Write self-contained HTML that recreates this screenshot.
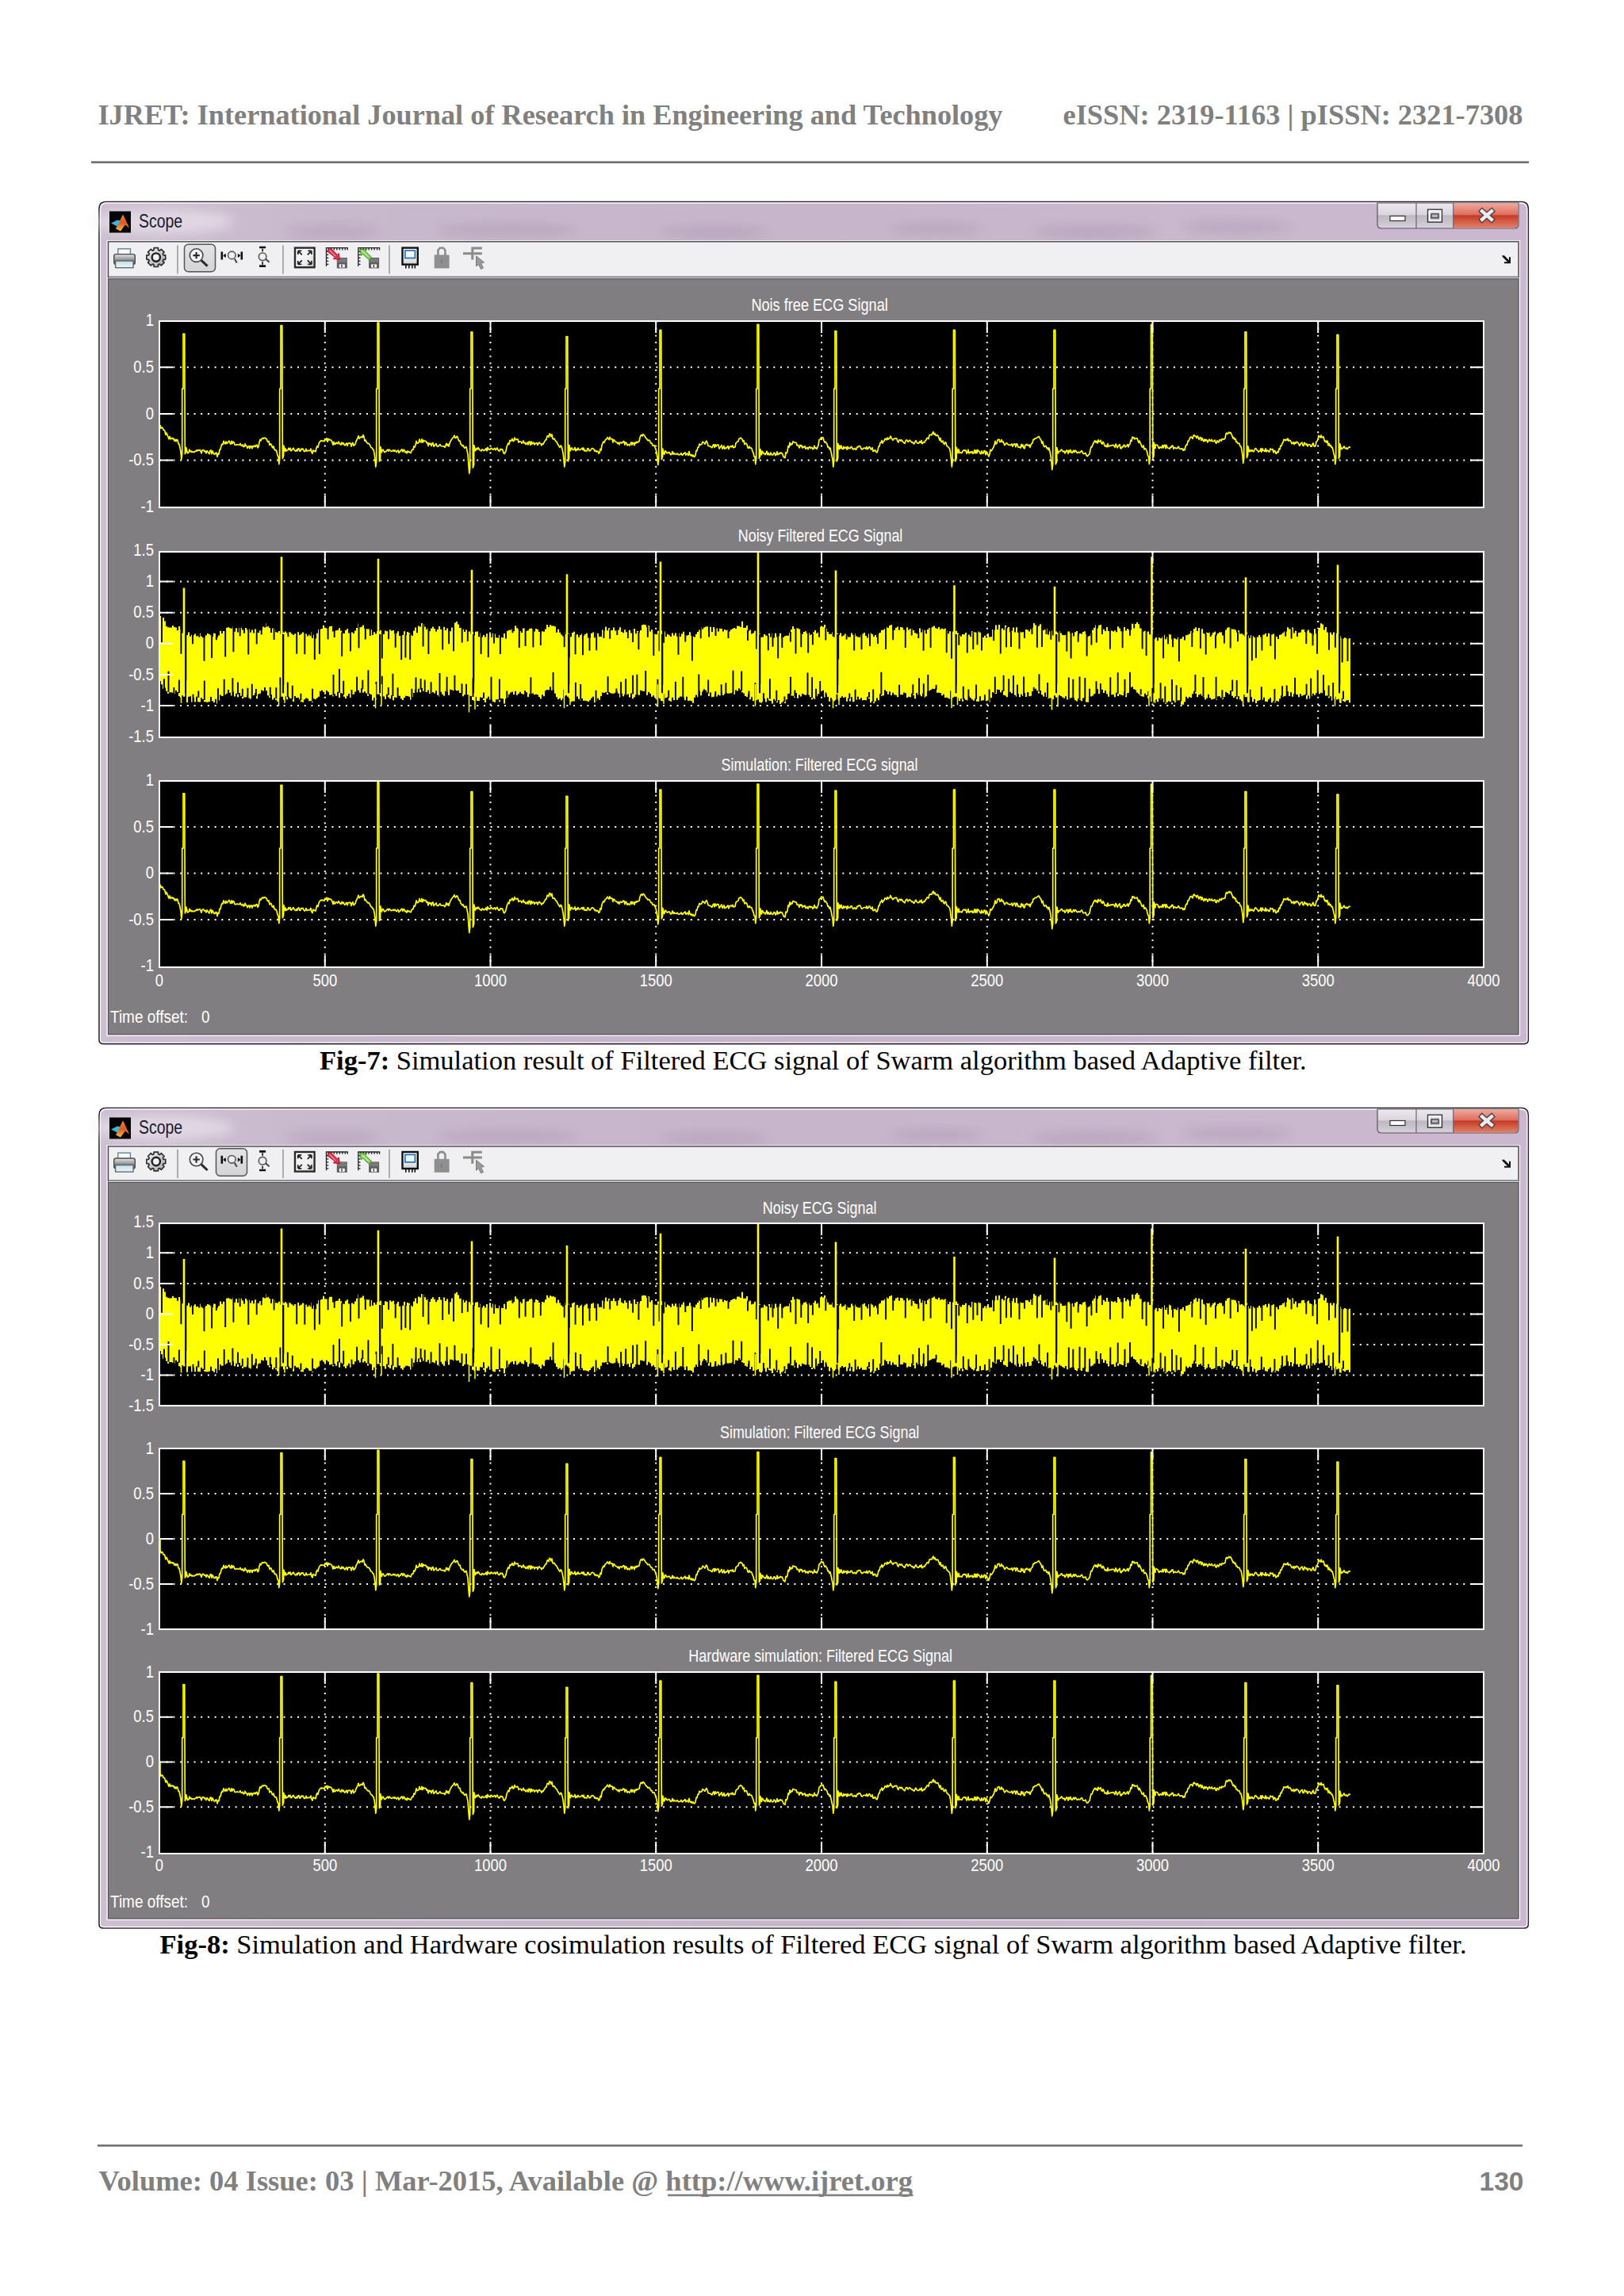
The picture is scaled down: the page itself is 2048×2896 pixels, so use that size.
<!DOCTYPE html>
<html><head><meta charset="utf-8"><title>IJRET page 130</title>
<style>
html,body{margin:0;padding:0;background:#fff}
body{width:2048px;height:2896px;position:relative;overflow:hidden}
svg{position:absolute;left:0;top:0}
.hd{font-family:"Liberation Serif",serif;font-weight:bold;fill:#808080}
.cap{font-family:"Liberation Serif",serif;fill:#000}
.ax{font-family:"Liberation Sans",sans-serif;font-size:21.5px;fill:#fff}
.ttl{font-family:"Liberation Sans",sans-serif;font-size:23px;fill:#1a1a2a}
</style></head><body>
<svg width="2048" height="2896" viewBox="0 0 2048 2896">
<defs>
<linearGradient id="frame" x1="0" y1="0" x2="1" y2="0">
<stop offset="0" stop-color="#cdbfd1"/><stop offset="0.15" stop-color="#c9b9cd"/><stop offset="0.5" stop-color="#c6b5cb"/><stop offset="0.8" stop-color="#c9b8ce"/><stop offset="1" stop-color="#cbb8d0"/>
</linearGradient>
<linearGradient id="btn" x1="0" y1="0" x2="0" y2="1">
<stop offset="0" stop-color="#ece8ee"/><stop offset="0.45" stop-color="#dcd7df"/><stop offset="0.5" stop-color="#bdb7c2"/><stop offset="1" stop-color="#d6d1da"/>
</linearGradient>
<linearGradient id="close" x1="0" y1="0" x2="0" y2="1">
<stop offset="0" stop-color="#f1a79a"/><stop offset="0.45" stop-color="#dc7060"/><stop offset="0.5" stop-color="#c73a25"/><stop offset="1" stop-color="#e0826a"/>
</linearGradient>
<filter id="blur" x="-50%" y="-50%" width="200%" height="200%"><feGaussianBlur stdDeviation="7"/></filter>
<linearGradient id="mlogo" x1="0" y1="0" x2="0" y2="1"><stop offset="0" stop-color="#f08a2a"/><stop offset="0.5" stop-color="#e0561e"/><stop offset="1" stop-color="#f6c040"/></linearGradient>
<linearGradient id="pressed" x1="0" y1="0" x2="0" y2="1"><stop offset="0" stop-color="#e4e3e6"/><stop offset="1" stop-color="#d4d3d6"/></linearGradient>
<linearGradient id="prbody" x1="0" y1="0" x2="0" y2="1"><stop offset="0" stop-color="#e8e8e8"/><stop offset="0.3" stop-color="#b8b8b8"/><stop offset="0.6" stop-color="#8a8a8a"/><stop offset="1" stop-color="#555"/></linearGradient>
<linearGradient id="prtray" x1="0" y1="0" x2="0" y2="1"><stop offset="0" stop-color="#c6dde3"/><stop offset="1" stop-color="#eaf6fa"/></linearGradient>
<linearGradient id="gearg" x1="0" y1="0" x2="1" y2="1"><stop offset="0" stop-color="#f4f4f4"/><stop offset="1" stop-color="#a8a8a8"/></linearGradient>
<linearGradient id="autog" x1="0" y1="0" x2="1" y2="1"><stop offset="0" stop-color="#fafafa"/><stop offset="0.6" stop-color="#f0f0f0"/><stop offset="1" stop-color="#c8c8c8"/></linearGradient>
<linearGradient id="monog" x1="0" y1="0" x2="0" y2="1"><stop offset="0" stop-color="#f8f8f8"/><stop offset="0.6" stop-color="#f0f0f0"/><stop offset="1" stop-color="#cfcfcf"/></linearGradient>

</defs>
<text x="123.5" y="157" class="hd" font-size="36.2" textLength="1141" lengthAdjust="spacingAndGlyphs">IJRET: International Journal of Research in Engineering and Technology</text>
<text x="1340.5" y="157" class="hd" font-size="36.2" textLength="580" lengthAdjust="spacingAndGlyphs">eISSN: 2319-1163 | pISSN: 2321-7308</text>
<rect x="115" y="203.3" width="1813" height="2.7" fill="#727272"/>
<path d="M125 263.5Q125 254.5 134 254.5H1918.3Q1927.3 254.5 1927.3 263.5V1311.6Q1927.3 1316.6 1922.3 1316.6H130Q125 1316.6 125 1311.6Z" fill="url(#frame)" stroke="#262626" stroke-width="1.6"/>
<path d="M126.5 264Q126.5 256 134.5 256H1917.8Q1925.8 256 1925.8 264V1311.1Q1925.8 1315.1 1921.8 1315.1H130.5Q126.5 1315.1 126.5 1311.1Z" fill="none" stroke="#fbf6fc" stroke-width="1.3"/>
<ellipse cx="420" cy="292.5" rx="60" ry="8" fill="#7a5a80" opacity="0.16" filter="url(#blur)"/>
<ellipse cx="640" cy="290.5" rx="90" ry="9" fill="#7a5a80" opacity="0.16" filter="url(#blur)"/>
<ellipse cx="900" cy="292.5" rx="70" ry="8" fill="#7a5a80" opacity="0.16" filter="url(#blur)"/>
<ellipse cx="1180" cy="288.5" rx="60" ry="7" fill="#7a5a80" opacity="0.16" filter="url(#blur)"/>
<ellipse cx="1380" cy="292.5" rx="80" ry="9" fill="#7a5a80" opacity="0.16" filter="url(#blur)"/>
<ellipse cx="1560" cy="286.5" rx="70" ry="8" fill="#7a5a80" opacity="0.16" filter="url(#blur)"/>
<ellipse cx="205" cy="279.5" rx="90" ry="16" fill="#f2ecf4" opacity="0.55" filter="url(#blur)"/>
<rect x="138" y="266.5" width="27" height="27" fill="#050505"/>
<path d="M146 288.5L151 278.5L155 270.5L158 276.5L163 287.5L158 283.5L152 291.5Z" fill="url(#mlogo)"/>
<path d="M140 281.5L148 277.5L152 278.5L148 285.5L144 283.5Z" fill="#3fb6d6"/>
<text x="175" y="287" class="ttl" textLength="55" lengthAdjust="spacingAndGlyphs">Scope</text>
<path d="M1737 256V283Q1737 288 1742 288H1910Q1915 288 1915 283V256Z" fill="url(#btn)" stroke="#5a5560" stroke-width="1.2"/>
<path d="M1833 256.6V287.4H1910Q1914.4 287.4 1914.4 283V256.6Z" fill="url(#close)"/>
<path d="M1786 256V288M1832.7 256V288" stroke="#6a6470" stroke-width="1.2"/>
<rect x="1753" y="272.5" width="19" height="6" fill="#fff" stroke="#333" stroke-width="1.2"/>
<rect x="1800.5" y="264.2" width="18" height="16" fill="none" stroke="#333" stroke-width="1.3"/>
<rect x="1802.5" y="266.2" width="14" height="12" fill="none" stroke="#fff" stroke-width="1.5"/>
<rect x="1805" y="269.8" width="9" height="5" fill="#b9b5be" stroke="#333" stroke-width="1.2"/>
<path d="M1869 266.4L1881 276.8M1881 266.4L1869 276.8" stroke="#4a3a44" stroke-width="7" stroke-linecap="square"/>
<path d="M1869 266.4L1881 276.8M1881 266.4L1869 276.8" stroke="#ececec" stroke-width="4.4" stroke-linecap="square"/>
<rect x="135" y="303.8" width="1781.5" height="1002.4" fill="none" stroke="#fbf6fc" stroke-width="1.3"/>
<rect x="136.5" y="304.8" width="1778.5" height="45" fill="#f0eff1" stroke="#4a4a4a" stroke-width="1.4"/>
<rect x="137" y="348.3" width="1778" height="2" fill="#8e8c90"/>
<rect x="137" y="350.3" width="1778" height="1.5" fill="#dcdadd"/>
<rect x="136.5" y="351.8" width="1778.5" height="952.9" fill="#807e81" stroke="#4f4955" stroke-width="1"/>
<rect x="223.2" y="309.3" width="1.6" height="36" fill="#9c9c9c"/>
<rect x="356.2" y="309.3" width="1.6" height="36" fill="#9c9c9c"/>
<rect x="490.2" y="309.3" width="1.6" height="36" fill="#9c9c9c"/>
<rect x="232.5" y="308.3" width="39" height="34.5" rx="5" fill="url(#pressed)" stroke="#555" stroke-width="1.5"/>
<g transform="translate(143 313.1)"><rect x="5.8" y="0.7" width="15.6" height="7.5" fill="#f4fafb" stroke="#6a8288" stroke-width="1.4"/><rect x="0.7" y="7.5" width="26.6" height="13" rx="2.5" fill="url(#prbody)" stroke="#4a4a4a" stroke-width="1.4"/><rect x="2.6" y="16" width="22.5" height="8.6" fill="url(#prtray)" stroke="#52666c" stroke-width="1.3"/></g>
<g transform="translate(196.8 324.6)"><path d="M9.2 -2.8L11.9 -2.7L11.9 2.7L9.2 2.8L8.5 4.5L10.3 6.5L6.5 10.3L4.5 8.5L2.8 9.2L2.7 11.9L-2.7 11.9L-2.8 9.2L-4.5 8.5L-6.5 10.3L-10.3 6.5L-8.5 4.5L-9.2 2.8L-11.9 2.7L-11.9 -2.7L-9.2 -2.8L-8.5 -4.5L-10.3 -6.5L-6.5 -10.3L-4.5 -8.5L-2.8 -9.2L-2.7 -11.9L2.7 -11.9L2.8 -9.2L4.5 -8.5L6.5 -10.3L10.3 -6.5L8.5 -4.5Z" fill="url(#gearg)" stroke="#2e2e2e" stroke-width="1.7" stroke-linejoin="round"/><circle r="5.2" fill="none" stroke="#222" stroke-width="2.4"/><circle r="3.4" fill="#f2f2f2"/></g>
<g transform="translate(247.6 322.1)" fill="none" stroke="#2a2a2a"><circle r="8.3" stroke-width="1.6" fill="#f4f4f6" stroke="#444"/><path d="M-4.2 0h8.4M0 -4.2v8.4" stroke-width="2.2"/><path d="M6.2 6.2L14 13.5" stroke-width="3"/></g>
<g transform="translate(292.3 321.9)" fill="none" stroke="#111"><path d="M-12.5 -4.5v10M12.5 -4.5v10" stroke-width="2.6"/><path d="M-10.5 0.5l2.5-2v4zM10.5 0.5l-2.5-2v4z" fill="#111" stroke-width="1"/><circle r="4.8" stroke-width="1.6" stroke="#555" fill="#eee"/><path d="M3.5 4.5L6.5 9.5" stroke-width="2" stroke="#444"/></g>
<g transform="translate(331.1 323.8)" fill="none" stroke="#111"><path d="M-4 -11.8h8M-4 11.8h8" stroke-width="2.6"/><path d="M0 -10v3.5M0 10v-3.5" stroke-width="1.6"/><circle r="4.8" stroke-width="1.6" stroke="#555" fill="#eee"/><path d="M4 3L8.5 7" stroke-width="2" stroke="#444"/></g>
<g transform="translate(370.8 311.4)"><rect x="1.2" y="1.2" width="24.6" height="24.6" fill="url(#autog)" stroke="#2b2b2b" stroke-width="2.4"/><path d="M5 5l5 5M5 5h4.5M5 5v4.5M22 5l-5 5M22 5h-4.5M22 5v4.5M5 22l5-5M5 22h4.5M5 22v-4.5M22 22l-5-5M22 22h-4.5M22 22v-4.5" stroke="#222" stroke-width="1.8" fill="none"/></g>
<g transform="translate(410.3 311.4)"><path d="M0.5 1.2h28M1.2 0.5v24M4 1v3M7.5 1v3M11 1v3M14.5 1v3M18 1v3M21.5 1v3M25 1v3M28 1v3M1 6h3M1 10h3M1 14h3M1 18h3M1 22h3" stroke="#222" stroke-width="1.3" fill="none"/><rect x="14.5" y="13.6" width="13" height="13.4" fill="#5e5e5e"/><rect x="15.5" y="14.5" width="11" height="5" fill="#7a7a7a"/><rect x="17.5" y="22" width="7" height="4" fill="#fff"/><rect x="20" y="22.5" width="1.5" height="3" fill="#333"/><path d="M2.5 4.5L6.5 1.5L15 10L17 8L18 16L10 15L12 13L3.5 6.5Z" fill="#e8304a" stroke="#b01020" stroke-width="1"/><path d="M5 4L13 12" stroke="#f6a0b0" stroke-width="1.2"/></g>
<g transform="translate(450.6 311.4)"><path d="M0.5 1.2h28M1.2 0.5v24M4 1v3M7.5 1v3M11 1v3M14.5 1v3M18 1v3M21.5 1v3M25 1v3M28 1v3M1 6h3M1 10h3M1 14h3M1 18h3M1 22h3" stroke="#222" stroke-width="1.3" fill="none"/><rect x="14.5" y="13.6" width="13" height="13.4" fill="#5e5e5e"/><rect x="15.5" y="14.5" width="11" height="5" fill="#7a7a7a"/><rect x="17.5" y="22" width="7" height="4" fill="#fff"/><rect x="20" y="22.5" width="1.5" height="3" fill="#333"/><path d="M3 3L12 3.5L10 5.5L18 13L15 16.5L7 9L5 11Z" fill="#8ad45a" stroke="#3c8c2a" stroke-width="1"/><path d="M6 5L14 12.5" stroke="#c4f0a0" stroke-width="1.2"/></g>
<g transform="translate(506.3 311.4)"><rect x="1.2" y="1.2" width="19.3" height="21" fill="url(#monog)" stroke="#111" stroke-width="2.4"/><rect x="4.6" y="4.6" width="12.5" height="9.5" fill="#eaf8fd" stroke="#1c68b8" stroke-width="1.6"/><path d="M5.5 23v4M9.5 23v4M13.5 23v4M17 23v4" stroke="#111" stroke-width="1.6"/></g>
<g transform="translate(547.4 311.4)"><path d="M5 10.5V4L7.5 1.3H11.5L14 4V10.5" fill="none" stroke="#8c8c8c" stroke-width="2.6"/><rect x="0.3" y="10" width="18.9" height="17" fill="#8f8f8f"/><rect x="8.5" y="16" width="2" height="5" fill="#7a7a7a"/></g>
<g transform="translate(584 311.4)"><path d="M10.3 1.5h13.5M0 8.3h23.8M11.8 1.5v14.5" stroke="#8a8a8a" stroke-width="3" fill="none"/><path d="M16.5 11.5L16.5 24.5L19.5 22L22.5 28L25.5 26.5L22.5 20.5L26.5 19.5Z" fill="#9a9a9a" stroke="#7a7a7a" stroke-width="1"/></g>
<path d="M1894 322.3h3l6 6v-4h2v8h-8v-2h4l-6-6Z" fill="#111"/>
<rect x="201" y="405" width="1670" height="235" fill="#000"/>
<path d="M201 463.3H1871M201 522H1871M201 580.6H1871M409.8 405V640M618.5 405V640M827.2 405V640M1036 405V640M1244.8 405V640M1453.5 405V640M1662.2 405V640" stroke="#fff" stroke-width="2" stroke-dasharray="2 6.7" fill="none"/>
<path d="M201 131.7L202 132.1L203 135.9L204 134.7L205 134.8L206 137.8L207 137.9L208 139.6L209 144L210 141.6L211 143.8L212 146.5L213 149.2L214 146.1L215 149.4L216 148.5L217 148L218 149.3L219 148.6L220 151.7L221 150L222 152.2L223 150L224 150.7L225 155.5L226 155.8L227 160.5L228 165.7L228.8 175.1L229.7 168L229.7 85.8L231 85.8L231 16.5L232.8 16.5L233.2 144.5L233.4 168L234.6 164.5L234.8 160.2L236.5 167.2L237 166.8L238 166.4L239 162.6L240 165.3L241 164.4L242 166.1L243 165.1L244 165.7L245 166L246 164.8L247 164.8L248 163.2L249 164.4L250 163.2L251 163.6L252 162.9L253 164.6L254 167.3L255 163.7L256 163.2L257 163.5L258 165.3L259 164.6L260 167.2L261 164.1L262 165.4L263 167L264 168.1L265 164.1L266 163.4L267 168.1L268 164.5L269 166.6L270 168.6L271 168.5L272 166.7L273 166.8L274 171.7L275 167.7L276 168.4L277 162.6L278 162.5L279 157.9L280 155.6L281 156.3L282 151.9L283 154.6L284 155.5L285 152.5L286 155.1L287 154L288 152.6L289 151.6L290 154.5L291 155.7L292 151.9L293 155.3L294 152.6L295 153.4L296 156.6L297 156.8L298 156.7L299 156.1L300 156.5L301 156.8L302 156.6L303 155L304 157.4L305 157.9L306 156.5L307 159.1L308 158.9L309 155.5L310 158L311 158L312 160.9L313 158.9L314 158.1L315 161.2L316 158.2L317 158.2L318 161.3L319 158.2L320 158.9L321 157.6L322 159.2L323 157.2L324 156.8L325 160.4L326 159L327 153.5L328 149.8L329 151.3L330 149.3L331 148L332 148.9L333 148L334 147.7L335 148.7L336 148.9L337 151.9L338 152.9L339 152L340 157.1L341 155.5L342 155.8L343 159.1L344 160.5L345 158.5L346 162.3L347 163.6L348 163.2L349 165.3L350 170L351 171.5L351.8 181L352.7 173.9L352.7 85.8L354 85.8L354 5.9L355.8 5.9L356.2 150.4L356.4 173.9L357.6 170.4L357.8 157.7L359.5 164.7L360 161.4L361 164.5L362 163.4L363 163.3L364 160.8L365 162.9L366 160.8L367 164.3L368 163.5L369 161.9L370 160.8L371 163L372 164.2L373 164.8L374 162.7L375 164.5L376 161.4L377 161.3L378 164.7L379 164.2L380 161.5L381 162.4L382 161.6L383 164L384 165.2L385 164.4L386 161.8L387 164.6L388 164.2L389 163.9L390 163.9L391 164L392 161.6L393 166.2L394 167.7L395 163.4L396 164.4L397 164.5L398 165.3L399 160.3L400 158.1L401 159.9L402 155.4L403 153.1L404 152.2L405 151.1L406 152L407 151.5L408 151.8L409 152.3L410 149.3L411 150.6L412 148.3L413 152.8L414 148.9L415 150.6L416 149.9L417 150.6L418 151.2L419 153.4L420 156.7L421 153L422 156.1L423 155.6L424 153.8L425 154.6L426 155.3L427 152.7L428 154.5L429 156L430 156.6L431 153.6L432 155.7L433 154.2L434 156.5L435 157.5L436 155.8L437 154.5L438 157.9L439 154.8L440 154.3L441 154.8L442 154.6L443 158.6L444 155.3L445 153.9L446 157.9L447 156.6L448 155.9L449 152.3L450 150.6L451 148.1L452 145.3L453 148.7L454 147.8L455 146.8L456 146.3L457 147.5L458 144.2L459 146.3L460 151.7L461 150.7L462 152.9L463 154.1L464 155.1L465 154.8L466 156L467 158.2L468 160L469 160.3L470 162.3L471 162.7L472 167.4L473 175.1L473.8 184.5L474.7 177.4L474.7 85.8L476 85.8L476 2.4L477.8 2.4L478.2 153.9L478.4 177.4L479.6 173.9L479.8 159.1L481.5 166.2L482 163.5L483 162.7L484 164.5L485 166.1L486 165.6L487 164.7L488 163.5L489 162.6L490 164.7L491 162.6L492 163.6L493 164.6L494 164.9L495 164.3L496 163.3L497 164.8L498 163.4L499 164.7L500 165.8L501 164.4L502 163.6L503 166.8L504 165L505 165.1L506 162.8L507 162.5L508 165.5L509 162.8L510 163.4L511 166.2L512 165.2L513 167.3L514 164.4L515 165.9L516 165.4L517 166.5L518 166.9L519 164.2L520 162.7L521 162.9L522 158.5L523 159.6L524 157.1L525 151.9L526 154.8L527 154.3L528 153.9L529 149.6L530 152.9L531 153.4L532 149.5L533 153.8L534 150.7L535 152.1L536 151.8L537 151.8L538 154.3L539 153.7L540 158L541 154.4L542 155.8L543 154.9L544 158.1L545 154.9L546 154.1L547 158.7L548 157.5L549 156.4L550 155.1L551 158.3L552 158.7L553 158.5L554 156.7L555 156.1L556 158.1L557 158.3L558 158.3L559 158.6L560 158.3L561 159.9L562 157.5L563 154.9L564 157.7L565 155.8L566 158.6L567 155L568 152.4L569 150.5L570 149L571 148.1L572 146.7L573 144.7L574 148L575 147.8L576 145.9L577 146.5L578 150.1L579 151.8L580 151.6L581 155.6L582 156.5L583 158.1L584 157.1L585 159.5L586 160.9L587 159.6L588 159.2L589 163.9L590 168.6L591 183.3L591.8 192.7L592.7 185.7L592.7 85.8L594 85.8L594 14.1L595.8 14.1L596.2 162.2L596.4 185.7L597.6 182.1L597.8 157.2L599.5 164.2L600 162.9L601 160.9L602 162.4L603 160.2L604 161.6L605 163.3L606 163.6L607 164.6L608 162.3L609 162.8L610 164L611 163L612 163.3L613 161L614 164.3L615 159.9L616 162.6L617 162L618 162.7L619 160.9L620 161L621 162.4L622 162.8L623 161.6L624 161L625 163.3L626 161.7L627 160.5L628 163.1L629 164.4L630 164.4L631 161.9L632 162.8L633 162L634 163.2L635 167L636 167.9L637 166.4L638 164.4L639 159.4L640 156.6L641 154.5L642 156L643 151L644 152.1L645 150.9L646 149L647 152L648 151.7L649 147.6L650 150.1L651 150.1L652 149.5L653 149.6L654 153.6L655 152.5L656 152.5L657 152.8L658 154.8L659 153.3L660 151.5L661 154.5L662 153.8L663 156.1L664 155.4L665 153.5L666 156.5L667 152.6L668 152.6L669 156.9L670 152.7L671 155.7L672 153.8L673 154L674 156.5L675 154.6L676 154.9L677 154.2L678 157.1L679 154.7L680 153.5L681 154.8L682 155.3L683 157.4L684 155.2L685 155.8L686 153.7L687 152.1L688 150.4L689 150.1L690 145.7L691 145.2L692 146.9L693 142.6L694 143.2L695 146.2L696 143.5L697 149L698 149.5L699 148.8L700 150.7L701 152.1L702 152.8L703 155.1L704 156.8L705 158.5L706 160L707 157.6L708 158.4L709 162.1L710 166.8L711 175.1L711.8 184.5L712.7 177.4L712.7 85.8L714 85.8L714 20L715.8 20L716.2 153.9L716.4 177.4L717.6 173.9L717.8 157L719.5 164.1L720 161.5L721 160.5L722 162.5L723 163L724 162.5L725 160L726 164.3L727 162L728 163.3L729 160.7L730 162.9L731 163L732 162.7L733 162L734 160.8L735 163L736 160.5L737 164.4L738 163.6L739 164.5L740 164.5L741 161.1L742 161.4L743 164.2L744 164.2L745 163.1L746 161.5L747 161.1L748 161.5L749 162.3L750 164.7L751 163.8L752 165.5L753 164.5L754 164.9L755 167.5L756 167L757 161.9L758 163.4L759 157.2L760 154.8L761 152.7L762 153.7L763 151L764 149.9L765 149.4L766 147.3L767 148.5L768 150.2L769 147L770 149.3L771 149.2L772 149.2L773 153.5L774 150.1L775 151.2L776 152.6L777 153L778 153.7L779 155.2L780 153.6L781 156.3L782 154L783 153.4L784 154.5L785 154L786 152.1L787 152.6L788 156.6L789 153.3L790 154.3L791 157.4L792 155.9L793 156.7L794 157.6L795 155.3L796 153.4L797 156.7L798 153.8L799 154.6L800 157.3L801 153.4L802 154.6L803 152.7L804 153.6L805 152.7L806 152.4L807 147.7L808 144.7L809 144.1L810 145.6L811 143.4L812 144.2L813 145.6L814 147.4L815 148.7L816 149.6L817 151.2L818 150.7L819 150.9L820 153L821 154.8L822 154.7L823 157.5L824 157.6L825 157.1L826 159.9L827 161.8L828 166.5L829 172.7L829.8 182.1L830.7 175.1L830.7 85.8L832 85.8L832 11.7L833.8 11.7L834.2 151.6L834.4 175.1L835.6 171.5L835.8 161.6L837.5 168.7L838 168L839 164.3L840 165.3L841 167.1L842 167.1L843 166.3L844 166L845 168L846 169.2L847 168.1L848 165.2L849 168.6L850 167L851 168.4L852 168.3L853 168.6L854 167.4L855 168.7L856 169.4L857 169L858 168.8L859 167.1L860 169.4L861 169.6L862 167.5L863 167.7L864 166.2L865 169.6L866 167.8L867 167.9L868 169.9L869 165L870 169L871 170.3L872 169L873 171.2L874 169.5L875 171.5L876 171.7L877 169.7L878 164L879 164.2L880 159.8L881 159.7L882 155.5L883 156.9L884 156.3L885 155.9L886 152.8L887 153.5L888 154.6L889 155.7L890 152.7L891 151.7L892 154.2L893 157.8L894 158.2L895 158.5L896 158.6L897 159.8L898 160.3L899 157.4L900 156.2L901 159.9L902 156.1L903 158.7L904 157.2L905 156.7L906 156.7L907 161.5L908 160.2L909 158.7L910 157.1L911 161.7L912 160.7L913 157.9L914 161.9L915 160.5L916 160.9L917 159.3L918 158.1L919 162.1L920 159.1L921 158.9L922 158.2L923 159.5L924 157.5L925 160.2L926 159.8L927 159.5L928 154.4L929 153.7L930 152.6L931 152.2L932 148.8L933 148.8L934 147.7L935 148.7L936 149.5L937 152.6L938 151.2L939 156.1L940 155L941 154.7L942 156.3L943 160.5L944 160.9L945 158.7L946 160.7L947 160.5L948 161.4L949 164.6L950 166.7L951 171.4L952 171.5L952.8 181L953.7 173.9L953.7 85.8L955 85.8L955 4.7L956.8 4.7L957.2 150.4L957.4 173.9L958.6 170.4L958.8 162.1L960.5 169.1L961 164.7L962 165.6L963 167.7L964 167.6L965 169.2L966 167.5L967 164.7L968 169.2L969 166.8L970 169.2L971 169.4L972 166.5L973 168.7L974 169.7L975 169.2L976 166.7L977 167.1L978 170.1L979 169L980 165.3L981 169.2L982 167.4L983 168.2L984 166.4L985 167.4L986 166.9L987 169L988 171.6L989 172.5L990 173.1L991 166.3L992 167.1L993 165.2L994 158.1L995 159.8L996 154L997 157.4L998 155.1L999 156L1000 152.5L1001 153.2L1002 153.7L1003 153.8L1004 153.9L1005 157.3L1006 156.7L1007 158.2L1008 160.5L1009 156.9L1010 158.3L1011 157.3L1012 160.6L1013 159L1014 159.6L1015 158.3L1016 161.8L1017 160.6L1018 160L1019 162.3L1020 159.9L1021 159.1L1022 160.9L1023 159.9L1024 160.2L1025 162.3L1026 161.4L1027 157.8L1028 161L1029 160.3L1030 161.9L1031 159.7L1032 157.2L1033 150.4L1034 149.9L1035 148.3L1036 147L1037 148.2L1038 147.5L1039 151.3L1040 153.7L1041 152.6L1042 154.3L1043 155.6L1044 159.5L1045 159.2L1046 162.3L1047 160.5L1048 165.4L1049 170.1L1050 175.1L1050.8 184.5L1051.7 177.4L1051.7 85.8L1053 85.8L1053 12.9L1054.8 12.9L1055.2 153.9L1055.4 177.4L1056.6 173.9L1056.8 155.1L1058.5 162.1L1059 157.6L1060 161L1061 157.7L1062 161.7L1063 162.1L1064 158.9L1065 161.2L1066 160L1067 159.5L1068 162.6L1069 159L1070 161.4L1071 160.6L1072 161.1L1073 159.1L1074 159.1L1075 161.5L1076 162.5L1077 161.5L1078 161L1079 162.7L1080 162.4L1081 159.2L1082 159.6L1083 158.2L1084 158.2L1085 158.8L1086 161.4L1087 162.5L1088 161.8L1089 161L1090 160.7L1091 160.7L1092 161.7L1093 159.1L1094 162.1L1095 161.2L1096 159.1L1097 159.5L1098 162.2L1099 162.5L1100 160.2L1101 164.8L1102 164.7L1103 163.2L1104 163.6L1105 166.1L1106 166.2L1107 163.5L1108 158.7L1109 158.4L1110 154.1L1111 153.7L1112 151.2L1113 154.6L1114 152.3L1115 151.8L1116 149L1117 149.2L1118 150.5L1119 147.7L1120 149.8L1121 148.4L1122 148.5L1123 145.6L1124 148L1125 149.3L1126 150.8L1127 149.3L1128 148.7L1129 148.9L1130 148.2L1131 149.1L1132 152.5L1133 153.5L1134 150.5L1135 150.4L1136 151.9L1137 150.4L1138 151.9L1139 153.4L1140 154.1L1141 155L1142 151.8L1143 150.6L1144 150.6L1145 153L1146 152.1L1147 150.8L1148 151.5L1149 152.7L1150 153.7L1151 153.3L1152 155.2L1153 155.2L1154 152.7L1155 151.2L1156 153.6L1157 154.4L1158 154.8L1159 154.3L1160 152.3L1161 154L1162 151.3L1163 155.3L1164 154.3L1165 153.1L1166 153.6L1167 151.2L1168 150.5L1169 148.2L1170 148L1171 149.1L1172 144.5L1173 144L1174 143.8L1175 144.4L1176 141.7L1177 140.2L1178 143.8L1179 142L1180 144.7L1181 145.1L1182 144.3L1183 145.1L1184 147.7L1185 151L1186 148.2L1187 153L1188 153L1189 151.6L1190 155L1191 156L1192 153.3L1193 154.1L1194 158.1L1195 158.5L1196 159.9L1197 160.8L1197.5 161.2L1198.5 165.9L1199.5 175.1L1200.3 184.5L1201.2 177.4L1201.2 85.8L1202.5 85.8L1202.5 11.7L1204.3 11.7L1204.7 153.9L1204.9 177.4L1206.1 173.9L1206.3 160L1208 167.1L1208 165.9L1209 162.3L1210 166.9L1211 166.2L1212 166.4L1213 167L1214 164.8L1215 163.7L1216 163.2L1217 164.3L1218 163.4L1219 167.6L1220 166.3L1221 162.8L1222 167.4L1223 166.4L1224 165.4L1225 166.5L1226 165.1L1227 167.7L1228 166.8L1229 163.1L1230 167.3L1231 163.4L1232 167.2L1233 163L1234 164.7L1235 164.9L1236 167.5L1237 168L1238 164.4L1239 167.5L1240 167.4L1241 164.2L1242 164.3L1243 169.2L1244 165.1L1245 167.9L1246 169.3L1247 171.4L1248 168.1L1249 162.8L1250 164.2L1251 163.1L1252 161.2L1253 159.6L1254 156.7L1255 152L1256 155.6L1257 154.7L1258 150.5L1259 150L1260 149.8L1261 153.3L1262 152.7L1263 150.2L1264 153.1L1265 152.5L1266 155L1267 157.1L1268 155.9L1269 154.4L1270 154.7L1271 156.2L1272 156.8L1273 156.6L1274 157.2L1275 156.8L1276 155.4L1277 158.7L1278 156.8L1279 155.2L1280 155.7L1281 159.3L1282 155.3L1283 156.1L1284 159.7L1285 159.3L1286 159.7L1287 160.6L1288 155.9L1289 159L1290 156.7L1291 160.7L1292 161.3L1293 156.8L1294 157L1295 155.8L1296 157.3L1297 157.9L1298 156.5L1299 159.9L1300 156.7L1301 155L1302 154.4L1303 149.9L1304 150L1305 148.5L1306 148.6L1307 148.3L1308 147.5L1309 146.7L1310 146.1L1311 147.7L1312 149.5L1313 150.9L1314 154.9L1315 152.5L1316 157.3L1317 159.2L1318 158.3L1319 158L1320 161L1321 160.3L1322 163.1L1323 160.5L1324 165.3L1325 170L1326 178.6L1326.8 188L1327.7 181L1327.7 85.8L1329 85.8L1329 11.7L1330.8 11.7L1331.2 157.5L1331.4 181L1332.6 177.4L1332.8 160.2L1334.5 167.3L1335 165.2L1336 165.1L1337 164.8L1338 163.1L1339 162.6L1340 165L1341 165.4L1342 164.6L1343 167.4L1344 165.6L1345 163.5L1346 163.9L1347 167.6L1348 163.6L1349 166L1350 163L1351 166.2L1352 167L1353 165.3L1354 163.6L1355 166L1356 163.8L1357 164.6L1358 166.5L1359 166.8L1360 165.8L1361 166.4L1362 166.6L1363 165.2L1364 164.1L1365 165.6L1366 167.9L1367 167.7L1368 167.6L1369 166.9L1370 170L1371 171L1372 170.4L1373 169L1374 168.1L1375 163.1L1376 159.2L1377 159.4L1378 156.5L1379 154.3L1380 152.4L1381 151.4L1382 153.6L1383 152L1384 154.6L1385 150.4L1386 152.7L1387 152.5L1388 150.9L1389 154.6L1390 155.6L1391 152.9L1392 154.6L1393 157.8L1394 158.6L1395 157.5L1396 159.4L1397 155.2L1398 158.7L1399 158.3L1400 157.8L1401 157.3L1402 157.8L1403 156.9L1404 156.9L1405 158.2L1406 160L1407 155.6L1408 157.2L1409 160.4L1410 158.7L1411 157.2L1412 156.1L1413 161L1414 161.4L1415 159.1L1416 159.4L1417 156.8L1418 157L1419 159.4L1420 158.8L1421 157.8L1422 156.1L1423 159.4L1424 156.4L1425 155.7L1426 150.7L1427 152L1428 146.7L1429 148.2L1430 147.3L1431 149.3L1432 148.6L1433 148.8L1434 148.2L1435 151.3L1436 153.9L1437 151.5L1438 154.3L1439 156.2L1440 159.1L1441 159.6L1442 157.5L1443 162.4L1444 161.3L1445 161.8L1446 164.1L1446.5 165.3L1447.5 170L1448.5 171.5L1449.3 181L1450.2 173.9L1450.2 85.8L1451.5 85.8L1451.5 4.7L1453.3 4.7L1453.7 150.4L1453.9 173.9L1455.1 170.4L1455.3 154L1457 161L1457 157.2L1458 156.6L1459 156.9L1460 157.5L1461 160.3L1462 161.1L1463 159.2L1464 159.9L1465 160.5L1466 157.1L1467 160.5L1468 157.4L1469 156.8L1470 161.1L1471 157L1472 159.8L1473 160.8L1474 160.9L1475 161.7L1476 159.4L1477 160L1478 157.6L1479 157.8L1480 161.8L1481 160.1L1482 160.2L1483 161.3L1484 161L1485 160.9L1486 158.8L1487 160.6L1488 161.8L1489 161.9L1490 161.4L1491 161.5L1492 163.8L1493 162.1L1494 163.4L1495 158.6L1496 156.6L1497 156.8L1498 151.9L1499 151.9L1500 149.3L1501 147.2L1502 146.6L1503 147.2L1504 148.9L1505 144.9L1506 144.2L1507 145.8L1508 145.9L1509 148.1L1510 145.4L1511 147L1512 150L1513 147.5L1514 147.2L1515 151.1L1516 148L1517 150.7L1518 152.4L1519 149.7L1520 151.8L1521 149.9L1522 150.8L1523 153.4L1524 151.3L1525 149.8L1526 151.8L1527 151.6L1528 150L1529 152.3L1530 152.2L1531 151.8L1532 150.7L1533 154L1534 154.7L1535 151.4L1536 152.4L1537 153.5L1538 150.3L1539 150.2L1540 151.8L1541 149.3L1542 150L1543 149.3L1544 149.4L1545 148.5L1546 142.7L1547 141.6L1548 143L1549 141.7L1550 140.6L1551 142L1552 141.1L1553 143.3L1554 145.7L1555 148.5L1556 147.4L1557 149.9L1558 149L1559 153.1L1560 153L1561 155L1562 154.9L1563 155L1564 158.5L1565 158.8L1566 163.5L1567 170.4L1567.8 179.8L1568.7 172.7L1568.7 85.8L1570 85.8L1570 14.1L1571.8 14.1L1572.2 149.2L1572.4 172.7L1573.6 169.2L1573.8 158.3L1575.5 165.3L1576 165.3L1577 163.1L1578 164.6L1579 163.1L1580 164.9L1581 165.3L1582 163L1583 161.1L1584 161.4L1585 163.3L1586 163.9L1587 165.7L1588 164.6L1589 164.5L1590 161.3L1591 165.6L1592 161.3L1593 163.8L1594 164L1595 165L1596 161.4L1597 165.4L1598 163.5L1599 163.8L1600 165.5L1601 165.4L1602 161.5L1603 162.5L1604 162.9L1605 162L1606 166.4L1607 163.9L1608 164.3L1609 167.7L1610 167.2L1611 165.2L1612 166.2L1613 161.5L1614 162.2L1615 157.7L1616 157.9L1617 154.7L1618 153.5L1619 149.8L1620 150.1L1621 151.1L1622 149.8L1623 150.8L1624 148.6L1625 151.7L1626 150.8L1627 151.1L1628 152.7L1629 155.1L1630 155L1631 153.2L1632 156L1633 153.5L1634 154.9L1635 152.7L1636 153.4L1637 154.1L1638 156.1L1639 157.9L1640 155.4L1641 154.5L1642 153.7L1643 157.5L1644 157.9L1645 153.8L1646 155.1L1647 156.6L1648 155.4L1649 158.5L1650 156.6L1651 156.1L1652 156.5L1653 158.7L1654 158.7L1655 156L1656 154.5L1657 158.2L1658 158.7L1659 158.1L1660 152.5L1661 152.1L1662 149.4L1663 144.9L1664 146.3L1665 147.4L1666 144.5L1667 147.5L1668 147L1669 146.4L1670 150.6L1671 152.8L1672 151.5L1673 153.8L1674 151.7L1675 157.5L1676 155L1677 158.1L1678 157L1679 159.9L1680 159.7L1681 162.9L1682 167.6L1683 171.5L1683.8 181L1684.7 173.9L1684.7 85.8L1686 85.8L1686 17.6L1687.8 17.6L1688.2 150.4L1688.4 173.9L1689.6 170.4L1689.8 155.3L1691.5 162.3L1692 160.9L1693 161.4L1694 160.2L1695 158.4L1696 160.8L1697 161.4L1698 160.4L1699 162.1L1700 160.9L1701 159.6L1702 159.7L1703 159.5" transform="translate(0 404.7) scale(1 0.99830)" fill="none" stroke="#ffff00" stroke-width="1.7" stroke-linejoin="round" vector-effect="non-scaling-stroke"/>
<path d="M201 463.3h17M1871 463.3h-17M201 522h17M1871 522h-17M201 580.6h17M1871 580.6h-17M409.8 405v15M409.8 640v-15M618.5 405v15M618.5 640v-15M827.2 405v15M827.2 640v-15M1036 405v15M1036 640v-15M1244.8 405v15M1244.8 640v-15M1453.5 405v15M1453.5 640v-15M1662.2 405v15M1662.2 640v-15" stroke="#fff" stroke-width="2" fill="none"/>
<rect x="201" y="405" width="1670" height="235" fill="none" stroke="#fff" stroke-width="2"/>
<text transform="translate(194 411.3) scale(0.86 1)" text-anchor="end" class="ax">1</text>
<text transform="translate(194 469.9) scale(0.86 1)" text-anchor="end" class="ax">0.5</text>
<text transform="translate(194 528.6) scale(0.86 1)" text-anchor="end" class="ax">0</text>
<text transform="translate(194 587.2) scale(0.86 1)" text-anchor="end" class="ax">-0.5</text>
<text transform="translate(194 645.9) scale(0.86 1)" text-anchor="end" class="ax">-1</text>
<text x="947.4" y="391.8" class="ax" textLength="172.4" lengthAdjust="spacingAndGlyphs">Nois free ECG Signal</text>
<rect x="201" y="696" width="1670" height="234" fill="#000"/>
<path d="M201 733.6H1871M201 772.7H1871M201 811.8H1871M201 850.9H1871M201 890H1871M409.8 696V930M618.5 696V930M827.2 696V930M1036 696V930M1244.8 696V930M1453.5 696V930M1662.2 696V930" stroke="#fff" stroke-width="2" stroke-dasharray="2 6.7" fill="none"/>
<g transform="translate(0 694.5) scale(1 1.00085)"><path d="M201 82.4H201V82.4H203V90H205V84.5H207V88.9H209V95.3H211V96.6H213V96.9H215V96.8H217V94.3H219V96.4H221V96.8H223V100.3H225V95.4H227V98.9H229V103.9H231V106.3H233V105.9H235V106.3H237V103H239V108.1H241V106.1H243V106.7H245V104.9H247V107.8H249V107.3H251V104.1H253V108.1H255V109.6H257V108.7H259V106.7H261V104.5H263V105.3H265V107H267V108.3H269V104.2H271V104.4H273V109.1H275V106.9H277V101.1H279V104.3H281V101.4H283V101.5H285V97.2H287V96.7H289V97.7H291V98.2H293V95.9H295V102.2H297V97.7H299V102.8H301V97.1H303V97.2H305V100H307V104.1H309V97.5H311V99.7H313V98.9H315V103.2H317V100H319V103.9H321V98.8H323V103H325V103.4H327V100.6H329V99.3H331V95.9H333V96.9H335V91.4H337V95.2H339V97.5H341V103.3H343V98H345V98.9H347V102.7H349V103.2H351V101.3H353V105.1H355V101.2H357V103.1H359V101.8H361V103.7H363V102.3H365V103H367V104.8H369V106.3H371V104.6H373V104.4H375V102.6H377V106.4H379V105H381V103H383V103.8H385V105H387V107.9H389V105.9H391V102.6H393V110.4H395V106H397V110.8H399V104.1H401V99.5H403V98.9H405V98.3H407V94.1H409V97.9H411V98H413V97.3H415V95.3H417V95.2H419V102H421V101.5H423V100.6H425V100.1H427V97.6H429V100.8H431V104.2H433V104.3H435V100.3H437V98.7H439V104H441V104.9H443V103H445V104.3H447V101H449V97.3H451V92H453V96.7H455V96.1H457V94H459V98.2H461V98.6H463V98.9H465V98.6H467V99.6H469V106.4H471V102.6H473V105H475V101.7H477V101.8H479V100.4H481V103.3H483V105.5H485V100.8H487V101.6H489V100.2H491V99.7H493V101.2H495V100.3H497V104.7H499V104.1H501V101.6H503V107.4H505V107.2H507V106.4H509V101.6H511V106.7H513V102.5H515V103.6H517V106H519V107.5H521V101H523V96.9H525V96H527V94.9H529V95.9H531V91.5H533V92.5H535V95.8H537V99.1H539V97.5H541V101.5H543V97.8H545V95.8H547V98.3H549V101.8H551V99.3H553V95.4H555V99.1H557V99.6H559V96.1H561V100.5H563V98H565V101.6H567V101.7H569V97H571V94.1H573V90.9H575V89.3H577V93H579V97.4H581V97.1H583V99H585V102.3H587V100H589V102.1H591V101.8H593V105H595V102.5H597V106.7H599V102.2H601V101.8H603V108.6H605V104H607V109H609V106.5H611V108.9H613V104.6H615V108.4H617V102.9H619V109.2H621V104.2H623V104.8H625V109.7H627V110H629V106.3H631V109.2H633V109.6H635V104.4H637V111H639V101.2H641V100.1H643V100H645V98.6H647V101.5H649V94.6H651V97.7H653V98.9H655V101.5H657V103.4H659V97.9H661V97.6H663V101.3H665V100.7H667V98.5H669V97.8H671V99H673V102H675V98.5H677V99.5H679V102.5H681V104.9H683V101.6H685V102.2H687V98.8H689V93.3H691V96.3H693V93.7H695V94.8H697V94.8H699V95.7H701V103.1H703V99.1H705V103.1H707V106H709V108H711V102H713V105.3H715V104.1H717V103.9H719V108.6H721V103.4H723V102.2H725V105.8H727V105.7H729V109.1H731V106.3H733V105H735V107.5H737V105.4H739V104.2H741V109.8H743V109.6H745V104.1H747V103H749V109.7H751V103H753V104.2H755V108.4H757V108.5H759V100H761V101.2H763V96H765V100.7H767V97.6H769V100.4H771V100.4H773V96.9H775V100.9H777V100.4H779V99.8H781V96.7H783V102.4H785V97.5H787V99.7H789V102.6H791V100.5H793V100.1H795V103.8H797V97.7H799V98.4H801V104.6H803V101.5H805V103.4H807V100.5H809V93.6H811V93.1H813V93.6H815V96.6H817V94.6H819V101.9H821V99.6H823V104.2H825V105.2H827V105.6H829V101.1H831V104.8H833V100.9H835V105.6H837V101.9H839V108.3H841V105.2H843V106.7H845V108.5H847V104H849V106.8H851V103.8H853V108.2H855V103.7H857V108.5H859V105H861V102.1H863V106.1H865V107.2H867V106.5H869V102.7H871V107.3H873V108.2H875V108.8H877V105.2H879V102.5H881V100H883V96.1H885V99H887V96.8H889V96H891V95.7H893V101.1H895V96.1H897V102.4H899V96.5H901V98.7H903V98H905V102H907V98.1H909V98.3H911V101.8H913V99.3H915V100.5H917V99.3H919V101.8H921V99.6H923V98.3H925V97.4H927V98.4H929V94.9H931V95.1H933V96.5H935V89.1H937V97.3H939V97.2H941V94.5H943V101.3H945V100H947V104.9H949V104H951V101.2H953V107.7H955V107.1H957V104.9H959V109.2H961V108.9H963V105.3H965V107H967V107.6H969V104.5H971V108.8H973V104H975V109.8H977V104.2H979V108.7H981V107.7H983V104.1H985V110H987V109.1H989V107.6H991V107.2H993V107.2H995V103.4H997V99.5H999V95.3H1001V98.4H1003V97.4H1005V97.9H1007V98.8H1009V103.6H1011V105.2H1013V102.5H1015V101.7H1017V104.1H1019V103.4H1021V106.2H1023V105.4H1025V103H1027V100.4H1029V104.2H1031V103.1H1033V96.1H1035V94.8H1037V96.1H1039V93.4H1041V98.1H1043V102.3H1045V105.2H1047V105.1H1049V102.5H1051V109H1053V108.7H1055V104.5H1057V106.3H1059V104H1061V107.8H1063V106.8H1065V105H1067V106.9H1069V108.8H1071V108.8H1073V104H1075V106.5H1077V105H1079V107.9H1081V108.8H1083V109.2H1085V106.5H1087V104.8H1089V103.5H1091V107.4H1093V109.9H1095V104.6H1097V103.9H1099V105.4H1101V108.3H1103V106.5H1105V109.3H1107V104.5H1109V103.4H1111V100.1H1113V99.9H1115V98.3H1117V96.1H1119V97.3H1121V94.5H1123V93.4H1125V99.8H1127V100.1H1129V97.1H1131V95.9H1133V100.2H1135V96.4H1137V97H1139V99.8H1141V102.3H1143V96.7H1145V99.9H1147V98.3H1149V97.8H1151V100.5H1153V103.6H1155V104.6H1157V103.9H1159V98H1161V102.8H1163V99.3H1165V100.2H1167V104.6H1169V99.3H1171V97.5H1173V97.5H1175V96.2H1177V95H1179V97.6H1181V98.4H1183V96.3H1185V99.1H1187V98.2H1189V99H1191V98.1H1193V100.3H1195V104.6H1197V101.6H1199V104.7H1201V102H1203V108.8H1205V101.1H1207V103.8H1209V106.3H1211V108.2H1213V105.3H1215V105.7H1217V103.4H1219V107.1H1221V105.9H1223V108.5H1225V101.5H1227V102.3H1229V102.9H1231V103.4H1233V102.2H1235V103.1H1237V105.2H1239V109.4H1241V107.1H1243V109.6H1245V104.5H1247V109H1249V108.7H1251V99.3H1253V100.1H1255V94H1257V99.3H1259V93.4H1261V98.7H1263V97.8H1265V99.9H1267V94.2H1269V97.7H1271V96.4H1273V102.6H1275V101.1H1277V96.9H1279V102.8H1281V96.6H1283V103.5H1285V101.9H1287V102.9H1289V102.7H1291V98.5H1293V99.5H1295V99.9H1297V101.9H1299V98.8H1301V97H1303V91.5H1305V93.8H1307V96.8H1309V94.8H1311V92.6H1313V98.4H1315V100.3H1317V99.4H1319V98H1321V106H1323V101.6H1325V100.8H1327V106.9H1329V103.5H1331V102H1333V103.4H1335V101.2H1337V103.8H1339V106.5H1341V106.6H1343V106.1H1345V102H1347V101.9H1349V104.3H1351V103.6H1353V108H1355V102.7H1357V101.5H1359V107.2H1361V104.5H1363V105H1365V102.3H1367V101.6H1369V105.3H1371V108.5H1373V107.4H1375V104.3H1377V100.1H1379V97.2H1381V93.8H1383V97.8H1385V94.1H1387V93.3H1389V96.9H1391V99.2H1393V101.3H1395V96.4H1397V101.3H1399V96.8H1401V100.9H1403V101.8H1405V100.7H1407V102.6H1409V95.6H1411V97.8H1413V101.7H1415V101.9H1417V96.5H1419V100.9H1421V98.5H1423V100H1425V99.8H1427V92.1H1429V92.1H1431V92.3H1433V90.4H1435V92.7H1437V97.8H1439V97.8H1441V102H1443V101.2H1445V102.6H1447V101.8H1449V105.7H1451V107H1453V108.1H1455V111.1H1457V109.5H1459V104.4H1461V109.6H1463V110.6H1465V109H1467V106.2H1469V111.7H1471V109H1473V105.1H1475V106H1477V111.7H1479V110.3H1481V111H1483V112H1485V109H1487V111.3H1489V110.8H1491V108.5H1493V113H1495V106.6H1497V106.2H1499V105H1501V101.6H1503V103.5H1505V98.5H1507V96.7H1509V101.4H1511V97.3H1513V99.9H1515V98.6H1517V104.4H1519V105.7H1521V103.5H1523V103.7H1525V103H1527V105.8H1529V103.5H1531V102.2H1533V106.8H1535V104.4H1537V103H1539V103H1541V106.9H1543V103.4H1545V100H1547V97.2H1549V96.6H1551V97.7H1553V98.9H1555V99.1H1557V99.9H1559V103.1H1561V100.7H1563V105H1565V104.7H1567V106.2H1569V108.1H1571V103.2H1573V107H1575V110.1H1577V106.5H1579V107.7H1581V109.4H1583V108.9H1585V108.9H1587V106.5H1589V108.9H1591V105.8H1593V106H1595V104.5H1597V108.4H1599V104.1H1601V105.5H1603V105.8H1605V104.8H1607V106.9H1609V108.3H1611V111.3H1613V106.2H1615V105.6H1617V103.6H1619V102H1621V102H1623V96.6H1625V98.6H1627V99.1H1629V96.9H1631V104H1633V101.1H1635V102.1H1637V103.4H1639V103H1641V99.7H1643V99.4H1645V102.7H1647V101.3H1649V100H1651V103.5H1653V104.7H1655V106.1H1657V98.7H1659V104.7H1661V99.6H1663V97.1H1665V91.6H1667V92.9H1669V99.8H1671V96.4H1673V102.8H1675V105.2H1677V103.1H1679V105.8H1681V103H1683V106.9H1685V104.2H1687V108.6H1689V107.4H1691V110.5H1693V110.8H1695V109.7H1697V110.7H1699V111.5H1701V110.5H1703V109.5H1703V191.5H1703V191.5H1701V188.4H1699V188.9H1697V190.7H1695V189.5H1693V186H1691V191.9H1689V187H1687V187.9H1685V184.2H1683V186.7H1681V189H1679V183.6H1677V185.6H1675V182.8H1673V182.8H1671V176H1669V179.5H1667V179.2H1665V180.6H1663V174.5H1661V179.6H1659V182.1H1657V180.1H1655V183.3H1653V186.7H1651V182.9H1649V187H1647V181.3H1645V182.1H1643V183H1641V180.7H1639V184.6H1637V181.4H1635V181.2H1633V180.5H1631V184.1H1629V178.5H1627V183.3H1625V177.7H1623V182.9H1621V183.4H1619V184.1H1617V182.6H1615V186.6H1613V190.2H1611V189.4H1609V191.4H1607V189.6H1605V191.6H1603V185.3H1601V187.3H1599V190.3H1597V190H1595V185H1593V188.2H1591V188.2H1589V188.6H1587V189.3H1585V192.3H1583V187H1581V190.7H1579V184.6H1577V189.7H1575V190.9H1573V184.6H1571V184.5H1569V190.8H1567V189.5H1565V187.5H1563V183.7H1561V187H1559V183.6H1557V185.3H1555V183.1H1553V176.3H1551V181.1H1549V179.4H1547V178.2H1545V184.4H1543V187.4H1541V185.7H1539V183.5H1537V183.7H1535V188.1H1533V186.5H1531V187.1H1529V187.5H1527V185.5H1525V186.4H1523V185.8H1521V187.8H1519V184.7H1517V183H1515V180.9H1513V181.7H1511V184.5H1509V180.2H1507V177H1505V180.6H1503V185.3H1501V184.3H1499V186.1H1497V184.1H1495V190.7H1493V194H1491V194.2H1489V188.8H1487V188.5H1485V189.7H1483V191.5H1481V189.2H1479V193.5H1477V190.7H1475V189.6H1473V191.1H1471V193H1469V191H1467V186.4H1465V187.5H1463V186.1H1461V190.5H1459V187.7H1457V190.1H1455V191.5H1453V190.4H1451V183.8H1449V186H1447V182H1445V180H1443V184.1H1441V183.5H1439V182.5H1437V180.7H1435V178.8H1433V175.6H1431V174.5H1429V171.5H1427V172.4H1425V179.2H1423V179.7H1421V184.7H1419V177.5H1417V182.6H1415V181.9H1413V181H1411V183.4H1409V179.1H1407V184.6H1405V181.4H1403V181.5H1401V177.5H1399V184H1397V180.6H1395V176.3H1393V179.4H1391V175H1389V179H1387V180.6H1385V174.6H1383V180.2H1381V180.5H1379V182.8H1377V183.8H1375V183.5H1373V191.1H1371V190.9H1369V185H1367V185.9H1365V189.6H1363V188.1H1361V186.7H1359V189.9H1357V188.6H1355V185.5H1353V185.2H1351V185.9H1349V188.1H1347V187.9H1345V183.5H1343V186.2H1341V184.8H1339V183.4H1337V182.1H1335V184.1H1333V185.2H1331V182.7H1329V187.4H1327V185.6H1325V185.8H1323V186.1H1321V184.3H1319V178.9H1317V183.9H1315V181.6H1313V176.4H1311V179.9H1309V176.7H1307V174.1H1305V175.4H1303V177.4H1301V183H1299V183.5H1297V178.7H1295V184.3H1293V179.4H1291V183.4H1289V181H1287V184.6H1285V180.4H1283V184H1281V182.1H1279V180H1277V179.8H1275V178.1H1273V179.4H1271V184.5H1269V182.8H1267V182H1265V176H1263V178.5H1261V175.3H1259V175.2H1257V180.3H1255V179.6H1253V178.3H1251V185.6H1249V190.5H1247V188.8H1245V189.5H1243V184.8H1241V188.6H1239V189.1H1237V183.6H1235V190H1233V190.1H1231V186.4H1229V189.1H1227V187.5H1225V185.5H1223V183.5H1221V188.8H1219V188.2H1217V186.4H1215V190.1H1213V186.5H1211V189.4H1209V185.7H1207V184.2H1205V184.1H1203V185.2H1201V188.2H1199V187.1H1197V186.2H1195V185.2H1193V185.4H1191V181H1189V182.7H1187V179.3H1185V179.1H1183V179H1181V173.6H1179V174.3H1177V174.2H1175V175.4H1173V176.5H1171V177.7H1169V183.5H1167V184.8H1165V180.2H1163V183.7H1161V181.6H1159V181.9H1157V179.3H1155V186.6H1153V182.4H1151V180.1H1149V184.6H1147V184.1H1145V185.3H1143V179.7H1141V178.9H1139V181.5H1137V181.5H1135V184.6H1133V184.5H1131V182H1129V181.7H1127V179.1H1125V182.4H1123V177.5H1121V181.1H1119V177.4H1117V175.6H1115V182.7H1113V183H1111V180.7H1109V188.6H1107V185.9H1105V189.9H1103V192.4H1101V189.8H1099V191.7H1097V186.6H1095V184H1093V188.5H1091V188.4H1089V188.5H1087V185.5H1085V187.5H1083V184.2H1081V188.2H1079V190.1H1077V190.6H1075V184.7H1073V189.8H1071V185.9H1069V190.1H1067V184.7H1065V185.4H1063V183.6H1061V185.3H1059V188.8H1057V187.5H1055V188H1053V189.7H1051V187.5H1049V185.7H1047V190.2H1045V184.3H1043V181.3H1041V184.8H1039V176.2H1037V177.2H1035V181H1033V180.6H1031V183.5H1029V187.7H1027V186.1H1025V187.6H1023V184.5H1021V182.1H1019V181.2H1017V182H1015V181.3H1013V180.3H1011V183.8H1009V181.8H1007V186.2H1005V179.3H1003V185H1001V183H999V182.6H997V180.2H995V180.3H993V187.6H991V192.4H989V189.9H987V191.5H985V193.4H983V188.3H981V191.3H979V189.2H977V187H975V192.8H973V189.4H971V188.8H969V185.9H967V190.9H965V186.5H963V190.4H961V191.4H959V191.1H957V187.5H955V188.6H953V188.7H951V189.6H949V184.7H947V187.5H945V180.6H943V184.4H941V183.3H939V179.9H937V178.7H935V175.5H933V173.5H931V176.8H929V175.9H927V181H925V178.5H923V179.7H921V179.8H919V180.2H917V179.3H915V180.7H913V182.3H911V178.5H909V182.8H907V181.7H905V183.9H903V180.4H901V184.2H899V184.5H897V178.9H895V183.3H893V178.9H891V176.2H889V174.5H887V178.2H885V182.7H883V176.8H881V184.6H879V181.9H877V185.1H875V192H873V189.6H871V188.9H869V189.4H867V184H865V188.7H863V184.9H861V184H859V183.9H857V185.5H855V188.1H853V188.1H851V188.7H849V185.2H847V190.1H845V189.1H843V184.6H841V185.3H839V186.2H837V189.8H835V189.3H833V186.4H831V184.9H829V187.9H827V185H825V182.5H823V184.2H821V180.1H819V178.2H817V182.2H815V175.1H813V177.3H811V176.8H809V176.2H807V182H805V181.6H803V181.6H801V184.6H799V186.6H797V179.9H795V184.9H793V180.8H791V181.9H789V181.1H787V183.5H785V180H783V185.1H781V180.1H779V177.8H777V179.2H775V180H773V180.2H771V179.6H769V178.3H767V181.3H765V178.4H763V179.3H761V178.9H759V183.4H757V188H755V186.2H753V189.6H751V191.5H749V184H747V185.8H745V188.6H743V190.4H741V189.6H739V189.2H737V189.2H735V186.3H733V188.5H731V187.2H729V183.8H727V186.4H725V189.8H723V189.8H721V190.7H719V186.2H717V184.2H715V182.4H713V183.4H711V186.4H709V188.5H707V186.2H705V187.4H703V184.5H701V180.1H699V175.6H697V176H695V171.7H693V175.6H691V175.4H689V177.1H687V183.5H685V181.7H683V186.8H681V184.4H679V181.7H677V181.2H675V181.6H673V179.9H671V180.3H669V180.7H667V184.4H665V178.6H663V181.4H661V181H659V180.3H657V178.2H655V180.4H653V182.1H651V177.2H649V181.4H647V177.8H645V178.9H643V181.2H641V185.2H639V186.7H637V192.9H635V186.5H633V186.3H631V190.6H629V187.5H627V187.6H625V191H623V190.3H621V187.8H619V187.8H617V184.1H615V186.3H613V191.4H611V188.4H609V185.3H607V184.9H605V189.3H603V189.4H601V184.3H599V189.4H597V188.3H595V183.4H593V182.7H591V181.5H589V181.2H587V181.6H585V183.6H583V179.7H581V179.3H579V176.4H577V176.7H575V175.7H573V176.6H571V175.5H569V175.1H567V182H565V178.1H563V177.2H561V183.2H559V181H557V178.2H555V183.5H553V182.2H551V176.7H549V179.8H547V178.4H545V179.3H543V180.4H541V175.8H539V178.3H537V178.1H535V177.1H533V173.2H531V178.5H529V174H527V178.5H525V175.2H523V179.3H521V184.5H519V188.1H517V184.1H515V183.3H513V183.2H511V185.4H509V188.3H507V186.7H505V183.1H503V182.9H501V185.4H499V184.9H497V188.5H495V182.4H493V186.5H491V184.8H489V181.2H487V187.2H485V183.8H483V183.1H481V183.5H479V180.9H477V181.1H475V187.5H473V185.3H471V188.9H469V181.4H467V180.3H465V183.1H463V179.8H461V177.5H459V179.1H457V173.7H455V179H453V176.2H451V175.8H449V177.8H447V181.2H445V181.4H443V185.4H441V180.3H439V183.1H437V186.4H435V184H433V180.7H431V179.3H429V185.4H427V178.1H425V183.2H423V180.6H421V183.7H419V181.5H417V182.1H415V178H413V176.3H411V181.1H409V178H407V176H405V177H403V184.2H401V185.6H399V187.4H397V186.7H395V191.4H393V189.7H391V189.5H389V186.6H387V185.9H385V187.6H383V191H381V190.6H379V187.7H377V185.4H375V185.4H373V183.3H371V190.4H369V186.4H367V186H365V184.1H363V187.5H361V183.7H359V187.8H357V184H355V184.2H353V185.3H351V190.2H349V188H347V185.6H345V187.9H343V181.3H341V185.1H339V182.6H337V176.6H335V172.4H333V176.8H331V175.9H329V180H327V180.9H325V186.5H323V179.7H321V182.3H319V182.9H317V186.8H315V185.8H313V182.3H311V184.9H309V184.8H307V186.3H305V183.1H303V179.4H301V184.6H299V180.2H297V183.8H295V177.9H293V182.9H291V179.1H289V175.4H287V180.1H285V181.5H283V183.1H281V183.3H279V181.9H277V188.8H275V192.8H273V187.1H271V191.3H269V189.7H267V184.4H265V190.3H263V191H261V190.9H259V190.3H257V187.4H255V185.5H253V190.9H251V190.7H249V184.1H247V190.9H245V185.4H243V190.9H241V183.7H239V184.2H237V191.3H235V183.5H233V184.1H231V182.5H229V185.1H227V183.7H225V178.3H223V176.3H221V180H219V179.2H217V178.5H215V178.6H213V180.2H211V177.2H209V172.9H207V174.1H205V168.6H203V164.3H201V164.9H201Z" fill="#ffff00"/><path d="M204 89V115.6M228.4 97.9V130.2M243 105.1V117.7M251.2 103.1V109.1M257.5 107.7V139.2M267.1 107.3V135.4M272.9 103.4V112.7M284.2 100.5V133.9M294.4 94.9V127.6M302.7 96.1V107.6M313.3 97.9V130.8M323.7 102V117.9M329.7 98.3V105.8M336.5 90.4V96.2M345.6 97.9V112.3M355.5 100.2V114.8M363.4 101.3V108.6M374.2 103.4V130.2M384.3 102.8V130.6M391.5 101.6V107.6M396.8 105V137.5M402.9 98.5V130.3M413.6 96.3V111.9M421.7 100.5V109.3M431.2 103.2V133.1M442 103.9V126.8M452.5 91V122.7M460.8 97.2V111.8M466.8 97.6V107.5M481.9 102.3V135.8M490.1 99.2V111.6M498.7 103.7V122.2M506.2 106.2V137.6M511.4 105.7V134.9M517.2 105V137.4M526 95V103.7M533.6 91.5V120.9M540.4 96.5V130.3M558.2 98.6V124.8M566.1 100.6V117.6M572 93.1V126.6M582.7 96.1V115.9M589.8 101.1V114.4M606.6 103V130.5M615.8 107.4V134.4M623 103.2V116.8M630.9 105.3V130.4M646.5 97.6V103.6M654.8 97.9V122.4M662.6 96.6V120.5M672.4 98V121.8M681.8 103.9V119.4M711.7 101V121.6M717.7 102.9V135M725.6 104.8V130.7M735 104V131.6M743.5 108.6V126.1M752.2 102V125.6M761.5 100.2V110.4M769.2 99.4V111.2M778.3 99.4V106.3M786.1 96.5V103.7M791.9 99.5V110.3M798.1 96.7V115.5M805.4 102.4V124.6M816.8 95.6V109.1M824.3 103.2V132.3M831.5 103.8V126.7M837.1 100.9V116.2M855.5 102.7V131.2M864.3 105.1V114.8M872.9 106.3V138.9M883.7 95.1V110.6M894.1 100.1V108.8M902.5 97.7V107.3M918.5 98.3V110.4M943 100.3V113.3M953.9 106.7V124.1M968.8 106.6V125.7M974.5 103V121.2M981.2 106.7V135.7M986.3 109V122.4M996.9 102.4V115M1003.5 96.4V129.9M1010.3 102.6V121.7M1019.2 102.4V129M1024.9 104.4V118.6M1033.1 95.1V109.2M1041.3 97.1V113M1050.7 101.5V108.2M1057.2 105.3V136.8M1067.6 105.9V112M1077.2 104V125.9M1086.5 105.5V124.7M1097 103.6V120.3M1107.1 103.5V117.5M1117.1 95.1V124.3M1126.2 98.8V112.6M1141.8 101.3V122.4M1149.7 96.8V106.8M1158.3 102.9V110.5M1164.6 98.3V126.2M1173.6 96.5V122.5M1193.7 99.3V128.7M1200 103.7V136.2M1209.3 105.3V119.2M1219.8 106.1V128.9M1227.3 101.3V124.5M1232.5 102.4V118.7M1238 104.2V126M1253.2 99.1V113.6M1261.8 97.7V129.8M1269.1 96.7V122M1275 101.6V121.5M1285.5 100.9V124M1292 97.5V110.4M1301.5 96V105.5M1307.9 95.8V122.2M1314 97.4V121.5M1319.5 97V105.3M1325.3 99.8V112.2M1335.5 100.2V115M1345.3 101V127.1M1350.6 103.3V135.8M1359.7 106.2V115.1M1370.6 104.3V133M1376.4 103.3V118.9M1382.8 92.8V115.8M1389.9 95.9V105.5M1399.9 95.8V124.1M1415.6 100.9V122.7M1425 98.8V107.2M1430.2 91.1V97.9M1440.6 96.8V123.9M1445.6 101.6V132.3M1454.3 107.1V125.9M1459.9 103.4V113.6M1467.1 105.2V135.7M1473.1 104.1V117.6M1479 109.3V121.6M1486.9 108V139.7M1503.3 102.5V121.4M1513.9 98.9V123.4M1520.7 104.7V130.9M1526.7 102V108.4M1533 105.8V122.8M1543.9 102.4V116.9M1551.7 96.7V122.9M1561 102.1V114.6M1578.9 105.5V138.7M1583.9 107.9V135.5M1591.4 104.8V125.9M1602.3 104.5V120.1M1607.9 105.9V136.9M1621.2 101V108.1M1628.6 98.1V111M1636 101.1V108.3M1647.3 100.3V117.3M1655.5 105.1V119.7M1661.1 98.6V130.2M1676 104.2V125.1M1683.9 105.9V122.1M1692.7 109.5V140.8M1699.5 110.5V139.4M207 175.1V161.7M212.5 178.2V152.1M219.4 180.2V172.4M225.9 179.3V162.9M234.3 185.1V177.8M243.5 191.9V181.2M250.3 185.1V176.9M257.8 188.4V163.9M275 193.8V173.7M282.7 184.3V162.2M293.4 183.9V160.7M300 181.2V165.9M305.8 184.1V174.2M312.4 185.9V173M317.8 187.8V168.2M322.9 183.3V174.3M340.8 183.6V172.1M348.3 186.6V172.6M353.4 186.3V159.9M362.8 184.7V165.8M368.8 187V170.2M379.4 188.7V180.1M394.1 190.7V174M420.5 182.5V156.4M428 179.1V149M433.2 181.7V164M443.5 186.4V175.3M450.1 178.8V159M457.3 174.7V163M464.4 180.8V150.5M474.4 186.3V165.2M481.8 184.5V158M489.8 182.2V172.3M495.4 183.4V155.2M501.6 186.4V172.6M519.4 189.1V174M524.5 180.3V159.9M530.6 175V161.3M535.7 178.1V162.8M543.6 181.4V165.7M554.5 183.2V154.4M563.6 178.2V159.1M573.4 177.6V157.1M582.5 180.3V167.5M588 182.6V168M596.5 184.4V160.8M610 186.3V178.8M619.5 188.8V159.1M629.9 188.5V161.9M639.3 187.7V176.8M662.1 182V176.3M669.4 181.7V159.7M688.5 184.5V176.1M697.6 177V153.4M711.2 187.4V175M725.9 190.8V166M732.2 188.2V168.3M751.6 192.5V176.1M766.6 179.4V158.5M777.4 180.2V173.8M783.1 186.1V165.3M789.2 182.1V161.5M798.1 180.9V157M803.4 182.6V156.1M814.2 178.3V151.3M829.4 188.9V162.2M837.3 190.8V180.3M843.2 185.6V176.1M851.9 189.7V165M861.3 185V159.2M881.3 185.6V155.8M887 183.7V176.4M893.2 179.9V162.8M902.3 185.2V177.4M909.7 183.8V168.7M915.4 181.7V166.7M924.5 180.7V151M935.2 176.5V151.9M944.5 185.4V176.8M952.4 190.6V166.5M962.9 192.4V179.5M970.9 186.9V161.5M979.3 190.2V176.1M989.4 190.9V183.9M997 181.3V159M1002.4 184V175.9M1018.5 183V153.9M1024.1 185.5V159.5M1029.1 188.7V174M1034.2 181.6V164.4M1041.5 185.8V178.8M1055.5 189V181.2M1071.3 186.9V179.9M1078.6 191.6V175.1M1096 185V178.4M1101.2 190.8V174.8M1111.4 181.7V153.1M1134.1 185.5V169.2M1151.3 181.1V168.6M1159.1 182.9V160.5M1164.8 184.7V167.6M1170.3 184.5V156.4M1180.6 175.3V169.2M1199.1 188.1V176.5M1214.8 187.5V171.1M1221.4 189.8V174.8M1231.1 187.4V168.8M1241.9 189.6V181.6M1247.6 189.8V174.8M1254.8 179.3V159.1M1265.6 177V157.1M1272.2 185.5V161.5M1278 180.8V157.4M1283 185V168.9M1291.1 184.4V158.9M1296.4 185.3V178.7M1303.7 178.4V172.1M1310.5 177.7V155.7M1321.1 185.3V166.3M1347.8 188.9V159.9M1353.3 186.2V162.1M1361.5 187.7V158.9M1368.3 186.9V160.4M1374.1 192.1V174.1M1382.5 181.5V164.5M1387.9 181.6V167.4M1400.3 185V159.7M1409.7 180.1V153.6M1418.5 183.6V162.1M1425 180.7V153.1M1438.7 181.7V174.7M1448.1 183V177.1M1453.4 191.4V173.4M1463.6 187.1V166.7M1469.3 192V171.1M1478 191.7V162.3M1483.6 192.5V169.7M1489.2 189.8V172.6M1507.4 178V156.3M1517.5 184V159.4M1524 186.8V181.1M1533.6 187.5V159.2M1541.4 186.7V175.6M1554.2 177.3V162.8M1559.7 184.6V163.4M1568.6 190.5V181.4M1576.5 191.9V175.1M1590.8 189.6V171.6M1607.4 190.6V174.4M1617.1 183.6V170.6M1622.7 184.4V169.8M1633.1 181.5V160M1647.6 182.3V168.2M1653.2 187.7V160.9M1661.7 180.6V150.6M1669 180.5V156.7M1675.6 183.8V169.9M1681.2 190V166.4M1694 187V176.8" stroke="#000" stroke-width="1.9"/><path d="M232 132.8V46.9M355 132.8V7.8M477 132.8V10.2M595 132.8V24.2M715 132.8V29.7M833 132.8V14.1M956 132.8V2.3M1054 132.8V25M1203.5 132.8V43.8M1330 132.8V45.3M1452.5 132.8V7.8M1571 132.8V33.6M1687 132.8V18" stroke="#ffff00" stroke-width="2.6" fill="none"/><path d="M234.2 105.5V179.7M357.2 105.5V179.7M479.2 105.5V179.7M597.2 105.5V179.7M717.2 105.5V179.7M835.2 105.5V179.7M958.2 105.5V179.7M1056.2 105.5V179.7M1205.7 105.5V179.7M1332.2 105.5V179.7M1454.7 105.5V179.7M1573.2 105.5V179.7M1689.2 105.5V179.7" stroke="#000" stroke-width="2.2" fill="none"/><path d="M228.5 164V192.2M236 164V188.3M351.5 169V196.1M359 169V192.2M473.5 168.4V198.5M481 168.4V194.6M591.5 166.2V203.9M599 166.2V200M711.5 168.8V198.5M719 168.8V194.6M829.5 168.5V196.9M837 168.5V193M952.5 168.3V196.1M960 168.3V192.2M1050.5 169.2V198.5M1058 169.2V194.6M1200 169.6V198.5M1207.5 169.6V194.6M1326.5 168.2V200.8M1334 168.2V196.9M1449 167.1V196.1M1456.5 167.1V192.2M1567.5 170.8V195.3M1575 170.8V191.4M1683.5 169.5V196.1M1691 169.5V192.2" stroke="#ffff00" stroke-width="1.5" fill="none"/></g>
<path d="M201 733.6h17M1871 733.6h-17M201 772.7h17M1871 772.7h-17M201 811.8h17M1871 811.8h-17M201 850.9h17M1871 850.9h-17M201 890h17M1871 890h-17M409.8 696v15M409.8 930v-15M618.5 696v15M618.5 930v-15M827.2 696v15M827.2 930v-15M1036 696v15M1036 930v-15M1244.8 696v15M1244.8 930v-15M1453.5 696v15M1453.5 930v-15M1662.2 696v15M1662.2 930v-15" stroke="#fff" stroke-width="2" fill="none"/>
<rect x="201" y="696" width="1670" height="234" fill="none" stroke="#fff" stroke-width="2"/>
<text transform="translate(194 701.1) scale(0.86 1)" text-anchor="end" class="ax">1.5</text>
<text transform="translate(194 740.2) scale(0.86 1)" text-anchor="end" class="ax">1</text>
<text transform="translate(194 779.3) scale(0.86 1)" text-anchor="end" class="ax">0.5</text>
<text transform="translate(194 818.4) scale(0.86 1)" text-anchor="end" class="ax">0</text>
<text transform="translate(194 857.5) scale(0.86 1)" text-anchor="end" class="ax">-0.5</text>
<text transform="translate(194 896.6) scale(0.86 1)" text-anchor="end" class="ax">-1</text>
<text transform="translate(194 935.7) scale(0.86 1)" text-anchor="end" class="ax">-1.5</text>
<text x="930.8" y="682.9" class="ax" textLength="207.5" lengthAdjust="spacingAndGlyphs">Noisy Filtered ECG Signal</text>
<rect x="201" y="985" width="1670" height="235" fill="#000"/>
<path d="M201 1043H1871M201 1101.5H1871M201 1160H1871M409.8 985V1220M618.5 985V1220M827.2 985V1220M1036 985V1220M1244.8 985V1220M1453.5 985V1220M1662.2 985V1220" stroke="#fff" stroke-width="2" stroke-dasharray="2 6.7" fill="none"/>
<path d="M201 131.7L202 132.1L203 135.9L204 134.7L205 134.8L206 137.8L207 137.9L208 139.6L209 144L210 141.6L211 143.8L212 146.5L213 149.2L214 146.1L215 149.4L216 148.5L217 148L218 149.3L219 148.6L220 151.7L221 150L222 152.2L223 150L224 150.7L225 155.5L226 155.8L227 160.5L228 165.7L228.8 175.1L229.7 168L229.7 85.8L231 85.8L231 16.5L232.8 16.5L233.2 144.5L233.4 168L234.6 164.5L234.8 160.2L236.5 167.2L237 166.8L238 166.4L239 162.6L240 165.3L241 164.4L242 166.1L243 165.1L244 165.7L245 166L246 164.8L247 164.8L248 163.2L249 164.4L250 163.2L251 163.6L252 162.9L253 164.6L254 167.3L255 163.7L256 163.2L257 163.5L258 165.3L259 164.6L260 167.2L261 164.1L262 165.4L263 167L264 168.1L265 164.1L266 163.4L267 168.1L268 164.5L269 166.6L270 168.6L271 168.5L272 166.7L273 166.8L274 171.7L275 167.7L276 168.4L277 162.6L278 162.5L279 157.9L280 155.6L281 156.3L282 151.9L283 154.6L284 155.5L285 152.5L286 155.1L287 154L288 152.6L289 151.6L290 154.5L291 155.7L292 151.9L293 155.3L294 152.6L295 153.4L296 156.6L297 156.8L298 156.7L299 156.1L300 156.5L301 156.8L302 156.6L303 155L304 157.4L305 157.9L306 156.5L307 159.1L308 158.9L309 155.5L310 158L311 158L312 160.9L313 158.9L314 158.1L315 161.2L316 158.2L317 158.2L318 161.3L319 158.2L320 158.9L321 157.6L322 159.2L323 157.2L324 156.8L325 160.4L326 159L327 153.5L328 149.8L329 151.3L330 149.3L331 148L332 148.9L333 148L334 147.7L335 148.7L336 148.9L337 151.9L338 152.9L339 152L340 157.1L341 155.5L342 155.8L343 159.1L344 160.5L345 158.5L346 162.3L347 163.6L348 163.2L349 165.3L350 170L351 171.5L351.8 181L352.7 173.9L352.7 85.8L354 85.8L354 5.9L355.8 5.9L356.2 150.4L356.4 173.9L357.6 170.4L357.8 157.7L359.5 164.7L360 161.4L361 164.5L362 163.4L363 163.3L364 160.8L365 162.9L366 160.8L367 164.3L368 163.5L369 161.9L370 160.8L371 163L372 164.2L373 164.8L374 162.7L375 164.5L376 161.4L377 161.3L378 164.7L379 164.2L380 161.5L381 162.4L382 161.6L383 164L384 165.2L385 164.4L386 161.8L387 164.6L388 164.2L389 163.9L390 163.9L391 164L392 161.6L393 166.2L394 167.7L395 163.4L396 164.4L397 164.5L398 165.3L399 160.3L400 158.1L401 159.9L402 155.4L403 153.1L404 152.2L405 151.1L406 152L407 151.5L408 151.8L409 152.3L410 149.3L411 150.6L412 148.3L413 152.8L414 148.9L415 150.6L416 149.9L417 150.6L418 151.2L419 153.4L420 156.7L421 153L422 156.1L423 155.6L424 153.8L425 154.6L426 155.3L427 152.7L428 154.5L429 156L430 156.6L431 153.6L432 155.7L433 154.2L434 156.5L435 157.5L436 155.8L437 154.5L438 157.9L439 154.8L440 154.3L441 154.8L442 154.6L443 158.6L444 155.3L445 153.9L446 157.9L447 156.6L448 155.9L449 152.3L450 150.6L451 148.1L452 145.3L453 148.7L454 147.8L455 146.8L456 146.3L457 147.5L458 144.2L459 146.3L460 151.7L461 150.7L462 152.9L463 154.1L464 155.1L465 154.8L466 156L467 158.2L468 160L469 160.3L470 162.3L471 162.7L472 167.4L473 175.1L473.8 184.5L474.7 177.4L474.7 85.8L476 85.8L476 2.4L477.8 2.4L478.2 153.9L478.4 177.4L479.6 173.9L479.8 159.1L481.5 166.2L482 163.5L483 162.7L484 164.5L485 166.1L486 165.6L487 164.7L488 163.5L489 162.6L490 164.7L491 162.6L492 163.6L493 164.6L494 164.9L495 164.3L496 163.3L497 164.8L498 163.4L499 164.7L500 165.8L501 164.4L502 163.6L503 166.8L504 165L505 165.1L506 162.8L507 162.5L508 165.5L509 162.8L510 163.4L511 166.2L512 165.2L513 167.3L514 164.4L515 165.9L516 165.4L517 166.5L518 166.9L519 164.2L520 162.7L521 162.9L522 158.5L523 159.6L524 157.1L525 151.9L526 154.8L527 154.3L528 153.9L529 149.6L530 152.9L531 153.4L532 149.5L533 153.8L534 150.7L535 152.1L536 151.8L537 151.8L538 154.3L539 153.7L540 158L541 154.4L542 155.8L543 154.9L544 158.1L545 154.9L546 154.1L547 158.7L548 157.5L549 156.4L550 155.1L551 158.3L552 158.7L553 158.5L554 156.7L555 156.1L556 158.1L557 158.3L558 158.3L559 158.6L560 158.3L561 159.9L562 157.5L563 154.9L564 157.7L565 155.8L566 158.6L567 155L568 152.4L569 150.5L570 149L571 148.1L572 146.7L573 144.7L574 148L575 147.8L576 145.9L577 146.5L578 150.1L579 151.8L580 151.6L581 155.6L582 156.5L583 158.1L584 157.1L585 159.5L586 160.9L587 159.6L588 159.2L589 163.9L590 168.6L591 183.3L591.8 192.7L592.7 185.7L592.7 85.8L594 85.8L594 14.1L595.8 14.1L596.2 162.2L596.4 185.7L597.6 182.1L597.8 157.2L599.5 164.2L600 162.9L601 160.9L602 162.4L603 160.2L604 161.6L605 163.3L606 163.6L607 164.6L608 162.3L609 162.8L610 164L611 163L612 163.3L613 161L614 164.3L615 159.9L616 162.6L617 162L618 162.7L619 160.9L620 161L621 162.4L622 162.8L623 161.6L624 161L625 163.3L626 161.7L627 160.5L628 163.1L629 164.4L630 164.4L631 161.9L632 162.8L633 162L634 163.2L635 167L636 167.9L637 166.4L638 164.4L639 159.4L640 156.6L641 154.5L642 156L643 151L644 152.1L645 150.9L646 149L647 152L648 151.7L649 147.6L650 150.1L651 150.1L652 149.5L653 149.6L654 153.6L655 152.5L656 152.5L657 152.8L658 154.8L659 153.3L660 151.5L661 154.5L662 153.8L663 156.1L664 155.4L665 153.5L666 156.5L667 152.6L668 152.6L669 156.9L670 152.7L671 155.7L672 153.8L673 154L674 156.5L675 154.6L676 154.9L677 154.2L678 157.1L679 154.7L680 153.5L681 154.8L682 155.3L683 157.4L684 155.2L685 155.8L686 153.7L687 152.1L688 150.4L689 150.1L690 145.7L691 145.2L692 146.9L693 142.6L694 143.2L695 146.2L696 143.5L697 149L698 149.5L699 148.8L700 150.7L701 152.1L702 152.8L703 155.1L704 156.8L705 158.5L706 160L707 157.6L708 158.4L709 162.1L710 166.8L711 175.1L711.8 184.5L712.7 177.4L712.7 85.8L714 85.8L714 20L715.8 20L716.2 153.9L716.4 177.4L717.6 173.9L717.8 157L719.5 164.1L720 161.5L721 160.5L722 162.5L723 163L724 162.5L725 160L726 164.3L727 162L728 163.3L729 160.7L730 162.9L731 163L732 162.7L733 162L734 160.8L735 163L736 160.5L737 164.4L738 163.6L739 164.5L740 164.5L741 161.1L742 161.4L743 164.2L744 164.2L745 163.1L746 161.5L747 161.1L748 161.5L749 162.3L750 164.7L751 163.8L752 165.5L753 164.5L754 164.9L755 167.5L756 167L757 161.9L758 163.4L759 157.2L760 154.8L761 152.7L762 153.7L763 151L764 149.9L765 149.4L766 147.3L767 148.5L768 150.2L769 147L770 149.3L771 149.2L772 149.2L773 153.5L774 150.1L775 151.2L776 152.6L777 153L778 153.7L779 155.2L780 153.6L781 156.3L782 154L783 153.4L784 154.5L785 154L786 152.1L787 152.6L788 156.6L789 153.3L790 154.3L791 157.4L792 155.9L793 156.7L794 157.6L795 155.3L796 153.4L797 156.7L798 153.8L799 154.6L800 157.3L801 153.4L802 154.6L803 152.7L804 153.6L805 152.7L806 152.4L807 147.7L808 144.7L809 144.1L810 145.6L811 143.4L812 144.2L813 145.6L814 147.4L815 148.7L816 149.6L817 151.2L818 150.7L819 150.9L820 153L821 154.8L822 154.7L823 157.5L824 157.6L825 157.1L826 159.9L827 161.8L828 166.5L829 172.7L829.8 182.1L830.7 175.1L830.7 85.8L832 85.8L832 11.7L833.8 11.7L834.2 151.6L834.4 175.1L835.6 171.5L835.8 161.6L837.5 168.7L838 168L839 164.3L840 165.3L841 167.1L842 167.1L843 166.3L844 166L845 168L846 169.2L847 168.1L848 165.2L849 168.6L850 167L851 168.4L852 168.3L853 168.6L854 167.4L855 168.7L856 169.4L857 169L858 168.8L859 167.1L860 169.4L861 169.6L862 167.5L863 167.7L864 166.2L865 169.6L866 167.8L867 167.9L868 169.9L869 165L870 169L871 170.3L872 169L873 171.2L874 169.5L875 171.5L876 171.7L877 169.7L878 164L879 164.2L880 159.8L881 159.7L882 155.5L883 156.9L884 156.3L885 155.9L886 152.8L887 153.5L888 154.6L889 155.7L890 152.7L891 151.7L892 154.2L893 157.8L894 158.2L895 158.5L896 158.6L897 159.8L898 160.3L899 157.4L900 156.2L901 159.9L902 156.1L903 158.7L904 157.2L905 156.7L906 156.7L907 161.5L908 160.2L909 158.7L910 157.1L911 161.7L912 160.7L913 157.9L914 161.9L915 160.5L916 160.9L917 159.3L918 158.1L919 162.1L920 159.1L921 158.9L922 158.2L923 159.5L924 157.5L925 160.2L926 159.8L927 159.5L928 154.4L929 153.7L930 152.6L931 152.2L932 148.8L933 148.8L934 147.7L935 148.7L936 149.5L937 152.6L938 151.2L939 156.1L940 155L941 154.7L942 156.3L943 160.5L944 160.9L945 158.7L946 160.7L947 160.5L948 161.4L949 164.6L950 166.7L951 171.4L952 171.5L952.8 181L953.7 173.9L953.7 85.8L955 85.8L955 4.7L956.8 4.7L957.2 150.4L957.4 173.9L958.6 170.4L958.8 162.1L960.5 169.1L961 164.7L962 165.6L963 167.7L964 167.6L965 169.2L966 167.5L967 164.7L968 169.2L969 166.8L970 169.2L971 169.4L972 166.5L973 168.7L974 169.7L975 169.2L976 166.7L977 167.1L978 170.1L979 169L980 165.3L981 169.2L982 167.4L983 168.2L984 166.4L985 167.4L986 166.9L987 169L988 171.6L989 172.5L990 173.1L991 166.3L992 167.1L993 165.2L994 158.1L995 159.8L996 154L997 157.4L998 155.1L999 156L1000 152.5L1001 153.2L1002 153.7L1003 153.8L1004 153.9L1005 157.3L1006 156.7L1007 158.2L1008 160.5L1009 156.9L1010 158.3L1011 157.3L1012 160.6L1013 159L1014 159.6L1015 158.3L1016 161.8L1017 160.6L1018 160L1019 162.3L1020 159.9L1021 159.1L1022 160.9L1023 159.9L1024 160.2L1025 162.3L1026 161.4L1027 157.8L1028 161L1029 160.3L1030 161.9L1031 159.7L1032 157.2L1033 150.4L1034 149.9L1035 148.3L1036 147L1037 148.2L1038 147.5L1039 151.3L1040 153.7L1041 152.6L1042 154.3L1043 155.6L1044 159.5L1045 159.2L1046 162.3L1047 160.5L1048 165.4L1049 170.1L1050 175.1L1050.8 184.5L1051.7 177.4L1051.7 85.8L1053 85.8L1053 12.9L1054.8 12.9L1055.2 153.9L1055.4 177.4L1056.6 173.9L1056.8 155.1L1058.5 162.1L1059 157.6L1060 161L1061 157.7L1062 161.7L1063 162.1L1064 158.9L1065 161.2L1066 160L1067 159.5L1068 162.6L1069 159L1070 161.4L1071 160.6L1072 161.1L1073 159.1L1074 159.1L1075 161.5L1076 162.5L1077 161.5L1078 161L1079 162.7L1080 162.4L1081 159.2L1082 159.6L1083 158.2L1084 158.2L1085 158.8L1086 161.4L1087 162.5L1088 161.8L1089 161L1090 160.7L1091 160.7L1092 161.7L1093 159.1L1094 162.1L1095 161.2L1096 159.1L1097 159.5L1098 162.2L1099 162.5L1100 160.2L1101 164.8L1102 164.7L1103 163.2L1104 163.6L1105 166.1L1106 166.2L1107 163.5L1108 158.7L1109 158.4L1110 154.1L1111 153.7L1112 151.2L1113 154.6L1114 152.3L1115 151.8L1116 149L1117 149.2L1118 150.5L1119 147.7L1120 149.8L1121 148.4L1122 148.5L1123 145.6L1124 148L1125 149.3L1126 150.8L1127 149.3L1128 148.7L1129 148.9L1130 148.2L1131 149.1L1132 152.5L1133 153.5L1134 150.5L1135 150.4L1136 151.9L1137 150.4L1138 151.9L1139 153.4L1140 154.1L1141 155L1142 151.8L1143 150.6L1144 150.6L1145 153L1146 152.1L1147 150.8L1148 151.5L1149 152.7L1150 153.7L1151 153.3L1152 155.2L1153 155.2L1154 152.7L1155 151.2L1156 153.6L1157 154.4L1158 154.8L1159 154.3L1160 152.3L1161 154L1162 151.3L1163 155.3L1164 154.3L1165 153.1L1166 153.6L1167 151.2L1168 150.5L1169 148.2L1170 148L1171 149.1L1172 144.5L1173 144L1174 143.8L1175 144.4L1176 141.7L1177 140.2L1178 143.8L1179 142L1180 144.7L1181 145.1L1182 144.3L1183 145.1L1184 147.7L1185 151L1186 148.2L1187 153L1188 153L1189 151.6L1190 155L1191 156L1192 153.3L1193 154.1L1194 158.1L1195 158.5L1196 159.9L1197 160.8L1197.5 161.2L1198.5 165.9L1199.5 175.1L1200.3 184.5L1201.2 177.4L1201.2 85.8L1202.5 85.8L1202.5 11.7L1204.3 11.7L1204.7 153.9L1204.9 177.4L1206.1 173.9L1206.3 160L1208 167.1L1208 165.9L1209 162.3L1210 166.9L1211 166.2L1212 166.4L1213 167L1214 164.8L1215 163.7L1216 163.2L1217 164.3L1218 163.4L1219 167.6L1220 166.3L1221 162.8L1222 167.4L1223 166.4L1224 165.4L1225 166.5L1226 165.1L1227 167.7L1228 166.8L1229 163.1L1230 167.3L1231 163.4L1232 167.2L1233 163L1234 164.7L1235 164.9L1236 167.5L1237 168L1238 164.4L1239 167.5L1240 167.4L1241 164.2L1242 164.3L1243 169.2L1244 165.1L1245 167.9L1246 169.3L1247 171.4L1248 168.1L1249 162.8L1250 164.2L1251 163.1L1252 161.2L1253 159.6L1254 156.7L1255 152L1256 155.6L1257 154.7L1258 150.5L1259 150L1260 149.8L1261 153.3L1262 152.7L1263 150.2L1264 153.1L1265 152.5L1266 155L1267 157.1L1268 155.9L1269 154.4L1270 154.7L1271 156.2L1272 156.8L1273 156.6L1274 157.2L1275 156.8L1276 155.4L1277 158.7L1278 156.8L1279 155.2L1280 155.7L1281 159.3L1282 155.3L1283 156.1L1284 159.7L1285 159.3L1286 159.7L1287 160.6L1288 155.9L1289 159L1290 156.7L1291 160.7L1292 161.3L1293 156.8L1294 157L1295 155.8L1296 157.3L1297 157.9L1298 156.5L1299 159.9L1300 156.7L1301 155L1302 154.4L1303 149.9L1304 150L1305 148.5L1306 148.6L1307 148.3L1308 147.5L1309 146.7L1310 146.1L1311 147.7L1312 149.5L1313 150.9L1314 154.9L1315 152.5L1316 157.3L1317 159.2L1318 158.3L1319 158L1320 161L1321 160.3L1322 163.1L1323 160.5L1324 165.3L1325 170L1326 178.6L1326.8 188L1327.7 181L1327.7 85.8L1329 85.8L1329 11.7L1330.8 11.7L1331.2 157.5L1331.4 181L1332.6 177.4L1332.8 160.2L1334.5 167.3L1335 165.2L1336 165.1L1337 164.8L1338 163.1L1339 162.6L1340 165L1341 165.4L1342 164.6L1343 167.4L1344 165.6L1345 163.5L1346 163.9L1347 167.6L1348 163.6L1349 166L1350 163L1351 166.2L1352 167L1353 165.3L1354 163.6L1355 166L1356 163.8L1357 164.6L1358 166.5L1359 166.8L1360 165.8L1361 166.4L1362 166.6L1363 165.2L1364 164.1L1365 165.6L1366 167.9L1367 167.7L1368 167.6L1369 166.9L1370 170L1371 171L1372 170.4L1373 169L1374 168.1L1375 163.1L1376 159.2L1377 159.4L1378 156.5L1379 154.3L1380 152.4L1381 151.4L1382 153.6L1383 152L1384 154.6L1385 150.4L1386 152.7L1387 152.5L1388 150.9L1389 154.6L1390 155.6L1391 152.9L1392 154.6L1393 157.8L1394 158.6L1395 157.5L1396 159.4L1397 155.2L1398 158.7L1399 158.3L1400 157.8L1401 157.3L1402 157.8L1403 156.9L1404 156.9L1405 158.2L1406 160L1407 155.6L1408 157.2L1409 160.4L1410 158.7L1411 157.2L1412 156.1L1413 161L1414 161.4L1415 159.1L1416 159.4L1417 156.8L1418 157L1419 159.4L1420 158.8L1421 157.8L1422 156.1L1423 159.4L1424 156.4L1425 155.7L1426 150.7L1427 152L1428 146.7L1429 148.2L1430 147.3L1431 149.3L1432 148.6L1433 148.8L1434 148.2L1435 151.3L1436 153.9L1437 151.5L1438 154.3L1439 156.2L1440 159.1L1441 159.6L1442 157.5L1443 162.4L1444 161.3L1445 161.8L1446 164.1L1446.5 165.3L1447.5 170L1448.5 171.5L1449.3 181L1450.2 173.9L1450.2 85.8L1451.5 85.8L1451.5 4.7L1453.3 4.7L1453.7 150.4L1453.9 173.9L1455.1 170.4L1455.3 154L1457 161L1457 157.2L1458 156.6L1459 156.9L1460 157.5L1461 160.3L1462 161.1L1463 159.2L1464 159.9L1465 160.5L1466 157.1L1467 160.5L1468 157.4L1469 156.8L1470 161.1L1471 157L1472 159.8L1473 160.8L1474 160.9L1475 161.7L1476 159.4L1477 160L1478 157.6L1479 157.8L1480 161.8L1481 160.1L1482 160.2L1483 161.3L1484 161L1485 160.9L1486 158.8L1487 160.6L1488 161.8L1489 161.9L1490 161.4L1491 161.5L1492 163.8L1493 162.1L1494 163.4L1495 158.6L1496 156.6L1497 156.8L1498 151.9L1499 151.9L1500 149.3L1501 147.2L1502 146.6L1503 147.2L1504 148.9L1505 144.9L1506 144.2L1507 145.8L1508 145.9L1509 148.1L1510 145.4L1511 147L1512 150L1513 147.5L1514 147.2L1515 151.1L1516 148L1517 150.7L1518 152.4L1519 149.7L1520 151.8L1521 149.9L1522 150.8L1523 153.4L1524 151.3L1525 149.8L1526 151.8L1527 151.6L1528 150L1529 152.3L1530 152.2L1531 151.8L1532 150.7L1533 154L1534 154.7L1535 151.4L1536 152.4L1537 153.5L1538 150.3L1539 150.2L1540 151.8L1541 149.3L1542 150L1543 149.3L1544 149.4L1545 148.5L1546 142.7L1547 141.6L1548 143L1549 141.7L1550 140.6L1551 142L1552 141.1L1553 143.3L1554 145.7L1555 148.5L1556 147.4L1557 149.9L1558 149L1559 153.1L1560 153L1561 155L1562 154.9L1563 155L1564 158.5L1565 158.8L1566 163.5L1567 170.4L1567.8 179.8L1568.7 172.7L1568.7 85.8L1570 85.8L1570 14.1L1571.8 14.1L1572.2 149.2L1572.4 172.7L1573.6 169.2L1573.8 158.3L1575.5 165.3L1576 165.3L1577 163.1L1578 164.6L1579 163.1L1580 164.9L1581 165.3L1582 163L1583 161.1L1584 161.4L1585 163.3L1586 163.9L1587 165.7L1588 164.6L1589 164.5L1590 161.3L1591 165.6L1592 161.3L1593 163.8L1594 164L1595 165L1596 161.4L1597 165.4L1598 163.5L1599 163.8L1600 165.5L1601 165.4L1602 161.5L1603 162.5L1604 162.9L1605 162L1606 166.4L1607 163.9L1608 164.3L1609 167.7L1610 167.2L1611 165.2L1612 166.2L1613 161.5L1614 162.2L1615 157.7L1616 157.9L1617 154.7L1618 153.5L1619 149.8L1620 150.1L1621 151.1L1622 149.8L1623 150.8L1624 148.6L1625 151.7L1626 150.8L1627 151.1L1628 152.7L1629 155.1L1630 155L1631 153.2L1632 156L1633 153.5L1634 154.9L1635 152.7L1636 153.4L1637 154.1L1638 156.1L1639 157.9L1640 155.4L1641 154.5L1642 153.7L1643 157.5L1644 157.9L1645 153.8L1646 155.1L1647 156.6L1648 155.4L1649 158.5L1650 156.6L1651 156.1L1652 156.5L1653 158.7L1654 158.7L1655 156L1656 154.5L1657 158.2L1658 158.7L1659 158.1L1660 152.5L1661 152.1L1662 149.4L1663 144.9L1664 146.3L1665 147.4L1666 144.5L1667 147.5L1668 147L1669 146.4L1670 150.6L1671 152.8L1672 151.5L1673 153.8L1674 151.7L1675 157.5L1676 155L1677 158.1L1678 157L1679 159.9L1680 159.7L1681 162.9L1682 167.6L1683 171.5L1683.8 181L1684.7 173.9L1684.7 85.8L1686 85.8L1686 17.6L1687.8 17.6L1688.2 150.4L1688.4 173.9L1689.6 170.4L1689.8 155.3L1691.5 162.3L1692 160.9L1693 161.4L1694 160.2L1695 158.4L1696 160.8L1697 161.4L1698 160.4L1699 162.1L1700 160.9L1701 159.6L1702 159.7L1703 159.5" transform="translate(0 984.5) scale(1 0.99574)" fill="none" stroke="#ffff00" stroke-width="1.7" stroke-linejoin="round" vector-effect="non-scaling-stroke"/>
<path d="M201 1043h17M1871 1043h-17M201 1101.5h17M1871 1101.5h-17M201 1160h17M1871 1160h-17M409.8 985v15M409.8 1220v-15M618.5 985v15M618.5 1220v-15M827.2 985v15M827.2 1220v-15M1036 985v15M1036 1220v-15M1244.8 985v15M1244.8 1220v-15M1453.5 985v15M1453.5 1220v-15M1662.2 985v15M1662.2 1220v-15" stroke="#fff" stroke-width="2" fill="none"/>
<rect x="201" y="985" width="1670" height="235" fill="none" stroke="#fff" stroke-width="2"/>
<text transform="translate(194 991.1) scale(0.86 1)" text-anchor="end" class="ax">1</text>
<text transform="translate(194 1049.6) scale(0.86 1)" text-anchor="end" class="ax">0.5</text>
<text transform="translate(194 1108.1) scale(0.86 1)" text-anchor="end" class="ax">0</text>
<text transform="translate(194 1166.6) scale(0.86 1)" text-anchor="end" class="ax">-0.5</text>
<text transform="translate(194 1225.1) scale(0.86 1)" text-anchor="end" class="ax">-1</text>
<text x="909.6" y="971.8" class="ax" textLength="247.9" lengthAdjust="spacingAndGlyphs">Simulation: Filtered ECG signal</text>
<text transform="translate(201 1243.5) scale(0.86 1)" text-anchor="middle" class="ax">0</text>
<text transform="translate(409.8 1243.5) scale(0.86 1)" text-anchor="middle" class="ax">500</text>
<text transform="translate(618.5 1243.5) scale(0.86 1)" text-anchor="middle" class="ax">1000</text>
<text transform="translate(827.2 1243.5) scale(0.86 1)" text-anchor="middle" class="ax">1500</text>
<text transform="translate(1036 1243.5) scale(0.86 1)" text-anchor="middle" class="ax">2000</text>
<text transform="translate(1244.8 1243.5) scale(0.86 1)" text-anchor="middle" class="ax">2500</text>
<text transform="translate(1453.5 1243.5) scale(0.86 1)" text-anchor="middle" class="ax">3000</text>
<text transform="translate(1662.2 1243.5) scale(0.86 1)" text-anchor="middle" class="ax">3500</text>
<text transform="translate(1871 1243.5) scale(0.86 1)" text-anchor="middle" class="ax">4000</text>
<text x="139" y="1290.2" class="ax" textLength="98" lengthAdjust="spacingAndGlyphs">Time offset:</text><text x="254" y="1290.2" class="ax" textLength="10.5" lengthAdjust="spacingAndGlyphs">0</text>
<text x="403" y="1348.5" class="cap" font-size="34.5"><tspan font-weight="bold">Fig-7:</tspan> Simulation result of Filtered ECG signal of Swarm algorithm based Adaptive filter.</text>
<path d="M125 1406.5Q125 1397.5 134 1397.5H1918.3Q1927.3 1397.5 1927.3 1406.5V2427Q1927.3 2432 1922.3 2432H130Q125 2432 125 2427Z" fill="url(#frame)" stroke="#262626" stroke-width="1.6"/>
<path d="M126.5 1407Q126.5 1399 134.5 1399H1917.8Q1925.8 1399 1925.8 1407V2426.5Q1925.8 2430.5 1921.8 2430.5H130.5Q126.5 2430.5 126.5 2426.5Z" fill="none" stroke="#fbf6fc" stroke-width="1.3"/>
<ellipse cx="420" cy="1435.5" rx="60" ry="8" fill="#7a5a80" opacity="0.16" filter="url(#blur)"/>
<ellipse cx="640" cy="1433.5" rx="90" ry="9" fill="#7a5a80" opacity="0.16" filter="url(#blur)"/>
<ellipse cx="900" cy="1435.5" rx="70" ry="8" fill="#7a5a80" opacity="0.16" filter="url(#blur)"/>
<ellipse cx="1180" cy="1431.5" rx="60" ry="7" fill="#7a5a80" opacity="0.16" filter="url(#blur)"/>
<ellipse cx="1380" cy="1435.5" rx="80" ry="9" fill="#7a5a80" opacity="0.16" filter="url(#blur)"/>
<ellipse cx="1560" cy="1429.5" rx="70" ry="8" fill="#7a5a80" opacity="0.16" filter="url(#blur)"/>
<ellipse cx="205" cy="1422.5" rx="90" ry="16" fill="#f2ecf4" opacity="0.55" filter="url(#blur)"/>
<rect x="138" y="1409.5" width="27" height="27" fill="#050505"/>
<path d="M146 1431.5L151 1421.5L155 1413.5L158 1419.5L163 1430.5L158 1426.5L152 1434.5Z" fill="url(#mlogo)"/>
<path d="M140 1424.5L148 1420.5L152 1421.5L148 1428.5L144 1426.5Z" fill="#3fb6d6"/>
<text x="175" y="1430" class="ttl" textLength="55" lengthAdjust="spacingAndGlyphs">Scope</text>
<path d="M1737 1399V1424Q1737 1429 1742 1429H1910Q1915 1429 1915 1424V1399Z" fill="url(#btn)" stroke="#5a5560" stroke-width="1.2"/>
<path d="M1833 1399.6V1428.4H1910Q1914.4 1428.4 1914.4 1424V1399.6Z" fill="url(#close)"/>
<path d="M1786 1399V1429M1832.7 1399V1429" stroke="#6a6470" stroke-width="1.2"/>
<rect x="1753" y="1413.5" width="19" height="6" fill="#fff" stroke="#333" stroke-width="1.2"/>
<rect x="1800.5" y="1406.2" width="18" height="16" fill="none" stroke="#333" stroke-width="1.3"/>
<rect x="1802.5" y="1408.2" width="14" height="12" fill="none" stroke="#fff" stroke-width="1.5"/>
<rect x="1805" y="1411.8" width="9" height="5" fill="#b9b5be" stroke="#333" stroke-width="1.2"/>
<path d="M1869 1408.3L1881 1418.8M1881 1408.3L1869 1418.8" stroke="#4a3a44" stroke-width="7" stroke-linecap="square"/>
<path d="M1869 1408.3L1881 1418.8M1881 1408.3L1869 1418.8" stroke="#ececec" stroke-width="4.4" stroke-linecap="square"/>
<rect x="135" y="1445" width="1781.5" height="976.5" fill="none" stroke="#fbf6fc" stroke-width="1.3"/>
<rect x="136.5" y="1446" width="1778.5" height="43.5" fill="#f0eff1" stroke="#4a4a4a" stroke-width="1.4"/>
<rect x="137" y="1488" width="1778" height="2" fill="#8e8c90"/>
<rect x="137" y="1490" width="1778" height="1.5" fill="#dcdadd"/>
<rect x="136.5" y="1491.5" width="1778.5" height="928.5" fill="#807e81" stroke="#4f4955" stroke-width="1"/>
<rect x="223.2" y="1449.8" width="1.6" height="36" fill="#9c9c9c"/>
<rect x="356.2" y="1449.8" width="1.6" height="36" fill="#9c9c9c"/>
<rect x="490.2" y="1449.8" width="1.6" height="36" fill="#9c9c9c"/>
<rect x="272.5" y="1448.8" width="39" height="34.5" rx="5" fill="url(#pressed)" stroke="#555" stroke-width="1.5"/>
<g transform="translate(143 1453.5)"><rect x="5.8" y="0.7" width="15.6" height="7.5" fill="#f4fafb" stroke="#6a8288" stroke-width="1.4"/><rect x="0.7" y="7.5" width="26.6" height="13" rx="2.5" fill="url(#prbody)" stroke="#4a4a4a" stroke-width="1.4"/><rect x="2.6" y="16" width="22.5" height="8.6" fill="url(#prtray)" stroke="#52666c" stroke-width="1.3"/></g>
<g transform="translate(196.8 1465)"><path d="M9.2 -2.8L11.9 -2.7L11.9 2.7L9.2 2.8L8.5 4.5L10.3 6.5L6.5 10.3L4.5 8.5L2.8 9.2L2.7 11.9L-2.7 11.9L-2.8 9.2L-4.5 8.5L-6.5 10.3L-10.3 6.5L-8.5 4.5L-9.2 2.8L-11.9 2.7L-11.9 -2.7L-9.2 -2.8L-8.5 -4.5L-10.3 -6.5L-6.5 -10.3L-4.5 -8.5L-2.8 -9.2L-2.7 -11.9L2.7 -11.9L2.8 -9.2L4.5 -8.5L6.5 -10.3L10.3 -6.5L8.5 -4.5Z" fill="url(#gearg)" stroke="#2e2e2e" stroke-width="1.7" stroke-linejoin="round"/><circle r="5.2" fill="none" stroke="#222" stroke-width="2.4"/><circle r="3.4" fill="#f2f2f2"/></g>
<g transform="translate(247.6 1462.5)" fill="none" stroke="#2a2a2a"><circle r="8.3" stroke-width="1.6" fill="#f4f4f6" stroke="#444"/><path d="M-4.2 0h8.4M0 -4.2v8.4" stroke-width="2.2"/><path d="M6.2 6.2L14 13.5" stroke-width="3"/></g>
<g transform="translate(292.3 1462.3)" fill="none" stroke="#111"><path d="M-12.5 -4.5v10M12.5 -4.5v10" stroke-width="2.6"/><path d="M-10.5 0.5l2.5-2v4zM10.5 0.5l-2.5-2v4z" fill="#111" stroke-width="1"/><circle r="4.8" stroke-width="1.6" stroke="#555" fill="#eee"/><path d="M3.5 4.5L6.5 9.5" stroke-width="2" stroke="#444"/></g>
<g transform="translate(331.1 1464.2)" fill="none" stroke="#111"><path d="M-4 -11.8h8M-4 11.8h8" stroke-width="2.6"/><path d="M0 -10v3.5M0 10v-3.5" stroke-width="1.6"/><circle r="4.8" stroke-width="1.6" stroke="#555" fill="#eee"/><path d="M4 3L8.5 7" stroke-width="2" stroke="#444"/></g>
<g transform="translate(370.8 1451.8)"><rect x="1.2" y="1.2" width="24.6" height="24.6" fill="url(#autog)" stroke="#2b2b2b" stroke-width="2.4"/><path d="M5 5l5 5M5 5h4.5M5 5v4.5M22 5l-5 5M22 5h-4.5M22 5v4.5M5 22l5-5M5 22h4.5M5 22v-4.5M22 22l-5-5M22 22h-4.5M22 22v-4.5" stroke="#222" stroke-width="1.8" fill="none"/></g>
<g transform="translate(410.3 1451.8)"><path d="M0.5 1.2h28M1.2 0.5v24M4 1v3M7.5 1v3M11 1v3M14.5 1v3M18 1v3M21.5 1v3M25 1v3M28 1v3M1 6h3M1 10h3M1 14h3M1 18h3M1 22h3" stroke="#222" stroke-width="1.3" fill="none"/><rect x="14.5" y="13.6" width="13" height="13.4" fill="#5e5e5e"/><rect x="15.5" y="14.5" width="11" height="5" fill="#7a7a7a"/><rect x="17.5" y="22" width="7" height="4" fill="#fff"/><rect x="20" y="22.5" width="1.5" height="3" fill="#333"/><path d="M2.5 4.5L6.5 1.5L15 10L17 8L18 16L10 15L12 13L3.5 6.5Z" fill="#e8304a" stroke="#b01020" stroke-width="1"/><path d="M5 4L13 12" stroke="#f6a0b0" stroke-width="1.2"/></g>
<g transform="translate(450.6 1451.8)"><path d="M0.5 1.2h28M1.2 0.5v24M4 1v3M7.5 1v3M11 1v3M14.5 1v3M18 1v3M21.5 1v3M25 1v3M28 1v3M1 6h3M1 10h3M1 14h3M1 18h3M1 22h3" stroke="#222" stroke-width="1.3" fill="none"/><rect x="14.5" y="13.6" width="13" height="13.4" fill="#5e5e5e"/><rect x="15.5" y="14.5" width="11" height="5" fill="#7a7a7a"/><rect x="17.5" y="22" width="7" height="4" fill="#fff"/><rect x="20" y="22.5" width="1.5" height="3" fill="#333"/><path d="M3 3L12 3.5L10 5.5L18 13L15 16.5L7 9L5 11Z" fill="#8ad45a" stroke="#3c8c2a" stroke-width="1"/><path d="M6 5L14 12.5" stroke="#c4f0a0" stroke-width="1.2"/></g>
<g transform="translate(506.3 1451.8)"><rect x="1.2" y="1.2" width="19.3" height="21" fill="url(#monog)" stroke="#111" stroke-width="2.4"/><rect x="4.6" y="4.6" width="12.5" height="9.5" fill="#eaf8fd" stroke="#1c68b8" stroke-width="1.6"/><path d="M5.5 23v4M9.5 23v4M13.5 23v4M17 23v4" stroke="#111" stroke-width="1.6"/></g>
<g transform="translate(547.4 1451.8)"><path d="M5 10.5V4L7.5 1.3H11.5L14 4V10.5" fill="none" stroke="#8c8c8c" stroke-width="2.6"/><rect x="0.3" y="10" width="18.9" height="17" fill="#8f8f8f"/><rect x="8.5" y="16" width="2" height="5" fill="#7a7a7a"/></g>
<g transform="translate(584 1451.8)"><path d="M10.3 1.5h13.5M0 8.3h23.8M11.8 1.5v14.5" stroke="#8a8a8a" stroke-width="3" fill="none"/><path d="M16.5 11.5L16.5 24.5L19.5 22L22.5 28L25.5 26.5L22.5 20.5L26.5 19.5Z" fill="#9a9a9a" stroke="#7a7a7a" stroke-width="1"/></g>
<path d="M1894 1462.8h3l6 6v-4h2v8h-8v-2h4l-6-6Z" fill="#111"/>
<rect x="201" y="1543" width="1670" height="230" fill="#000"/>
<path d="M201 1580.3H1871M201 1618.9H1871M201 1657.5H1871M201 1696H1871M201 1734.6H1871M409.8 1543V1773M618.5 1543V1773M827.2 1543V1773M1036 1543V1773M1244.8 1543V1773M1453.5 1543V1773M1662.2 1543V1773" stroke="#fff" stroke-width="2" stroke-dasharray="2 6.7" fill="none"/>
<g transform="translate(0 1541.7) scale(1 0.98763)"><path d="M201 82.4H201V82.4H203V90H205V84.5H207V88.9H209V95.3H211V96.6H213V96.9H215V96.8H217V94.3H219V96.4H221V96.8H223V100.3H225V95.4H227V98.9H229V103.9H231V106.3H233V105.9H235V106.3H237V103H239V108.1H241V106.1H243V106.7H245V104.9H247V107.8H249V107.3H251V104.1H253V108.1H255V109.6H257V108.7H259V106.7H261V104.5H263V105.3H265V107H267V108.3H269V104.2H271V104.4H273V109.1H275V106.9H277V101.1H279V104.3H281V101.4H283V101.5H285V97.2H287V96.7H289V97.7H291V98.2H293V95.9H295V102.2H297V97.7H299V102.8H301V97.1H303V97.2H305V100H307V104.1H309V97.5H311V99.7H313V98.9H315V103.2H317V100H319V103.9H321V98.8H323V103H325V103.4H327V100.6H329V99.3H331V95.9H333V96.9H335V91.4H337V95.2H339V97.5H341V103.3H343V98H345V98.9H347V102.7H349V103.2H351V101.3H353V105.1H355V101.2H357V103.1H359V101.8H361V103.7H363V102.3H365V103H367V104.8H369V106.3H371V104.6H373V104.4H375V102.6H377V106.4H379V105H381V103H383V103.8H385V105H387V107.9H389V105.9H391V102.6H393V110.4H395V106H397V110.8H399V104.1H401V99.5H403V98.9H405V98.3H407V94.1H409V97.9H411V98H413V97.3H415V95.3H417V95.2H419V102H421V101.5H423V100.6H425V100.1H427V97.6H429V100.8H431V104.2H433V104.3H435V100.3H437V98.7H439V104H441V104.9H443V103H445V104.3H447V101H449V97.3H451V92H453V96.7H455V96.1H457V94H459V98.2H461V98.6H463V98.9H465V98.6H467V99.6H469V106.4H471V102.6H473V105H475V101.7H477V101.8H479V100.4H481V103.3H483V105.5H485V100.8H487V101.6H489V100.2H491V99.7H493V101.2H495V100.3H497V104.7H499V104.1H501V101.6H503V107.4H505V107.2H507V106.4H509V101.6H511V106.7H513V102.5H515V103.6H517V106H519V107.5H521V101H523V96.9H525V96H527V94.9H529V95.9H531V91.5H533V92.5H535V95.8H537V99.1H539V97.5H541V101.5H543V97.8H545V95.8H547V98.3H549V101.8H551V99.3H553V95.4H555V99.1H557V99.6H559V96.1H561V100.5H563V98H565V101.6H567V101.7H569V97H571V94.1H573V90.9H575V89.3H577V93H579V97.4H581V97.1H583V99H585V102.3H587V100H589V102.1H591V101.8H593V105H595V102.5H597V106.7H599V102.2H601V101.8H603V108.6H605V104H607V109H609V106.5H611V108.9H613V104.6H615V108.4H617V102.9H619V109.2H621V104.2H623V104.8H625V109.7H627V110H629V106.3H631V109.2H633V109.6H635V104.4H637V111H639V101.2H641V100.1H643V100H645V98.6H647V101.5H649V94.6H651V97.7H653V98.9H655V101.5H657V103.4H659V97.9H661V97.6H663V101.3H665V100.7H667V98.5H669V97.8H671V99H673V102H675V98.5H677V99.5H679V102.5H681V104.9H683V101.6H685V102.2H687V98.8H689V93.3H691V96.3H693V93.7H695V94.8H697V94.8H699V95.7H701V103.1H703V99.1H705V103.1H707V106H709V108H711V102H713V105.3H715V104.1H717V103.9H719V108.6H721V103.4H723V102.2H725V105.8H727V105.7H729V109.1H731V106.3H733V105H735V107.5H737V105.4H739V104.2H741V109.8H743V109.6H745V104.1H747V103H749V109.7H751V103H753V104.2H755V108.4H757V108.5H759V100H761V101.2H763V96H765V100.7H767V97.6H769V100.4H771V100.4H773V96.9H775V100.9H777V100.4H779V99.8H781V96.7H783V102.4H785V97.5H787V99.7H789V102.6H791V100.5H793V100.1H795V103.8H797V97.7H799V98.4H801V104.6H803V101.5H805V103.4H807V100.5H809V93.6H811V93.1H813V93.6H815V96.6H817V94.6H819V101.9H821V99.6H823V104.2H825V105.2H827V105.6H829V101.1H831V104.8H833V100.9H835V105.6H837V101.9H839V108.3H841V105.2H843V106.7H845V108.5H847V104H849V106.8H851V103.8H853V108.2H855V103.7H857V108.5H859V105H861V102.1H863V106.1H865V107.2H867V106.5H869V102.7H871V107.3H873V108.2H875V108.8H877V105.2H879V102.5H881V100H883V96.1H885V99H887V96.8H889V96H891V95.7H893V101.1H895V96.1H897V102.4H899V96.5H901V98.7H903V98H905V102H907V98.1H909V98.3H911V101.8H913V99.3H915V100.5H917V99.3H919V101.8H921V99.6H923V98.3H925V97.4H927V98.4H929V94.9H931V95.1H933V96.5H935V89.1H937V97.3H939V97.2H941V94.5H943V101.3H945V100H947V104.9H949V104H951V101.2H953V107.7H955V107.1H957V104.9H959V109.2H961V108.9H963V105.3H965V107H967V107.6H969V104.5H971V108.8H973V104H975V109.8H977V104.2H979V108.7H981V107.7H983V104.1H985V110H987V109.1H989V107.6H991V107.2H993V107.2H995V103.4H997V99.5H999V95.3H1001V98.4H1003V97.4H1005V97.9H1007V98.8H1009V103.6H1011V105.2H1013V102.5H1015V101.7H1017V104.1H1019V103.4H1021V106.2H1023V105.4H1025V103H1027V100.4H1029V104.2H1031V103.1H1033V96.1H1035V94.8H1037V96.1H1039V93.4H1041V98.1H1043V102.3H1045V105.2H1047V105.1H1049V102.5H1051V109H1053V108.7H1055V104.5H1057V106.3H1059V104H1061V107.8H1063V106.8H1065V105H1067V106.9H1069V108.8H1071V108.8H1073V104H1075V106.5H1077V105H1079V107.9H1081V108.8H1083V109.2H1085V106.5H1087V104.8H1089V103.5H1091V107.4H1093V109.9H1095V104.6H1097V103.9H1099V105.4H1101V108.3H1103V106.5H1105V109.3H1107V104.5H1109V103.4H1111V100.1H1113V99.9H1115V98.3H1117V96.1H1119V97.3H1121V94.5H1123V93.4H1125V99.8H1127V100.1H1129V97.1H1131V95.9H1133V100.2H1135V96.4H1137V97H1139V99.8H1141V102.3H1143V96.7H1145V99.9H1147V98.3H1149V97.8H1151V100.5H1153V103.6H1155V104.6H1157V103.9H1159V98H1161V102.8H1163V99.3H1165V100.2H1167V104.6H1169V99.3H1171V97.5H1173V97.5H1175V96.2H1177V95H1179V97.6H1181V98.4H1183V96.3H1185V99.1H1187V98.2H1189V99H1191V98.1H1193V100.3H1195V104.6H1197V101.6H1199V104.7H1201V102H1203V108.8H1205V101.1H1207V103.8H1209V106.3H1211V108.2H1213V105.3H1215V105.7H1217V103.4H1219V107.1H1221V105.9H1223V108.5H1225V101.5H1227V102.3H1229V102.9H1231V103.4H1233V102.2H1235V103.1H1237V105.2H1239V109.4H1241V107.1H1243V109.6H1245V104.5H1247V109H1249V108.7H1251V99.3H1253V100.1H1255V94H1257V99.3H1259V93.4H1261V98.7H1263V97.8H1265V99.9H1267V94.2H1269V97.7H1271V96.4H1273V102.6H1275V101.1H1277V96.9H1279V102.8H1281V96.6H1283V103.5H1285V101.9H1287V102.9H1289V102.7H1291V98.5H1293V99.5H1295V99.9H1297V101.9H1299V98.8H1301V97H1303V91.5H1305V93.8H1307V96.8H1309V94.8H1311V92.6H1313V98.4H1315V100.3H1317V99.4H1319V98H1321V106H1323V101.6H1325V100.8H1327V106.9H1329V103.5H1331V102H1333V103.4H1335V101.2H1337V103.8H1339V106.5H1341V106.6H1343V106.1H1345V102H1347V101.9H1349V104.3H1351V103.6H1353V108H1355V102.7H1357V101.5H1359V107.2H1361V104.5H1363V105H1365V102.3H1367V101.6H1369V105.3H1371V108.5H1373V107.4H1375V104.3H1377V100.1H1379V97.2H1381V93.8H1383V97.8H1385V94.1H1387V93.3H1389V96.9H1391V99.2H1393V101.3H1395V96.4H1397V101.3H1399V96.8H1401V100.9H1403V101.8H1405V100.7H1407V102.6H1409V95.6H1411V97.8H1413V101.7H1415V101.9H1417V96.5H1419V100.9H1421V98.5H1423V100H1425V99.8H1427V92.1H1429V92.1H1431V92.3H1433V90.4H1435V92.7H1437V97.8H1439V97.8H1441V102H1443V101.2H1445V102.6H1447V101.8H1449V105.7H1451V107H1453V108.1H1455V111.1H1457V109.5H1459V104.4H1461V109.6H1463V110.6H1465V109H1467V106.2H1469V111.7H1471V109H1473V105.1H1475V106H1477V111.7H1479V110.3H1481V111H1483V112H1485V109H1487V111.3H1489V110.8H1491V108.5H1493V113H1495V106.6H1497V106.2H1499V105H1501V101.6H1503V103.5H1505V98.5H1507V96.7H1509V101.4H1511V97.3H1513V99.9H1515V98.6H1517V104.4H1519V105.7H1521V103.5H1523V103.7H1525V103H1527V105.8H1529V103.5H1531V102.2H1533V106.8H1535V104.4H1537V103H1539V103H1541V106.9H1543V103.4H1545V100H1547V97.2H1549V96.6H1551V97.7H1553V98.9H1555V99.1H1557V99.9H1559V103.1H1561V100.7H1563V105H1565V104.7H1567V106.2H1569V108.1H1571V103.2H1573V107H1575V110.1H1577V106.5H1579V107.7H1581V109.4H1583V108.9H1585V108.9H1587V106.5H1589V108.9H1591V105.8H1593V106H1595V104.5H1597V108.4H1599V104.1H1601V105.5H1603V105.8H1605V104.8H1607V106.9H1609V108.3H1611V111.3H1613V106.2H1615V105.6H1617V103.6H1619V102H1621V102H1623V96.6H1625V98.6H1627V99.1H1629V96.9H1631V104H1633V101.1H1635V102.1H1637V103.4H1639V103H1641V99.7H1643V99.4H1645V102.7H1647V101.3H1649V100H1651V103.5H1653V104.7H1655V106.1H1657V98.7H1659V104.7H1661V99.6H1663V97.1H1665V91.6H1667V92.9H1669V99.8H1671V96.4H1673V102.8H1675V105.2H1677V103.1H1679V105.8H1681V103H1683V106.9H1685V104.2H1687V108.6H1689V107.4H1691V110.5H1693V110.8H1695V109.7H1697V110.7H1699V111.5H1701V110.5H1703V109.5H1703V191.5H1703V191.5H1701V188.4H1699V188.9H1697V190.7H1695V189.5H1693V186H1691V191.9H1689V187H1687V187.9H1685V184.2H1683V186.7H1681V189H1679V183.6H1677V185.6H1675V182.8H1673V182.8H1671V176H1669V179.5H1667V179.2H1665V180.6H1663V174.5H1661V179.6H1659V182.1H1657V180.1H1655V183.3H1653V186.7H1651V182.9H1649V187H1647V181.3H1645V182.1H1643V183H1641V180.7H1639V184.6H1637V181.4H1635V181.2H1633V180.5H1631V184.1H1629V178.5H1627V183.3H1625V177.7H1623V182.9H1621V183.4H1619V184.1H1617V182.6H1615V186.6H1613V190.2H1611V189.4H1609V191.4H1607V189.6H1605V191.6H1603V185.3H1601V187.3H1599V190.3H1597V190H1595V185H1593V188.2H1591V188.2H1589V188.6H1587V189.3H1585V192.3H1583V187H1581V190.7H1579V184.6H1577V189.7H1575V190.9H1573V184.6H1571V184.5H1569V190.8H1567V189.5H1565V187.5H1563V183.7H1561V187H1559V183.6H1557V185.3H1555V183.1H1553V176.3H1551V181.1H1549V179.4H1547V178.2H1545V184.4H1543V187.4H1541V185.7H1539V183.5H1537V183.7H1535V188.1H1533V186.5H1531V187.1H1529V187.5H1527V185.5H1525V186.4H1523V185.8H1521V187.8H1519V184.7H1517V183H1515V180.9H1513V181.7H1511V184.5H1509V180.2H1507V177H1505V180.6H1503V185.3H1501V184.3H1499V186.1H1497V184.1H1495V190.7H1493V194H1491V194.2H1489V188.8H1487V188.5H1485V189.7H1483V191.5H1481V189.2H1479V193.5H1477V190.7H1475V189.6H1473V191.1H1471V193H1469V191H1467V186.4H1465V187.5H1463V186.1H1461V190.5H1459V187.7H1457V190.1H1455V191.5H1453V190.4H1451V183.8H1449V186H1447V182H1445V180H1443V184.1H1441V183.5H1439V182.5H1437V180.7H1435V178.8H1433V175.6H1431V174.5H1429V171.5H1427V172.4H1425V179.2H1423V179.7H1421V184.7H1419V177.5H1417V182.6H1415V181.9H1413V181H1411V183.4H1409V179.1H1407V184.6H1405V181.4H1403V181.5H1401V177.5H1399V184H1397V180.6H1395V176.3H1393V179.4H1391V175H1389V179H1387V180.6H1385V174.6H1383V180.2H1381V180.5H1379V182.8H1377V183.8H1375V183.5H1373V191.1H1371V190.9H1369V185H1367V185.9H1365V189.6H1363V188.1H1361V186.7H1359V189.9H1357V188.6H1355V185.5H1353V185.2H1351V185.9H1349V188.1H1347V187.9H1345V183.5H1343V186.2H1341V184.8H1339V183.4H1337V182.1H1335V184.1H1333V185.2H1331V182.7H1329V187.4H1327V185.6H1325V185.8H1323V186.1H1321V184.3H1319V178.9H1317V183.9H1315V181.6H1313V176.4H1311V179.9H1309V176.7H1307V174.1H1305V175.4H1303V177.4H1301V183H1299V183.5H1297V178.7H1295V184.3H1293V179.4H1291V183.4H1289V181H1287V184.6H1285V180.4H1283V184H1281V182.1H1279V180H1277V179.8H1275V178.1H1273V179.4H1271V184.5H1269V182.8H1267V182H1265V176H1263V178.5H1261V175.3H1259V175.2H1257V180.3H1255V179.6H1253V178.3H1251V185.6H1249V190.5H1247V188.8H1245V189.5H1243V184.8H1241V188.6H1239V189.1H1237V183.6H1235V190H1233V190.1H1231V186.4H1229V189.1H1227V187.5H1225V185.5H1223V183.5H1221V188.8H1219V188.2H1217V186.4H1215V190.1H1213V186.5H1211V189.4H1209V185.7H1207V184.2H1205V184.1H1203V185.2H1201V188.2H1199V187.1H1197V186.2H1195V185.2H1193V185.4H1191V181H1189V182.7H1187V179.3H1185V179.1H1183V179H1181V173.6H1179V174.3H1177V174.2H1175V175.4H1173V176.5H1171V177.7H1169V183.5H1167V184.8H1165V180.2H1163V183.7H1161V181.6H1159V181.9H1157V179.3H1155V186.6H1153V182.4H1151V180.1H1149V184.6H1147V184.1H1145V185.3H1143V179.7H1141V178.9H1139V181.5H1137V181.5H1135V184.6H1133V184.5H1131V182H1129V181.7H1127V179.1H1125V182.4H1123V177.5H1121V181.1H1119V177.4H1117V175.6H1115V182.7H1113V183H1111V180.7H1109V188.6H1107V185.9H1105V189.9H1103V192.4H1101V189.8H1099V191.7H1097V186.6H1095V184H1093V188.5H1091V188.4H1089V188.5H1087V185.5H1085V187.5H1083V184.2H1081V188.2H1079V190.1H1077V190.6H1075V184.7H1073V189.8H1071V185.9H1069V190.1H1067V184.7H1065V185.4H1063V183.6H1061V185.3H1059V188.8H1057V187.5H1055V188H1053V189.7H1051V187.5H1049V185.7H1047V190.2H1045V184.3H1043V181.3H1041V184.8H1039V176.2H1037V177.2H1035V181H1033V180.6H1031V183.5H1029V187.7H1027V186.1H1025V187.6H1023V184.5H1021V182.1H1019V181.2H1017V182H1015V181.3H1013V180.3H1011V183.8H1009V181.8H1007V186.2H1005V179.3H1003V185H1001V183H999V182.6H997V180.2H995V180.3H993V187.6H991V192.4H989V189.9H987V191.5H985V193.4H983V188.3H981V191.3H979V189.2H977V187H975V192.8H973V189.4H971V188.8H969V185.9H967V190.9H965V186.5H963V190.4H961V191.4H959V191.1H957V187.5H955V188.6H953V188.7H951V189.6H949V184.7H947V187.5H945V180.6H943V184.4H941V183.3H939V179.9H937V178.7H935V175.5H933V173.5H931V176.8H929V175.9H927V181H925V178.5H923V179.7H921V179.8H919V180.2H917V179.3H915V180.7H913V182.3H911V178.5H909V182.8H907V181.7H905V183.9H903V180.4H901V184.2H899V184.5H897V178.9H895V183.3H893V178.9H891V176.2H889V174.5H887V178.2H885V182.7H883V176.8H881V184.6H879V181.9H877V185.1H875V192H873V189.6H871V188.9H869V189.4H867V184H865V188.7H863V184.9H861V184H859V183.9H857V185.5H855V188.1H853V188.1H851V188.7H849V185.2H847V190.1H845V189.1H843V184.6H841V185.3H839V186.2H837V189.8H835V189.3H833V186.4H831V184.9H829V187.9H827V185H825V182.5H823V184.2H821V180.1H819V178.2H817V182.2H815V175.1H813V177.3H811V176.8H809V176.2H807V182H805V181.6H803V181.6H801V184.6H799V186.6H797V179.9H795V184.9H793V180.8H791V181.9H789V181.1H787V183.5H785V180H783V185.1H781V180.1H779V177.8H777V179.2H775V180H773V180.2H771V179.6H769V178.3H767V181.3H765V178.4H763V179.3H761V178.9H759V183.4H757V188H755V186.2H753V189.6H751V191.5H749V184H747V185.8H745V188.6H743V190.4H741V189.6H739V189.2H737V189.2H735V186.3H733V188.5H731V187.2H729V183.8H727V186.4H725V189.8H723V189.8H721V190.7H719V186.2H717V184.2H715V182.4H713V183.4H711V186.4H709V188.5H707V186.2H705V187.4H703V184.5H701V180.1H699V175.6H697V176H695V171.7H693V175.6H691V175.4H689V177.1H687V183.5H685V181.7H683V186.8H681V184.4H679V181.7H677V181.2H675V181.6H673V179.9H671V180.3H669V180.7H667V184.4H665V178.6H663V181.4H661V181H659V180.3H657V178.2H655V180.4H653V182.1H651V177.2H649V181.4H647V177.8H645V178.9H643V181.2H641V185.2H639V186.7H637V192.9H635V186.5H633V186.3H631V190.6H629V187.5H627V187.6H625V191H623V190.3H621V187.8H619V187.8H617V184.1H615V186.3H613V191.4H611V188.4H609V185.3H607V184.9H605V189.3H603V189.4H601V184.3H599V189.4H597V188.3H595V183.4H593V182.7H591V181.5H589V181.2H587V181.6H585V183.6H583V179.7H581V179.3H579V176.4H577V176.7H575V175.7H573V176.6H571V175.5H569V175.1H567V182H565V178.1H563V177.2H561V183.2H559V181H557V178.2H555V183.5H553V182.2H551V176.7H549V179.8H547V178.4H545V179.3H543V180.4H541V175.8H539V178.3H537V178.1H535V177.1H533V173.2H531V178.5H529V174H527V178.5H525V175.2H523V179.3H521V184.5H519V188.1H517V184.1H515V183.3H513V183.2H511V185.4H509V188.3H507V186.7H505V183.1H503V182.9H501V185.4H499V184.9H497V188.5H495V182.4H493V186.5H491V184.8H489V181.2H487V187.2H485V183.8H483V183.1H481V183.5H479V180.9H477V181.1H475V187.5H473V185.3H471V188.9H469V181.4H467V180.3H465V183.1H463V179.8H461V177.5H459V179.1H457V173.7H455V179H453V176.2H451V175.8H449V177.8H447V181.2H445V181.4H443V185.4H441V180.3H439V183.1H437V186.4H435V184H433V180.7H431V179.3H429V185.4H427V178.1H425V183.2H423V180.6H421V183.7H419V181.5H417V182.1H415V178H413V176.3H411V181.1H409V178H407V176H405V177H403V184.2H401V185.6H399V187.4H397V186.7H395V191.4H393V189.7H391V189.5H389V186.6H387V185.9H385V187.6H383V191H381V190.6H379V187.7H377V185.4H375V185.4H373V183.3H371V190.4H369V186.4H367V186H365V184.1H363V187.5H361V183.7H359V187.8H357V184H355V184.2H353V185.3H351V190.2H349V188H347V185.6H345V187.9H343V181.3H341V185.1H339V182.6H337V176.6H335V172.4H333V176.8H331V175.9H329V180H327V180.9H325V186.5H323V179.7H321V182.3H319V182.9H317V186.8H315V185.8H313V182.3H311V184.9H309V184.8H307V186.3H305V183.1H303V179.4H301V184.6H299V180.2H297V183.8H295V177.9H293V182.9H291V179.1H289V175.4H287V180.1H285V181.5H283V183.1H281V183.3H279V181.9H277V188.8H275V192.8H273V187.1H271V191.3H269V189.7H267V184.4H265V190.3H263V191H261V190.9H259V190.3H257V187.4H255V185.5H253V190.9H251V190.7H249V184.1H247V190.9H245V185.4H243V190.9H241V183.7H239V184.2H237V191.3H235V183.5H233V184.1H231V182.5H229V185.1H227V183.7H225V178.3H223V176.3H221V180H219V179.2H217V178.5H215V178.6H213V180.2H211V177.2H209V172.9H207V174.1H205V168.6H203V164.3H201V164.9H201Z" fill="#ffff00"/><path d="M204 89V115.6M228.4 97.9V130.2M243 105.1V117.7M251.2 103.1V109.1M257.5 107.7V139.2M267.1 107.3V135.4M272.9 103.4V112.7M284.2 100.5V133.9M294.4 94.9V127.6M302.7 96.1V107.6M313.3 97.9V130.8M323.7 102V117.9M329.7 98.3V105.8M336.5 90.4V96.2M345.6 97.9V112.3M355.5 100.2V114.8M363.4 101.3V108.6M374.2 103.4V130.2M384.3 102.8V130.6M391.5 101.6V107.6M396.8 105V137.5M402.9 98.5V130.3M413.6 96.3V111.9M421.7 100.5V109.3M431.2 103.2V133.1M442 103.9V126.8M452.5 91V122.7M460.8 97.2V111.8M466.8 97.6V107.5M481.9 102.3V135.8M490.1 99.2V111.6M498.7 103.7V122.2M506.2 106.2V137.6M511.4 105.7V134.9M517.2 105V137.4M526 95V103.7M533.6 91.5V120.9M540.4 96.5V130.3M558.2 98.6V124.8M566.1 100.6V117.6M572 93.1V126.6M582.7 96.1V115.9M589.8 101.1V114.4M606.6 103V130.5M615.8 107.4V134.4M623 103.2V116.8M630.9 105.3V130.4M646.5 97.6V103.6M654.8 97.9V122.4M662.6 96.6V120.5M672.4 98V121.8M681.8 103.9V119.4M711.7 101V121.6M717.7 102.9V135M725.6 104.8V130.7M735 104V131.6M743.5 108.6V126.1M752.2 102V125.6M761.5 100.2V110.4M769.2 99.4V111.2M778.3 99.4V106.3M786.1 96.5V103.7M791.9 99.5V110.3M798.1 96.7V115.5M805.4 102.4V124.6M816.8 95.6V109.1M824.3 103.2V132.3M831.5 103.8V126.7M837.1 100.9V116.2M855.5 102.7V131.2M864.3 105.1V114.8M872.9 106.3V138.9M883.7 95.1V110.6M894.1 100.1V108.8M902.5 97.7V107.3M918.5 98.3V110.4M943 100.3V113.3M953.9 106.7V124.1M968.8 106.6V125.7M974.5 103V121.2M981.2 106.7V135.7M986.3 109V122.4M996.9 102.4V115M1003.5 96.4V129.9M1010.3 102.6V121.7M1019.2 102.4V129M1024.9 104.4V118.6M1033.1 95.1V109.2M1041.3 97.1V113M1050.7 101.5V108.2M1057.2 105.3V136.8M1067.6 105.9V112M1077.2 104V125.9M1086.5 105.5V124.7M1097 103.6V120.3M1107.1 103.5V117.5M1117.1 95.1V124.3M1126.2 98.8V112.6M1141.8 101.3V122.4M1149.7 96.8V106.8M1158.3 102.9V110.5M1164.6 98.3V126.2M1173.6 96.5V122.5M1193.7 99.3V128.7M1200 103.7V136.2M1209.3 105.3V119.2M1219.8 106.1V128.9M1227.3 101.3V124.5M1232.5 102.4V118.7M1238 104.2V126M1253.2 99.1V113.6M1261.8 97.7V129.8M1269.1 96.7V122M1275 101.6V121.5M1285.5 100.9V124M1292 97.5V110.4M1301.5 96V105.5M1307.9 95.8V122.2M1314 97.4V121.5M1319.5 97V105.3M1325.3 99.8V112.2M1335.5 100.2V115M1345.3 101V127.1M1350.6 103.3V135.8M1359.7 106.2V115.1M1370.6 104.3V133M1376.4 103.3V118.9M1382.8 92.8V115.8M1389.9 95.9V105.5M1399.9 95.8V124.1M1415.6 100.9V122.7M1425 98.8V107.2M1430.2 91.1V97.9M1440.6 96.8V123.9M1445.6 101.6V132.3M1454.3 107.1V125.9M1459.9 103.4V113.6M1467.1 105.2V135.7M1473.1 104.1V117.6M1479 109.3V121.6M1486.9 108V139.7M1503.3 102.5V121.4M1513.9 98.9V123.4M1520.7 104.7V130.9M1526.7 102V108.4M1533 105.8V122.8M1543.9 102.4V116.9M1551.7 96.7V122.9M1561 102.1V114.6M1578.9 105.5V138.7M1583.9 107.9V135.5M1591.4 104.8V125.9M1602.3 104.5V120.1M1607.9 105.9V136.9M1621.2 101V108.1M1628.6 98.1V111M1636 101.1V108.3M1647.3 100.3V117.3M1655.5 105.1V119.7M1661.1 98.6V130.2M1676 104.2V125.1M1683.9 105.9V122.1M1692.7 109.5V140.8M1699.5 110.5V139.4M207 175.1V161.7M212.5 178.2V152.1M219.4 180.2V172.4M225.9 179.3V162.9M234.3 185.1V177.8M243.5 191.9V181.2M250.3 185.1V176.9M257.8 188.4V163.9M275 193.8V173.7M282.7 184.3V162.2M293.4 183.9V160.7M300 181.2V165.9M305.8 184.1V174.2M312.4 185.9V173M317.8 187.8V168.2M322.9 183.3V174.3M340.8 183.6V172.1M348.3 186.6V172.6M353.4 186.3V159.9M362.8 184.7V165.8M368.8 187V170.2M379.4 188.7V180.1M394.1 190.7V174M420.5 182.5V156.4M428 179.1V149M433.2 181.7V164M443.5 186.4V175.3M450.1 178.8V159M457.3 174.7V163M464.4 180.8V150.5M474.4 186.3V165.2M481.8 184.5V158M489.8 182.2V172.3M495.4 183.4V155.2M501.6 186.4V172.6M519.4 189.1V174M524.5 180.3V159.9M530.6 175V161.3M535.7 178.1V162.8M543.6 181.4V165.7M554.5 183.2V154.4M563.6 178.2V159.1M573.4 177.6V157.1M582.5 180.3V167.5M588 182.6V168M596.5 184.4V160.8M610 186.3V178.8M619.5 188.8V159.1M629.9 188.5V161.9M639.3 187.7V176.8M662.1 182V176.3M669.4 181.7V159.7M688.5 184.5V176.1M697.6 177V153.4M711.2 187.4V175M725.9 190.8V166M732.2 188.2V168.3M751.6 192.5V176.1M766.6 179.4V158.5M777.4 180.2V173.8M783.1 186.1V165.3M789.2 182.1V161.5M798.1 180.9V157M803.4 182.6V156.1M814.2 178.3V151.3M829.4 188.9V162.2M837.3 190.8V180.3M843.2 185.6V176.1M851.9 189.7V165M861.3 185V159.2M881.3 185.6V155.8M887 183.7V176.4M893.2 179.9V162.8M902.3 185.2V177.4M909.7 183.8V168.7M915.4 181.7V166.7M924.5 180.7V151M935.2 176.5V151.9M944.5 185.4V176.8M952.4 190.6V166.5M962.9 192.4V179.5M970.9 186.9V161.5M979.3 190.2V176.1M989.4 190.9V183.9M997 181.3V159M1002.4 184V175.9M1018.5 183V153.9M1024.1 185.5V159.5M1029.1 188.7V174M1034.2 181.6V164.4M1041.5 185.8V178.8M1055.5 189V181.2M1071.3 186.9V179.9M1078.6 191.6V175.1M1096 185V178.4M1101.2 190.8V174.8M1111.4 181.7V153.1M1134.1 185.5V169.2M1151.3 181.1V168.6M1159.1 182.9V160.5M1164.8 184.7V167.6M1170.3 184.5V156.4M1180.6 175.3V169.2M1199.1 188.1V176.5M1214.8 187.5V171.1M1221.4 189.8V174.8M1231.1 187.4V168.8M1241.9 189.6V181.6M1247.6 189.8V174.8M1254.8 179.3V159.1M1265.6 177V157.1M1272.2 185.5V161.5M1278 180.8V157.4M1283 185V168.9M1291.1 184.4V158.9M1296.4 185.3V178.7M1303.7 178.4V172.1M1310.5 177.7V155.7M1321.1 185.3V166.3M1347.8 188.9V159.9M1353.3 186.2V162.1M1361.5 187.7V158.9M1368.3 186.9V160.4M1374.1 192.1V174.1M1382.5 181.5V164.5M1387.9 181.6V167.4M1400.3 185V159.7M1409.7 180.1V153.6M1418.5 183.6V162.1M1425 180.7V153.1M1438.7 181.7V174.7M1448.1 183V177.1M1453.4 191.4V173.4M1463.6 187.1V166.7M1469.3 192V171.1M1478 191.7V162.3M1483.6 192.5V169.7M1489.2 189.8V172.6M1507.4 178V156.3M1517.5 184V159.4M1524 186.8V181.1M1533.6 187.5V159.2M1541.4 186.7V175.6M1554.2 177.3V162.8M1559.7 184.6V163.4M1568.6 190.5V181.4M1576.5 191.9V175.1M1590.8 189.6V171.6M1607.4 190.6V174.4M1617.1 183.6V170.6M1622.7 184.4V169.8M1633.1 181.5V160M1647.6 182.3V168.2M1653.2 187.7V160.9M1661.7 180.6V150.6M1669 180.5V156.7M1675.6 183.8V169.9M1681.2 190V166.4M1694 187V176.8" stroke="#000" stroke-width="1.9"/><path d="M232 132.8V46.9M355 132.8V7.8M477 132.8V10.2M595 132.8V24.2M715 132.8V29.7M833 132.8V14.1M956 132.8V2.3M1054 132.8V25M1203.5 132.8V43.8M1330 132.8V45.3M1452.5 132.8V7.8M1571 132.8V33.6M1687 132.8V18" stroke="#ffff00" stroke-width="2.6" fill="none"/><path d="M234.2 105.5V179.7M357.2 105.5V179.7M479.2 105.5V179.7M597.2 105.5V179.7M717.2 105.5V179.7M835.2 105.5V179.7M958.2 105.5V179.7M1056.2 105.5V179.7M1205.7 105.5V179.7M1332.2 105.5V179.7M1454.7 105.5V179.7M1573.2 105.5V179.7M1689.2 105.5V179.7" stroke="#000" stroke-width="2.2" fill="none"/><path d="M228.5 164V192.2M236 164V188.3M351.5 169V196.1M359 169V192.2M473.5 168.4V198.5M481 168.4V194.6M591.5 166.2V203.9M599 166.2V200M711.5 168.8V198.5M719 168.8V194.6M829.5 168.5V196.9M837 168.5V193M952.5 168.3V196.1M960 168.3V192.2M1050.5 169.2V198.5M1058 169.2V194.6M1200 169.6V198.5M1207.5 169.6V194.6M1326.5 168.2V200.8M1334 168.2V196.9M1449 167.1V196.1M1456.5 167.1V192.2M1567.5 170.8V195.3M1575 170.8V191.4M1683.5 169.5V196.1M1691 169.5V192.2" stroke="#ffff00" stroke-width="1.5" fill="none"/></g>
<path d="M201 1580.3h17M1871 1580.3h-17M201 1618.9h17M1871 1618.9h-17M201 1657.5h17M1871 1657.5h-17M201 1696h17M1871 1696h-17M201 1734.6h17M1871 1734.6h-17M409.8 1543v15M409.8 1773v-15M618.5 1543v15M618.5 1773v-15M827.2 1543v15M827.2 1773v-15M1036 1543v15M1036 1773v-15M1244.8 1543v15M1244.8 1773v-15M1453.5 1543v15M1453.5 1773v-15M1662.2 1543v15M1662.2 1773v-15" stroke="#fff" stroke-width="2" fill="none"/>
<rect x="201" y="1543" width="1670" height="230" fill="none" stroke="#fff" stroke-width="2"/>
<text transform="translate(194 1548.3) scale(0.86 1)" text-anchor="end" class="ax">1.5</text>
<text transform="translate(194 1586.9) scale(0.86 1)" text-anchor="end" class="ax">1</text>
<text transform="translate(194 1625.5) scale(0.86 1)" text-anchor="end" class="ax">0.5</text>
<text transform="translate(194 1664) scale(0.86 1)" text-anchor="end" class="ax">0</text>
<text transform="translate(194 1702.6) scale(0.86 1)" text-anchor="end" class="ax">-0.5</text>
<text transform="translate(194 1741.2) scale(0.86 1)" text-anchor="end" class="ax">-1</text>
<text transform="translate(194 1779.8) scale(0.86 1)" text-anchor="end" class="ax">-1.5</text>
<text x="961.8" y="1530.9" class="ax" textLength="143.7" lengthAdjust="spacingAndGlyphs">Noisy ECG Signal</text>
<rect x="201" y="1827" width="1670" height="228" fill="#000"/>
<path d="M201 1884H1871M201 1941H1871M201 1998H1871M409.8 1827V2055M618.5 1827V2055M827.2 1827V2055M1036 1827V2055M1244.8 1827V2055M1453.5 1827V2055M1662.2 1827V2055" stroke="#fff" stroke-width="2" stroke-dasharray="2 6.7" fill="none"/>
<path d="M201 131.7L202 132.1L203 135.9L204 134.7L205 134.8L206 137.8L207 137.9L208 139.6L209 144L210 141.6L211 143.8L212 146.5L213 149.2L214 146.1L215 149.4L216 148.5L217 148L218 149.3L219 148.6L220 151.7L221 150L222 152.2L223 150L224 150.7L225 155.5L226 155.8L227 160.5L228 165.7L228.8 175.1L229.7 168L229.7 85.8L231 85.8L231 16.5L232.8 16.5L233.2 144.5L233.4 168L234.6 164.5L234.8 160.2L236.5 167.2L237 166.8L238 166.4L239 162.6L240 165.3L241 164.4L242 166.1L243 165.1L244 165.7L245 166L246 164.8L247 164.8L248 163.2L249 164.4L250 163.2L251 163.6L252 162.9L253 164.6L254 167.3L255 163.7L256 163.2L257 163.5L258 165.3L259 164.6L260 167.2L261 164.1L262 165.4L263 167L264 168.1L265 164.1L266 163.4L267 168.1L268 164.5L269 166.6L270 168.6L271 168.5L272 166.7L273 166.8L274 171.7L275 167.7L276 168.4L277 162.6L278 162.5L279 157.9L280 155.6L281 156.3L282 151.9L283 154.6L284 155.5L285 152.5L286 155.1L287 154L288 152.6L289 151.6L290 154.5L291 155.7L292 151.9L293 155.3L294 152.6L295 153.4L296 156.6L297 156.8L298 156.7L299 156.1L300 156.5L301 156.8L302 156.6L303 155L304 157.4L305 157.9L306 156.5L307 159.1L308 158.9L309 155.5L310 158L311 158L312 160.9L313 158.9L314 158.1L315 161.2L316 158.2L317 158.2L318 161.3L319 158.2L320 158.9L321 157.6L322 159.2L323 157.2L324 156.8L325 160.4L326 159L327 153.5L328 149.8L329 151.3L330 149.3L331 148L332 148.9L333 148L334 147.7L335 148.7L336 148.9L337 151.9L338 152.9L339 152L340 157.1L341 155.5L342 155.8L343 159.1L344 160.5L345 158.5L346 162.3L347 163.6L348 163.2L349 165.3L350 170L351 171.5L351.8 181L352.7 173.9L352.7 85.8L354 85.8L354 5.9L355.8 5.9L356.2 150.4L356.4 173.9L357.6 170.4L357.8 157.7L359.5 164.7L360 161.4L361 164.5L362 163.4L363 163.3L364 160.8L365 162.9L366 160.8L367 164.3L368 163.5L369 161.9L370 160.8L371 163L372 164.2L373 164.8L374 162.7L375 164.5L376 161.4L377 161.3L378 164.7L379 164.2L380 161.5L381 162.4L382 161.6L383 164L384 165.2L385 164.4L386 161.8L387 164.6L388 164.2L389 163.9L390 163.9L391 164L392 161.6L393 166.2L394 167.7L395 163.4L396 164.4L397 164.5L398 165.3L399 160.3L400 158.1L401 159.9L402 155.4L403 153.1L404 152.2L405 151.1L406 152L407 151.5L408 151.8L409 152.3L410 149.3L411 150.6L412 148.3L413 152.8L414 148.9L415 150.6L416 149.9L417 150.6L418 151.2L419 153.4L420 156.7L421 153L422 156.1L423 155.6L424 153.8L425 154.6L426 155.3L427 152.7L428 154.5L429 156L430 156.6L431 153.6L432 155.7L433 154.2L434 156.5L435 157.5L436 155.8L437 154.5L438 157.9L439 154.8L440 154.3L441 154.8L442 154.6L443 158.6L444 155.3L445 153.9L446 157.9L447 156.6L448 155.9L449 152.3L450 150.6L451 148.1L452 145.3L453 148.7L454 147.8L455 146.8L456 146.3L457 147.5L458 144.2L459 146.3L460 151.7L461 150.7L462 152.9L463 154.1L464 155.1L465 154.8L466 156L467 158.2L468 160L469 160.3L470 162.3L471 162.7L472 167.4L473 175.1L473.8 184.5L474.7 177.4L474.7 85.8L476 85.8L476 2.4L477.8 2.4L478.2 153.9L478.4 177.4L479.6 173.9L479.8 159.1L481.5 166.2L482 163.5L483 162.7L484 164.5L485 166.1L486 165.6L487 164.7L488 163.5L489 162.6L490 164.7L491 162.6L492 163.6L493 164.6L494 164.9L495 164.3L496 163.3L497 164.8L498 163.4L499 164.7L500 165.8L501 164.4L502 163.6L503 166.8L504 165L505 165.1L506 162.8L507 162.5L508 165.5L509 162.8L510 163.4L511 166.2L512 165.2L513 167.3L514 164.4L515 165.9L516 165.4L517 166.5L518 166.9L519 164.2L520 162.7L521 162.9L522 158.5L523 159.6L524 157.1L525 151.9L526 154.8L527 154.3L528 153.9L529 149.6L530 152.9L531 153.4L532 149.5L533 153.8L534 150.7L535 152.1L536 151.8L537 151.8L538 154.3L539 153.7L540 158L541 154.4L542 155.8L543 154.9L544 158.1L545 154.9L546 154.1L547 158.7L548 157.5L549 156.4L550 155.1L551 158.3L552 158.7L553 158.5L554 156.7L555 156.1L556 158.1L557 158.3L558 158.3L559 158.6L560 158.3L561 159.9L562 157.5L563 154.9L564 157.7L565 155.8L566 158.6L567 155L568 152.4L569 150.5L570 149L571 148.1L572 146.7L573 144.7L574 148L575 147.8L576 145.9L577 146.5L578 150.1L579 151.8L580 151.6L581 155.6L582 156.5L583 158.1L584 157.1L585 159.5L586 160.9L587 159.6L588 159.2L589 163.9L590 168.6L591 183.3L591.8 192.7L592.7 185.7L592.7 85.8L594 85.8L594 14.1L595.8 14.1L596.2 162.2L596.4 185.7L597.6 182.1L597.8 157.2L599.5 164.2L600 162.9L601 160.9L602 162.4L603 160.2L604 161.6L605 163.3L606 163.6L607 164.6L608 162.3L609 162.8L610 164L611 163L612 163.3L613 161L614 164.3L615 159.9L616 162.6L617 162L618 162.7L619 160.9L620 161L621 162.4L622 162.8L623 161.6L624 161L625 163.3L626 161.7L627 160.5L628 163.1L629 164.4L630 164.4L631 161.9L632 162.8L633 162L634 163.2L635 167L636 167.9L637 166.4L638 164.4L639 159.4L640 156.6L641 154.5L642 156L643 151L644 152.1L645 150.9L646 149L647 152L648 151.7L649 147.6L650 150.1L651 150.1L652 149.5L653 149.6L654 153.6L655 152.5L656 152.5L657 152.8L658 154.8L659 153.3L660 151.5L661 154.5L662 153.8L663 156.1L664 155.4L665 153.5L666 156.5L667 152.6L668 152.6L669 156.9L670 152.7L671 155.7L672 153.8L673 154L674 156.5L675 154.6L676 154.9L677 154.2L678 157.1L679 154.7L680 153.5L681 154.8L682 155.3L683 157.4L684 155.2L685 155.8L686 153.7L687 152.1L688 150.4L689 150.1L690 145.7L691 145.2L692 146.9L693 142.6L694 143.2L695 146.2L696 143.5L697 149L698 149.5L699 148.8L700 150.7L701 152.1L702 152.8L703 155.1L704 156.8L705 158.5L706 160L707 157.6L708 158.4L709 162.1L710 166.8L711 175.1L711.8 184.5L712.7 177.4L712.7 85.8L714 85.8L714 20L715.8 20L716.2 153.9L716.4 177.4L717.6 173.9L717.8 157L719.5 164.1L720 161.5L721 160.5L722 162.5L723 163L724 162.5L725 160L726 164.3L727 162L728 163.3L729 160.7L730 162.9L731 163L732 162.7L733 162L734 160.8L735 163L736 160.5L737 164.4L738 163.6L739 164.5L740 164.5L741 161.1L742 161.4L743 164.2L744 164.2L745 163.1L746 161.5L747 161.1L748 161.5L749 162.3L750 164.7L751 163.8L752 165.5L753 164.5L754 164.9L755 167.5L756 167L757 161.9L758 163.4L759 157.2L760 154.8L761 152.7L762 153.7L763 151L764 149.9L765 149.4L766 147.3L767 148.5L768 150.2L769 147L770 149.3L771 149.2L772 149.2L773 153.5L774 150.1L775 151.2L776 152.6L777 153L778 153.7L779 155.2L780 153.6L781 156.3L782 154L783 153.4L784 154.5L785 154L786 152.1L787 152.6L788 156.6L789 153.3L790 154.3L791 157.4L792 155.9L793 156.7L794 157.6L795 155.3L796 153.4L797 156.7L798 153.8L799 154.6L800 157.3L801 153.4L802 154.6L803 152.7L804 153.6L805 152.7L806 152.4L807 147.7L808 144.7L809 144.1L810 145.6L811 143.4L812 144.2L813 145.6L814 147.4L815 148.7L816 149.6L817 151.2L818 150.7L819 150.9L820 153L821 154.8L822 154.7L823 157.5L824 157.6L825 157.1L826 159.9L827 161.8L828 166.5L829 172.7L829.8 182.1L830.7 175.1L830.7 85.8L832 85.8L832 11.7L833.8 11.7L834.2 151.6L834.4 175.1L835.6 171.5L835.8 161.6L837.5 168.7L838 168L839 164.3L840 165.3L841 167.1L842 167.1L843 166.3L844 166L845 168L846 169.2L847 168.1L848 165.2L849 168.6L850 167L851 168.4L852 168.3L853 168.6L854 167.4L855 168.7L856 169.4L857 169L858 168.8L859 167.1L860 169.4L861 169.6L862 167.5L863 167.7L864 166.2L865 169.6L866 167.8L867 167.9L868 169.9L869 165L870 169L871 170.3L872 169L873 171.2L874 169.5L875 171.5L876 171.7L877 169.7L878 164L879 164.2L880 159.8L881 159.7L882 155.5L883 156.9L884 156.3L885 155.9L886 152.8L887 153.5L888 154.6L889 155.7L890 152.7L891 151.7L892 154.2L893 157.8L894 158.2L895 158.5L896 158.6L897 159.8L898 160.3L899 157.4L900 156.2L901 159.9L902 156.1L903 158.7L904 157.2L905 156.7L906 156.7L907 161.5L908 160.2L909 158.7L910 157.1L911 161.7L912 160.7L913 157.9L914 161.9L915 160.5L916 160.9L917 159.3L918 158.1L919 162.1L920 159.1L921 158.9L922 158.2L923 159.5L924 157.5L925 160.2L926 159.8L927 159.5L928 154.4L929 153.7L930 152.6L931 152.2L932 148.8L933 148.8L934 147.7L935 148.7L936 149.5L937 152.6L938 151.2L939 156.1L940 155L941 154.7L942 156.3L943 160.5L944 160.9L945 158.7L946 160.7L947 160.5L948 161.4L949 164.6L950 166.7L951 171.4L952 171.5L952.8 181L953.7 173.9L953.7 85.8L955 85.8L955 4.7L956.8 4.7L957.2 150.4L957.4 173.9L958.6 170.4L958.8 162.1L960.5 169.1L961 164.7L962 165.6L963 167.7L964 167.6L965 169.2L966 167.5L967 164.7L968 169.2L969 166.8L970 169.2L971 169.4L972 166.5L973 168.7L974 169.7L975 169.2L976 166.7L977 167.1L978 170.1L979 169L980 165.3L981 169.2L982 167.4L983 168.2L984 166.4L985 167.4L986 166.9L987 169L988 171.6L989 172.5L990 173.1L991 166.3L992 167.1L993 165.2L994 158.1L995 159.8L996 154L997 157.4L998 155.1L999 156L1000 152.5L1001 153.2L1002 153.7L1003 153.8L1004 153.9L1005 157.3L1006 156.7L1007 158.2L1008 160.5L1009 156.9L1010 158.3L1011 157.3L1012 160.6L1013 159L1014 159.6L1015 158.3L1016 161.8L1017 160.6L1018 160L1019 162.3L1020 159.9L1021 159.1L1022 160.9L1023 159.9L1024 160.2L1025 162.3L1026 161.4L1027 157.8L1028 161L1029 160.3L1030 161.9L1031 159.7L1032 157.2L1033 150.4L1034 149.9L1035 148.3L1036 147L1037 148.2L1038 147.5L1039 151.3L1040 153.7L1041 152.6L1042 154.3L1043 155.6L1044 159.5L1045 159.2L1046 162.3L1047 160.5L1048 165.4L1049 170.1L1050 175.1L1050.8 184.5L1051.7 177.4L1051.7 85.8L1053 85.8L1053 12.9L1054.8 12.9L1055.2 153.9L1055.4 177.4L1056.6 173.9L1056.8 155.1L1058.5 162.1L1059 157.6L1060 161L1061 157.7L1062 161.7L1063 162.1L1064 158.9L1065 161.2L1066 160L1067 159.5L1068 162.6L1069 159L1070 161.4L1071 160.6L1072 161.1L1073 159.1L1074 159.1L1075 161.5L1076 162.5L1077 161.5L1078 161L1079 162.7L1080 162.4L1081 159.2L1082 159.6L1083 158.2L1084 158.2L1085 158.8L1086 161.4L1087 162.5L1088 161.8L1089 161L1090 160.7L1091 160.7L1092 161.7L1093 159.1L1094 162.1L1095 161.2L1096 159.1L1097 159.5L1098 162.2L1099 162.5L1100 160.2L1101 164.8L1102 164.7L1103 163.2L1104 163.6L1105 166.1L1106 166.2L1107 163.5L1108 158.7L1109 158.4L1110 154.1L1111 153.7L1112 151.2L1113 154.6L1114 152.3L1115 151.8L1116 149L1117 149.2L1118 150.5L1119 147.7L1120 149.8L1121 148.4L1122 148.5L1123 145.6L1124 148L1125 149.3L1126 150.8L1127 149.3L1128 148.7L1129 148.9L1130 148.2L1131 149.1L1132 152.5L1133 153.5L1134 150.5L1135 150.4L1136 151.9L1137 150.4L1138 151.9L1139 153.4L1140 154.1L1141 155L1142 151.8L1143 150.6L1144 150.6L1145 153L1146 152.1L1147 150.8L1148 151.5L1149 152.7L1150 153.7L1151 153.3L1152 155.2L1153 155.2L1154 152.7L1155 151.2L1156 153.6L1157 154.4L1158 154.8L1159 154.3L1160 152.3L1161 154L1162 151.3L1163 155.3L1164 154.3L1165 153.1L1166 153.6L1167 151.2L1168 150.5L1169 148.2L1170 148L1171 149.1L1172 144.5L1173 144L1174 143.8L1175 144.4L1176 141.7L1177 140.2L1178 143.8L1179 142L1180 144.7L1181 145.1L1182 144.3L1183 145.1L1184 147.7L1185 151L1186 148.2L1187 153L1188 153L1189 151.6L1190 155L1191 156L1192 153.3L1193 154.1L1194 158.1L1195 158.5L1196 159.9L1197 160.8L1197.5 161.2L1198.5 165.9L1199.5 175.1L1200.3 184.5L1201.2 177.4L1201.2 85.8L1202.5 85.8L1202.5 11.7L1204.3 11.7L1204.7 153.9L1204.9 177.4L1206.1 173.9L1206.3 160L1208 167.1L1208 165.9L1209 162.3L1210 166.9L1211 166.2L1212 166.4L1213 167L1214 164.8L1215 163.7L1216 163.2L1217 164.3L1218 163.4L1219 167.6L1220 166.3L1221 162.8L1222 167.4L1223 166.4L1224 165.4L1225 166.5L1226 165.1L1227 167.7L1228 166.8L1229 163.1L1230 167.3L1231 163.4L1232 167.2L1233 163L1234 164.7L1235 164.9L1236 167.5L1237 168L1238 164.4L1239 167.5L1240 167.4L1241 164.2L1242 164.3L1243 169.2L1244 165.1L1245 167.9L1246 169.3L1247 171.4L1248 168.1L1249 162.8L1250 164.2L1251 163.1L1252 161.2L1253 159.6L1254 156.7L1255 152L1256 155.6L1257 154.7L1258 150.5L1259 150L1260 149.8L1261 153.3L1262 152.7L1263 150.2L1264 153.1L1265 152.5L1266 155L1267 157.1L1268 155.9L1269 154.4L1270 154.7L1271 156.2L1272 156.8L1273 156.6L1274 157.2L1275 156.8L1276 155.4L1277 158.7L1278 156.8L1279 155.2L1280 155.7L1281 159.3L1282 155.3L1283 156.1L1284 159.7L1285 159.3L1286 159.7L1287 160.6L1288 155.9L1289 159L1290 156.7L1291 160.7L1292 161.3L1293 156.8L1294 157L1295 155.8L1296 157.3L1297 157.9L1298 156.5L1299 159.9L1300 156.7L1301 155L1302 154.4L1303 149.9L1304 150L1305 148.5L1306 148.6L1307 148.3L1308 147.5L1309 146.7L1310 146.1L1311 147.7L1312 149.5L1313 150.9L1314 154.9L1315 152.5L1316 157.3L1317 159.2L1318 158.3L1319 158L1320 161L1321 160.3L1322 163.1L1323 160.5L1324 165.3L1325 170L1326 178.6L1326.8 188L1327.7 181L1327.7 85.8L1329 85.8L1329 11.7L1330.8 11.7L1331.2 157.5L1331.4 181L1332.6 177.4L1332.8 160.2L1334.5 167.3L1335 165.2L1336 165.1L1337 164.8L1338 163.1L1339 162.6L1340 165L1341 165.4L1342 164.6L1343 167.4L1344 165.6L1345 163.5L1346 163.9L1347 167.6L1348 163.6L1349 166L1350 163L1351 166.2L1352 167L1353 165.3L1354 163.6L1355 166L1356 163.8L1357 164.6L1358 166.5L1359 166.8L1360 165.8L1361 166.4L1362 166.6L1363 165.2L1364 164.1L1365 165.6L1366 167.9L1367 167.7L1368 167.6L1369 166.9L1370 170L1371 171L1372 170.4L1373 169L1374 168.1L1375 163.1L1376 159.2L1377 159.4L1378 156.5L1379 154.3L1380 152.4L1381 151.4L1382 153.6L1383 152L1384 154.6L1385 150.4L1386 152.7L1387 152.5L1388 150.9L1389 154.6L1390 155.6L1391 152.9L1392 154.6L1393 157.8L1394 158.6L1395 157.5L1396 159.4L1397 155.2L1398 158.7L1399 158.3L1400 157.8L1401 157.3L1402 157.8L1403 156.9L1404 156.9L1405 158.2L1406 160L1407 155.6L1408 157.2L1409 160.4L1410 158.7L1411 157.2L1412 156.1L1413 161L1414 161.4L1415 159.1L1416 159.4L1417 156.8L1418 157L1419 159.4L1420 158.8L1421 157.8L1422 156.1L1423 159.4L1424 156.4L1425 155.7L1426 150.7L1427 152L1428 146.7L1429 148.2L1430 147.3L1431 149.3L1432 148.6L1433 148.8L1434 148.2L1435 151.3L1436 153.9L1437 151.5L1438 154.3L1439 156.2L1440 159.1L1441 159.6L1442 157.5L1443 162.4L1444 161.3L1445 161.8L1446 164.1L1446.5 165.3L1447.5 170L1448.5 171.5L1449.3 181L1450.2 173.9L1450.2 85.8L1451.5 85.8L1451.5 4.7L1453.3 4.7L1453.7 150.4L1453.9 173.9L1455.1 170.4L1455.3 154L1457 161L1457 157.2L1458 156.6L1459 156.9L1460 157.5L1461 160.3L1462 161.1L1463 159.2L1464 159.9L1465 160.5L1466 157.1L1467 160.5L1468 157.4L1469 156.8L1470 161.1L1471 157L1472 159.8L1473 160.8L1474 160.9L1475 161.7L1476 159.4L1477 160L1478 157.6L1479 157.8L1480 161.8L1481 160.1L1482 160.2L1483 161.3L1484 161L1485 160.9L1486 158.8L1487 160.6L1488 161.8L1489 161.9L1490 161.4L1491 161.5L1492 163.8L1493 162.1L1494 163.4L1495 158.6L1496 156.6L1497 156.8L1498 151.9L1499 151.9L1500 149.3L1501 147.2L1502 146.6L1503 147.2L1504 148.9L1505 144.9L1506 144.2L1507 145.8L1508 145.9L1509 148.1L1510 145.4L1511 147L1512 150L1513 147.5L1514 147.2L1515 151.1L1516 148L1517 150.7L1518 152.4L1519 149.7L1520 151.8L1521 149.9L1522 150.8L1523 153.4L1524 151.3L1525 149.8L1526 151.8L1527 151.6L1528 150L1529 152.3L1530 152.2L1531 151.8L1532 150.7L1533 154L1534 154.7L1535 151.4L1536 152.4L1537 153.5L1538 150.3L1539 150.2L1540 151.8L1541 149.3L1542 150L1543 149.3L1544 149.4L1545 148.5L1546 142.7L1547 141.6L1548 143L1549 141.7L1550 140.6L1551 142L1552 141.1L1553 143.3L1554 145.7L1555 148.5L1556 147.4L1557 149.9L1558 149L1559 153.1L1560 153L1561 155L1562 154.9L1563 155L1564 158.5L1565 158.8L1566 163.5L1567 170.4L1567.8 179.8L1568.7 172.7L1568.7 85.8L1570 85.8L1570 14.1L1571.8 14.1L1572.2 149.2L1572.4 172.7L1573.6 169.2L1573.8 158.3L1575.5 165.3L1576 165.3L1577 163.1L1578 164.6L1579 163.1L1580 164.9L1581 165.3L1582 163L1583 161.1L1584 161.4L1585 163.3L1586 163.9L1587 165.7L1588 164.6L1589 164.5L1590 161.3L1591 165.6L1592 161.3L1593 163.8L1594 164L1595 165L1596 161.4L1597 165.4L1598 163.5L1599 163.8L1600 165.5L1601 165.4L1602 161.5L1603 162.5L1604 162.9L1605 162L1606 166.4L1607 163.9L1608 164.3L1609 167.7L1610 167.2L1611 165.2L1612 166.2L1613 161.5L1614 162.2L1615 157.7L1616 157.9L1617 154.7L1618 153.5L1619 149.8L1620 150.1L1621 151.1L1622 149.8L1623 150.8L1624 148.6L1625 151.7L1626 150.8L1627 151.1L1628 152.7L1629 155.1L1630 155L1631 153.2L1632 156L1633 153.5L1634 154.9L1635 152.7L1636 153.4L1637 154.1L1638 156.1L1639 157.9L1640 155.4L1641 154.5L1642 153.7L1643 157.5L1644 157.9L1645 153.8L1646 155.1L1647 156.6L1648 155.4L1649 158.5L1650 156.6L1651 156.1L1652 156.5L1653 158.7L1654 158.7L1655 156L1656 154.5L1657 158.2L1658 158.7L1659 158.1L1660 152.5L1661 152.1L1662 149.4L1663 144.9L1664 146.3L1665 147.4L1666 144.5L1667 147.5L1668 147L1669 146.4L1670 150.6L1671 152.8L1672 151.5L1673 153.8L1674 151.7L1675 157.5L1676 155L1677 158.1L1678 157L1679 159.9L1680 159.7L1681 162.9L1682 167.6L1683 171.5L1683.8 181L1684.7 173.9L1684.7 85.8L1686 85.8L1686 17.6L1687.8 17.6L1688.2 150.4L1688.4 173.9L1689.6 170.4L1689.8 155.3L1691.5 162.3L1692 160.9L1693 161.4L1694 160.2L1695 158.4L1696 160.8L1697 161.4L1698 160.4L1699 162.1L1700 160.9L1701 159.6L1702 159.7L1703 159.5" transform="translate(0 1827) scale(1 0.97021)" fill="none" stroke="#ffff00" stroke-width="1.7" stroke-linejoin="round" vector-effect="non-scaling-stroke"/>
<path d="M201 1884h17M1871 1884h-17M201 1941h17M1871 1941h-17M201 1998h17M1871 1998h-17M409.8 1827v15M409.8 2055v-15M618.5 1827v15M618.5 2055v-15M827.2 1827v15M827.2 2055v-15M1036 1827v15M1036 2055v-15M1244.8 1827v15M1244.8 2055v-15M1453.5 1827v15M1453.5 2055v-15M1662.2 1827v15M1662.2 2055v-15" stroke="#fff" stroke-width="2" fill="none"/>
<rect x="201" y="1827" width="1670" height="228" fill="none" stroke="#fff" stroke-width="2"/>
<text transform="translate(194 1833.6) scale(0.86 1)" text-anchor="end" class="ax">1</text>
<text transform="translate(194 1890.6) scale(0.86 1)" text-anchor="end" class="ax">0.5</text>
<text transform="translate(194 1947.6) scale(0.86 1)" text-anchor="end" class="ax">0</text>
<text transform="translate(194 2004.6) scale(0.86 1)" text-anchor="end" class="ax">-0.5</text>
<text transform="translate(194 2061.6) scale(0.86 1)" text-anchor="end" class="ax">-1</text>
<text x="908" y="1814.2" class="ax" textLength="251.3" lengthAdjust="spacingAndGlyphs">Simulation: Filtered ECG Signal</text>
<path d="M202 1941V1956" stroke="#ff0" stroke-width="1.7"/>
<rect x="201" y="2109" width="1670" height="229" fill="#000"/>
<path d="M201 2165.7H1871M201 2222.5H1871M201 2279.3H1871M409.8 2109V2338M618.5 2109V2338M827.2 2109V2338M1036 2109V2338M1244.8 2109V2338M1453.5 2109V2338M1662.2 2109V2338" stroke="#fff" stroke-width="2" stroke-dasharray="2 6.7" fill="none"/>
<path d="M201 131.7L202 132.1L203 135.9L204 134.7L205 134.8L206 137.8L207 137.9L208 139.6L209 144L210 141.6L211 143.8L212 146.5L213 149.2L214 146.1L215 149.4L216 148.5L217 148L218 149.3L219 148.6L220 151.7L221 150L222 152.2L223 150L224 150.7L225 155.5L226 155.8L227 160.5L228 165.7L228.8 175.1L229.7 168L229.7 85.8L231 85.8L231 16.5L232.8 16.5L233.2 144.5L233.4 168L234.6 164.5L234.8 160.2L236.5 167.2L237 166.8L238 166.4L239 162.6L240 165.3L241 164.4L242 166.1L243 165.1L244 165.7L245 166L246 164.8L247 164.8L248 163.2L249 164.4L250 163.2L251 163.6L252 162.9L253 164.6L254 167.3L255 163.7L256 163.2L257 163.5L258 165.3L259 164.6L260 167.2L261 164.1L262 165.4L263 167L264 168.1L265 164.1L266 163.4L267 168.1L268 164.5L269 166.6L270 168.6L271 168.5L272 166.7L273 166.8L274 171.7L275 167.7L276 168.4L277 162.6L278 162.5L279 157.9L280 155.6L281 156.3L282 151.9L283 154.6L284 155.5L285 152.5L286 155.1L287 154L288 152.6L289 151.6L290 154.5L291 155.7L292 151.9L293 155.3L294 152.6L295 153.4L296 156.6L297 156.8L298 156.7L299 156.1L300 156.5L301 156.8L302 156.6L303 155L304 157.4L305 157.9L306 156.5L307 159.1L308 158.9L309 155.5L310 158L311 158L312 160.9L313 158.9L314 158.1L315 161.2L316 158.2L317 158.2L318 161.3L319 158.2L320 158.9L321 157.6L322 159.2L323 157.2L324 156.8L325 160.4L326 159L327 153.5L328 149.8L329 151.3L330 149.3L331 148L332 148.9L333 148L334 147.7L335 148.7L336 148.9L337 151.9L338 152.9L339 152L340 157.1L341 155.5L342 155.8L343 159.1L344 160.5L345 158.5L346 162.3L347 163.6L348 163.2L349 165.3L350 170L351 171.5L351.8 181L352.7 173.9L352.7 85.8L354 85.8L354 5.9L355.8 5.9L356.2 150.4L356.4 173.9L357.6 170.4L357.8 157.7L359.5 164.7L360 161.4L361 164.5L362 163.4L363 163.3L364 160.8L365 162.9L366 160.8L367 164.3L368 163.5L369 161.9L370 160.8L371 163L372 164.2L373 164.8L374 162.7L375 164.5L376 161.4L377 161.3L378 164.7L379 164.2L380 161.5L381 162.4L382 161.6L383 164L384 165.2L385 164.4L386 161.8L387 164.6L388 164.2L389 163.9L390 163.9L391 164L392 161.6L393 166.2L394 167.7L395 163.4L396 164.4L397 164.5L398 165.3L399 160.3L400 158.1L401 159.9L402 155.4L403 153.1L404 152.2L405 151.1L406 152L407 151.5L408 151.8L409 152.3L410 149.3L411 150.6L412 148.3L413 152.8L414 148.9L415 150.6L416 149.9L417 150.6L418 151.2L419 153.4L420 156.7L421 153L422 156.1L423 155.6L424 153.8L425 154.6L426 155.3L427 152.7L428 154.5L429 156L430 156.6L431 153.6L432 155.7L433 154.2L434 156.5L435 157.5L436 155.8L437 154.5L438 157.9L439 154.8L440 154.3L441 154.8L442 154.6L443 158.6L444 155.3L445 153.9L446 157.9L447 156.6L448 155.9L449 152.3L450 150.6L451 148.1L452 145.3L453 148.7L454 147.8L455 146.8L456 146.3L457 147.5L458 144.2L459 146.3L460 151.7L461 150.7L462 152.9L463 154.1L464 155.1L465 154.8L466 156L467 158.2L468 160L469 160.3L470 162.3L471 162.7L472 167.4L473 175.1L473.8 184.5L474.7 177.4L474.7 85.8L476 85.8L476 2.4L477.8 2.4L478.2 153.9L478.4 177.4L479.6 173.9L479.8 159.1L481.5 166.2L482 163.5L483 162.7L484 164.5L485 166.1L486 165.6L487 164.7L488 163.5L489 162.6L490 164.7L491 162.6L492 163.6L493 164.6L494 164.9L495 164.3L496 163.3L497 164.8L498 163.4L499 164.7L500 165.8L501 164.4L502 163.6L503 166.8L504 165L505 165.1L506 162.8L507 162.5L508 165.5L509 162.8L510 163.4L511 166.2L512 165.2L513 167.3L514 164.4L515 165.9L516 165.4L517 166.5L518 166.9L519 164.2L520 162.7L521 162.9L522 158.5L523 159.6L524 157.1L525 151.9L526 154.8L527 154.3L528 153.9L529 149.6L530 152.9L531 153.4L532 149.5L533 153.8L534 150.7L535 152.1L536 151.8L537 151.8L538 154.3L539 153.7L540 158L541 154.4L542 155.8L543 154.9L544 158.1L545 154.9L546 154.1L547 158.7L548 157.5L549 156.4L550 155.1L551 158.3L552 158.7L553 158.5L554 156.7L555 156.1L556 158.1L557 158.3L558 158.3L559 158.6L560 158.3L561 159.9L562 157.5L563 154.9L564 157.7L565 155.8L566 158.6L567 155L568 152.4L569 150.5L570 149L571 148.1L572 146.7L573 144.7L574 148L575 147.8L576 145.9L577 146.5L578 150.1L579 151.8L580 151.6L581 155.6L582 156.5L583 158.1L584 157.1L585 159.5L586 160.9L587 159.6L588 159.2L589 163.9L590 168.6L591 183.3L591.8 192.7L592.7 185.7L592.7 85.8L594 85.8L594 14.1L595.8 14.1L596.2 162.2L596.4 185.7L597.6 182.1L597.8 157.2L599.5 164.2L600 162.9L601 160.9L602 162.4L603 160.2L604 161.6L605 163.3L606 163.6L607 164.6L608 162.3L609 162.8L610 164L611 163L612 163.3L613 161L614 164.3L615 159.9L616 162.6L617 162L618 162.7L619 160.9L620 161L621 162.4L622 162.8L623 161.6L624 161L625 163.3L626 161.7L627 160.5L628 163.1L629 164.4L630 164.4L631 161.9L632 162.8L633 162L634 163.2L635 167L636 167.9L637 166.4L638 164.4L639 159.4L640 156.6L641 154.5L642 156L643 151L644 152.1L645 150.9L646 149L647 152L648 151.7L649 147.6L650 150.1L651 150.1L652 149.5L653 149.6L654 153.6L655 152.5L656 152.5L657 152.8L658 154.8L659 153.3L660 151.5L661 154.5L662 153.8L663 156.1L664 155.4L665 153.5L666 156.5L667 152.6L668 152.6L669 156.9L670 152.7L671 155.7L672 153.8L673 154L674 156.5L675 154.6L676 154.9L677 154.2L678 157.1L679 154.7L680 153.5L681 154.8L682 155.3L683 157.4L684 155.2L685 155.8L686 153.7L687 152.1L688 150.4L689 150.1L690 145.7L691 145.2L692 146.9L693 142.6L694 143.2L695 146.2L696 143.5L697 149L698 149.5L699 148.8L700 150.7L701 152.1L702 152.8L703 155.1L704 156.8L705 158.5L706 160L707 157.6L708 158.4L709 162.1L710 166.8L711 175.1L711.8 184.5L712.7 177.4L712.7 85.8L714 85.8L714 20L715.8 20L716.2 153.9L716.4 177.4L717.6 173.9L717.8 157L719.5 164.1L720 161.5L721 160.5L722 162.5L723 163L724 162.5L725 160L726 164.3L727 162L728 163.3L729 160.7L730 162.9L731 163L732 162.7L733 162L734 160.8L735 163L736 160.5L737 164.4L738 163.6L739 164.5L740 164.5L741 161.1L742 161.4L743 164.2L744 164.2L745 163.1L746 161.5L747 161.1L748 161.5L749 162.3L750 164.7L751 163.8L752 165.5L753 164.5L754 164.9L755 167.5L756 167L757 161.9L758 163.4L759 157.2L760 154.8L761 152.7L762 153.7L763 151L764 149.9L765 149.4L766 147.3L767 148.5L768 150.2L769 147L770 149.3L771 149.2L772 149.2L773 153.5L774 150.1L775 151.2L776 152.6L777 153L778 153.7L779 155.2L780 153.6L781 156.3L782 154L783 153.4L784 154.5L785 154L786 152.1L787 152.6L788 156.6L789 153.3L790 154.3L791 157.4L792 155.9L793 156.7L794 157.6L795 155.3L796 153.4L797 156.7L798 153.8L799 154.6L800 157.3L801 153.4L802 154.6L803 152.7L804 153.6L805 152.7L806 152.4L807 147.7L808 144.7L809 144.1L810 145.6L811 143.4L812 144.2L813 145.6L814 147.4L815 148.7L816 149.6L817 151.2L818 150.7L819 150.9L820 153L821 154.8L822 154.7L823 157.5L824 157.6L825 157.1L826 159.9L827 161.8L828 166.5L829 172.7L829.8 182.1L830.7 175.1L830.7 85.8L832 85.8L832 11.7L833.8 11.7L834.2 151.6L834.4 175.1L835.6 171.5L835.8 161.6L837.5 168.7L838 168L839 164.3L840 165.3L841 167.1L842 167.1L843 166.3L844 166L845 168L846 169.2L847 168.1L848 165.2L849 168.6L850 167L851 168.4L852 168.3L853 168.6L854 167.4L855 168.7L856 169.4L857 169L858 168.8L859 167.1L860 169.4L861 169.6L862 167.5L863 167.7L864 166.2L865 169.6L866 167.8L867 167.9L868 169.9L869 165L870 169L871 170.3L872 169L873 171.2L874 169.5L875 171.5L876 171.7L877 169.7L878 164L879 164.2L880 159.8L881 159.7L882 155.5L883 156.9L884 156.3L885 155.9L886 152.8L887 153.5L888 154.6L889 155.7L890 152.7L891 151.7L892 154.2L893 157.8L894 158.2L895 158.5L896 158.6L897 159.8L898 160.3L899 157.4L900 156.2L901 159.9L902 156.1L903 158.7L904 157.2L905 156.7L906 156.7L907 161.5L908 160.2L909 158.7L910 157.1L911 161.7L912 160.7L913 157.9L914 161.9L915 160.5L916 160.9L917 159.3L918 158.1L919 162.1L920 159.1L921 158.9L922 158.2L923 159.5L924 157.5L925 160.2L926 159.8L927 159.5L928 154.4L929 153.7L930 152.6L931 152.2L932 148.8L933 148.8L934 147.7L935 148.7L936 149.5L937 152.6L938 151.2L939 156.1L940 155L941 154.7L942 156.3L943 160.5L944 160.9L945 158.7L946 160.7L947 160.5L948 161.4L949 164.6L950 166.7L951 171.4L952 171.5L952.8 181L953.7 173.9L953.7 85.8L955 85.8L955 4.7L956.8 4.7L957.2 150.4L957.4 173.9L958.6 170.4L958.8 162.1L960.5 169.1L961 164.7L962 165.6L963 167.7L964 167.6L965 169.2L966 167.5L967 164.7L968 169.2L969 166.8L970 169.2L971 169.4L972 166.5L973 168.7L974 169.7L975 169.2L976 166.7L977 167.1L978 170.1L979 169L980 165.3L981 169.2L982 167.4L983 168.2L984 166.4L985 167.4L986 166.9L987 169L988 171.6L989 172.5L990 173.1L991 166.3L992 167.1L993 165.2L994 158.1L995 159.8L996 154L997 157.4L998 155.1L999 156L1000 152.5L1001 153.2L1002 153.7L1003 153.8L1004 153.9L1005 157.3L1006 156.7L1007 158.2L1008 160.5L1009 156.9L1010 158.3L1011 157.3L1012 160.6L1013 159L1014 159.6L1015 158.3L1016 161.8L1017 160.6L1018 160L1019 162.3L1020 159.9L1021 159.1L1022 160.9L1023 159.9L1024 160.2L1025 162.3L1026 161.4L1027 157.8L1028 161L1029 160.3L1030 161.9L1031 159.7L1032 157.2L1033 150.4L1034 149.9L1035 148.3L1036 147L1037 148.2L1038 147.5L1039 151.3L1040 153.7L1041 152.6L1042 154.3L1043 155.6L1044 159.5L1045 159.2L1046 162.3L1047 160.5L1048 165.4L1049 170.1L1050 175.1L1050.8 184.5L1051.7 177.4L1051.7 85.8L1053 85.8L1053 12.9L1054.8 12.9L1055.2 153.9L1055.4 177.4L1056.6 173.9L1056.8 155.1L1058.5 162.1L1059 157.6L1060 161L1061 157.7L1062 161.7L1063 162.1L1064 158.9L1065 161.2L1066 160L1067 159.5L1068 162.6L1069 159L1070 161.4L1071 160.6L1072 161.1L1073 159.1L1074 159.1L1075 161.5L1076 162.5L1077 161.5L1078 161L1079 162.7L1080 162.4L1081 159.2L1082 159.6L1083 158.2L1084 158.2L1085 158.8L1086 161.4L1087 162.5L1088 161.8L1089 161L1090 160.7L1091 160.7L1092 161.7L1093 159.1L1094 162.1L1095 161.2L1096 159.1L1097 159.5L1098 162.2L1099 162.5L1100 160.2L1101 164.8L1102 164.7L1103 163.2L1104 163.6L1105 166.1L1106 166.2L1107 163.5L1108 158.7L1109 158.4L1110 154.1L1111 153.7L1112 151.2L1113 154.6L1114 152.3L1115 151.8L1116 149L1117 149.2L1118 150.5L1119 147.7L1120 149.8L1121 148.4L1122 148.5L1123 145.6L1124 148L1125 149.3L1126 150.8L1127 149.3L1128 148.7L1129 148.9L1130 148.2L1131 149.1L1132 152.5L1133 153.5L1134 150.5L1135 150.4L1136 151.9L1137 150.4L1138 151.9L1139 153.4L1140 154.1L1141 155L1142 151.8L1143 150.6L1144 150.6L1145 153L1146 152.1L1147 150.8L1148 151.5L1149 152.7L1150 153.7L1151 153.3L1152 155.2L1153 155.2L1154 152.7L1155 151.2L1156 153.6L1157 154.4L1158 154.8L1159 154.3L1160 152.3L1161 154L1162 151.3L1163 155.3L1164 154.3L1165 153.1L1166 153.6L1167 151.2L1168 150.5L1169 148.2L1170 148L1171 149.1L1172 144.5L1173 144L1174 143.8L1175 144.4L1176 141.7L1177 140.2L1178 143.8L1179 142L1180 144.7L1181 145.1L1182 144.3L1183 145.1L1184 147.7L1185 151L1186 148.2L1187 153L1188 153L1189 151.6L1190 155L1191 156L1192 153.3L1193 154.1L1194 158.1L1195 158.5L1196 159.9L1197 160.8L1197.5 161.2L1198.5 165.9L1199.5 175.1L1200.3 184.5L1201.2 177.4L1201.2 85.8L1202.5 85.8L1202.5 11.7L1204.3 11.7L1204.7 153.9L1204.9 177.4L1206.1 173.9L1206.3 160L1208 167.1L1208 165.9L1209 162.3L1210 166.9L1211 166.2L1212 166.4L1213 167L1214 164.8L1215 163.7L1216 163.2L1217 164.3L1218 163.4L1219 167.6L1220 166.3L1221 162.8L1222 167.4L1223 166.4L1224 165.4L1225 166.5L1226 165.1L1227 167.7L1228 166.8L1229 163.1L1230 167.3L1231 163.4L1232 167.2L1233 163L1234 164.7L1235 164.9L1236 167.5L1237 168L1238 164.4L1239 167.5L1240 167.4L1241 164.2L1242 164.3L1243 169.2L1244 165.1L1245 167.9L1246 169.3L1247 171.4L1248 168.1L1249 162.8L1250 164.2L1251 163.1L1252 161.2L1253 159.6L1254 156.7L1255 152L1256 155.6L1257 154.7L1258 150.5L1259 150L1260 149.8L1261 153.3L1262 152.7L1263 150.2L1264 153.1L1265 152.5L1266 155L1267 157.1L1268 155.9L1269 154.4L1270 154.7L1271 156.2L1272 156.8L1273 156.6L1274 157.2L1275 156.8L1276 155.4L1277 158.7L1278 156.8L1279 155.2L1280 155.7L1281 159.3L1282 155.3L1283 156.1L1284 159.7L1285 159.3L1286 159.7L1287 160.6L1288 155.9L1289 159L1290 156.7L1291 160.7L1292 161.3L1293 156.8L1294 157L1295 155.8L1296 157.3L1297 157.9L1298 156.5L1299 159.9L1300 156.7L1301 155L1302 154.4L1303 149.9L1304 150L1305 148.5L1306 148.6L1307 148.3L1308 147.5L1309 146.7L1310 146.1L1311 147.7L1312 149.5L1313 150.9L1314 154.9L1315 152.5L1316 157.3L1317 159.2L1318 158.3L1319 158L1320 161L1321 160.3L1322 163.1L1323 160.5L1324 165.3L1325 170L1326 178.6L1326.8 188L1327.7 181L1327.7 85.8L1329 85.8L1329 11.7L1330.8 11.7L1331.2 157.5L1331.4 181L1332.6 177.4L1332.8 160.2L1334.5 167.3L1335 165.2L1336 165.1L1337 164.8L1338 163.1L1339 162.6L1340 165L1341 165.4L1342 164.6L1343 167.4L1344 165.6L1345 163.5L1346 163.9L1347 167.6L1348 163.6L1349 166L1350 163L1351 166.2L1352 167L1353 165.3L1354 163.6L1355 166L1356 163.8L1357 164.6L1358 166.5L1359 166.8L1360 165.8L1361 166.4L1362 166.6L1363 165.2L1364 164.1L1365 165.6L1366 167.9L1367 167.7L1368 167.6L1369 166.9L1370 170L1371 171L1372 170.4L1373 169L1374 168.1L1375 163.1L1376 159.2L1377 159.4L1378 156.5L1379 154.3L1380 152.4L1381 151.4L1382 153.6L1383 152L1384 154.6L1385 150.4L1386 152.7L1387 152.5L1388 150.9L1389 154.6L1390 155.6L1391 152.9L1392 154.6L1393 157.8L1394 158.6L1395 157.5L1396 159.4L1397 155.2L1398 158.7L1399 158.3L1400 157.8L1401 157.3L1402 157.8L1403 156.9L1404 156.9L1405 158.2L1406 160L1407 155.6L1408 157.2L1409 160.4L1410 158.7L1411 157.2L1412 156.1L1413 161L1414 161.4L1415 159.1L1416 159.4L1417 156.8L1418 157L1419 159.4L1420 158.8L1421 157.8L1422 156.1L1423 159.4L1424 156.4L1425 155.7L1426 150.7L1427 152L1428 146.7L1429 148.2L1430 147.3L1431 149.3L1432 148.6L1433 148.8L1434 148.2L1435 151.3L1436 153.9L1437 151.5L1438 154.3L1439 156.2L1440 159.1L1441 159.6L1442 157.5L1443 162.4L1444 161.3L1445 161.8L1446 164.1L1446.5 165.3L1447.5 170L1448.5 171.5L1449.3 181L1450.2 173.9L1450.2 85.8L1451.5 85.8L1451.5 4.7L1453.3 4.7L1453.7 150.4L1453.9 173.9L1455.1 170.4L1455.3 154L1457 161L1457 157.2L1458 156.6L1459 156.9L1460 157.5L1461 160.3L1462 161.1L1463 159.2L1464 159.9L1465 160.5L1466 157.1L1467 160.5L1468 157.4L1469 156.8L1470 161.1L1471 157L1472 159.8L1473 160.8L1474 160.9L1475 161.7L1476 159.4L1477 160L1478 157.6L1479 157.8L1480 161.8L1481 160.1L1482 160.2L1483 161.3L1484 161L1485 160.9L1486 158.8L1487 160.6L1488 161.8L1489 161.9L1490 161.4L1491 161.5L1492 163.8L1493 162.1L1494 163.4L1495 158.6L1496 156.6L1497 156.8L1498 151.9L1499 151.9L1500 149.3L1501 147.2L1502 146.6L1503 147.2L1504 148.9L1505 144.9L1506 144.2L1507 145.8L1508 145.9L1509 148.1L1510 145.4L1511 147L1512 150L1513 147.5L1514 147.2L1515 151.1L1516 148L1517 150.7L1518 152.4L1519 149.7L1520 151.8L1521 149.9L1522 150.8L1523 153.4L1524 151.3L1525 149.8L1526 151.8L1527 151.6L1528 150L1529 152.3L1530 152.2L1531 151.8L1532 150.7L1533 154L1534 154.7L1535 151.4L1536 152.4L1537 153.5L1538 150.3L1539 150.2L1540 151.8L1541 149.3L1542 150L1543 149.3L1544 149.4L1545 148.5L1546 142.7L1547 141.6L1548 143L1549 141.7L1550 140.6L1551 142L1552 141.1L1553 143.3L1554 145.7L1555 148.5L1556 147.4L1557 149.9L1558 149L1559 153.1L1560 153L1561 155L1562 154.9L1563 155L1564 158.5L1565 158.8L1566 163.5L1567 170.4L1567.8 179.8L1568.7 172.7L1568.7 85.8L1570 85.8L1570 14.1L1571.8 14.1L1572.2 149.2L1572.4 172.7L1573.6 169.2L1573.8 158.3L1575.5 165.3L1576 165.3L1577 163.1L1578 164.6L1579 163.1L1580 164.9L1581 165.3L1582 163L1583 161.1L1584 161.4L1585 163.3L1586 163.9L1587 165.7L1588 164.6L1589 164.5L1590 161.3L1591 165.6L1592 161.3L1593 163.8L1594 164L1595 165L1596 161.4L1597 165.4L1598 163.5L1599 163.8L1600 165.5L1601 165.4L1602 161.5L1603 162.5L1604 162.9L1605 162L1606 166.4L1607 163.9L1608 164.3L1609 167.7L1610 167.2L1611 165.2L1612 166.2L1613 161.5L1614 162.2L1615 157.7L1616 157.9L1617 154.7L1618 153.5L1619 149.8L1620 150.1L1621 151.1L1622 149.8L1623 150.8L1624 148.6L1625 151.7L1626 150.8L1627 151.1L1628 152.7L1629 155.1L1630 155L1631 153.2L1632 156L1633 153.5L1634 154.9L1635 152.7L1636 153.4L1637 154.1L1638 156.1L1639 157.9L1640 155.4L1641 154.5L1642 153.7L1643 157.5L1644 157.9L1645 153.8L1646 155.1L1647 156.6L1648 155.4L1649 158.5L1650 156.6L1651 156.1L1652 156.5L1653 158.7L1654 158.7L1655 156L1656 154.5L1657 158.2L1658 158.7L1659 158.1L1660 152.5L1661 152.1L1662 149.4L1663 144.9L1664 146.3L1665 147.4L1666 144.5L1667 147.5L1668 147L1669 146.4L1670 150.6L1671 152.8L1672 151.5L1673 153.8L1674 151.7L1675 157.5L1676 155L1677 158.1L1678 157L1679 159.9L1680 159.7L1681 162.9L1682 167.6L1683 171.5L1683.8 181L1684.7 173.9L1684.7 85.8L1686 85.8L1686 17.6L1687.8 17.6L1688.2 150.4L1688.4 173.9L1689.6 170.4L1689.8 155.3L1691.5 162.3L1692 160.9L1693 161.4L1694 160.2L1695 158.4L1696 160.8L1697 161.4L1698 160.4L1699 162.1L1700 160.9L1701 159.6L1702 159.7L1703 159.5" transform="translate(0 2108.9) scale(1 0.96681)" fill="none" stroke="#ffff00" stroke-width="1.7" stroke-linejoin="round" vector-effect="non-scaling-stroke"/>
<path d="M201 2165.7h17M1871 2165.7h-17M201 2222.5h17M1871 2222.5h-17M201 2279.3h17M1871 2279.3h-17M409.8 2109v15M409.8 2338v-15M618.5 2109v15M618.5 2338v-15M827.2 2109v15M827.2 2338v-15M1036 2109v15M1036 2338v-15M1244.8 2109v15M1244.8 2338v-15M1453.5 2109v15M1453.5 2338v-15M1662.2 2109v15M1662.2 2338v-15" stroke="#fff" stroke-width="2" fill="none"/>
<rect x="201" y="2109" width="1670" height="229" fill="none" stroke="#fff" stroke-width="2"/>
<text transform="translate(194 2115.5) scale(0.86 1)" text-anchor="end" class="ax">1</text>
<text transform="translate(194 2172.3) scale(0.86 1)" text-anchor="end" class="ax">0.5</text>
<text transform="translate(194 2229.1) scale(0.86 1)" text-anchor="end" class="ax">0</text>
<text transform="translate(194 2285.9) scale(0.86 1)" text-anchor="end" class="ax">-0.5</text>
<text transform="translate(194 2342.7) scale(0.86 1)" text-anchor="end" class="ax">-1</text>
<text x="868.2" y="2095.9" class="ax" textLength="332.8" lengthAdjust="spacingAndGlyphs">Hardware simulation: Filtered ECG Signal</text>
<text transform="translate(201 2360.3) scale(0.86 1)" text-anchor="middle" class="ax">0</text>
<text transform="translate(409.8 2360.3) scale(0.86 1)" text-anchor="middle" class="ax">500</text>
<text transform="translate(618.5 2360.3) scale(0.86 1)" text-anchor="middle" class="ax">1000</text>
<text transform="translate(827.2 2360.3) scale(0.86 1)" text-anchor="middle" class="ax">1500</text>
<text transform="translate(1036 2360.3) scale(0.86 1)" text-anchor="middle" class="ax">2000</text>
<text transform="translate(1244.8 2360.3) scale(0.86 1)" text-anchor="middle" class="ax">2500</text>
<text transform="translate(1453.5 2360.3) scale(0.86 1)" text-anchor="middle" class="ax">3000</text>
<text transform="translate(1662.2 2360.3) scale(0.86 1)" text-anchor="middle" class="ax">3500</text>
<text transform="translate(1871 2360.3) scale(0.86 1)" text-anchor="middle" class="ax">4000</text>
<path d="M202 2223.5V2239" stroke="#ff0" stroke-width="1.7"/>
<text x="139" y="2406" class="ax" textLength="98" lengthAdjust="spacingAndGlyphs">Time offset:</text><text x="254" y="2406" class="ax" textLength="10.5" lengthAdjust="spacingAndGlyphs">0</text>
<text x="201.5" y="2463.8" class="cap" font-size="34.5"><tspan font-weight="bold">Fig-8:</tspan> Simulation and Hardware cosimulation results of Filtered ECG signal of Swarm algorithm based Adaptive filter.</text>
<rect x="123" y="2704.9" width="1797" height="2.7" fill="#727272"/>
<text x="124.5" y="2763" class="hd" font-size="36.5">Volume: 04 Issue: 03 | Mar-2015, Available @ http://www.ijret.org</text>
<rect x="842" y="2767.6" width="309.5" height="2.6" fill="#808080"/>
<text x="1921.5" y="2763" text-anchor="end" font-family="Liberation Sans" font-weight="bold" font-size="33.5" fill="#808080">130</text>
</svg></body></html>
